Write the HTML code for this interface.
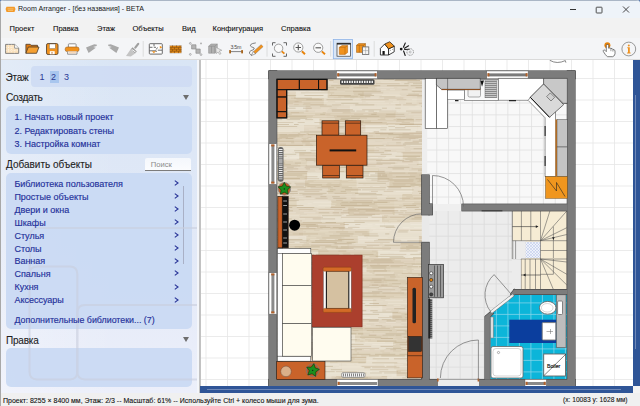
<!DOCTYPE html>
<html><head><meta charset="utf-8">
<style>
*{margin:0;padding:0;box-sizing:border-box}
html,body{width:640px;height:406px;overflow:hidden;background:#5f7fb3;font-family:"Liberation Sans",sans-serif}
.a{position:absolute}
#win{position:absolute;left:0;top:0;width:640px;height:406px;background:#f2f2f2;border-radius:4px 4px 0 0;overflow:hidden}
#title{left:0;top:0;width:640px;height:18px;background:#eef3f9}
#menu{left:0;top:18px;width:640px;height:20px;background:#f2f2f2}
#tool{left:0;top:38px;width:640px;height:22px;background:#f4f5f7;border-bottom:1px solid #dadada}
.t{position:absolute;white-space:nowrap;line-height:1;z-index:4}
.mi{font-size:7.55px;color:#111;top:24px;-webkit-text-stroke:0.1px #111}
#panel{left:0;top:60px;width:197px;height:333px;background:linear-gradient(90deg,rgba(255,255,255,0.25),rgba(255,255,255,0) 60%),linear-gradient(#d9e5f5,#e2e9f7 55%,#eceffa)}
.box{position:absolute;left:6px;width:185.5px;background:#c9d9f3;border-radius:5px;opacity:0.93}
.hd{font-size:10px;color:#1e1e1e;left:6px;-webkit-text-stroke:0.1px #1e1e1e}
.it{font-size:9px;color:#24309a;left:14.4px;-webkit-text-stroke:0.15px #24309a}
.chev{position:absolute;left:174px;width:4px;height:6px}
#canvas{left:201px;top:60px;width:432px;height:326px;background:#fff}
#status{left:0;top:393px;width:640px;height:13px;background:#f0f0f0}
</style></head><body>
<div id="win">
<div id="title" class="a">
  <div class="a" style="left:0;top:0;width:640px;height:1px;background:#aab6c6"></div>
  <svg class="a" style="left:5px;top:6px" width="11" height="7" viewBox="0 0 11 7"><path d="M1.5 0.8H9.5L10.5 3L9.5 6H1.5L0.6 3Z" fill="#f39a2a"/><path d="M2.5 2.9H8.5M3 4.4H8" stroke="#f9d08a" stroke-width="0.7"/></svg>
  <div class="t" style="left:18px;top:5.9px;font-size:7.1px;color:#1a1a1a">Room Arranger - [без названия] - BETA</div>
  <div class="a" style="left:570px;top:9.2px;width:6.2px;height:0.9px;background:#333"></div>
  <svg class="a" style="left:595px;top:5.5px" width="8" height="8" viewBox="0 0 8 8"><rect x="1.2" y="1.2" width="5.8" height="5.8" rx="0.6" fill="none" stroke="#333" stroke-width="0.85"/></svg>
  <svg class="a" style="left:622px;top:6px" width="8" height="7" viewBox="0 0 8 7"><path d="M1 0.5L7 6.5M7 0.5L1 6.5" stroke="#333" stroke-width="0.9"/></svg>
</div>
<div id="menu" class="a">
  <div class="t mi" style="left:9.5px;top:6.8px">Проект</div>
  <div class="t mi" style="left:53px;top:6.8px">Правка</div>
  <div class="t mi" style="left:97px;top:6.8px">Этаж</div>
  <div class="t mi" style="left:132.5px;top:6.8px">Объекты</div>
  <div class="t mi" style="left:182px;top:6.8px">Вид</div>
  <div class="t mi" style="left:212.5px;top:6.8px">Конфигурация</div>
  <div class="t mi" style="left:281px;top:6.8px">Справка</div>
</div>
<div id="tool" class="a"></div>
<svg class="a" style="left:0;top:38px" width="640" height="22" viewBox="0 38 640 22">
<!-- 1 new -->
<path d="M5.6 44.4H14.6L18.7 48.2V53.4H5.6Z" fill="#fbe2bd" stroke="#777" stroke-width="0.9"/>
<path d="M8.5 44.6V53.2M11.5 44.6V53.2M14.5 48V53.2M5.8 47.3H14.4M5.8 50.3H18.5" stroke="#fff" stroke-width="0.6" stroke-dasharray="1 1.2" opacity="0.9"/>
<path d="M14.6 44.4V48.2H18.7" fill="#fff" stroke="#777" stroke-width="0.7"/>
<!-- 2 folder -->
<path d="M25.9 53.3V44.3H30.2L31 45.3H37.5V47" fill="#e07a10" stroke="#4a3a2a" stroke-width="0.8"/>
<path d="M25.9 53.3L28.3 47H39L36.6 53.3Z" fill="#f5a033" stroke="#4a3a2a" stroke-width="0.8" stroke-linejoin="round"/>
<!-- 3 save -->
<rect x="46.5" y="43.5" width="11.5" height="11" rx="1.6" fill="#f0921e" stroke="#5a4632" stroke-width="0.9"/>
<rect x="49.4" y="44" width="5.9" height="4.6" fill="#fff" stroke="#6a5a4a" stroke-width="0.4"/>
<rect x="49.8" y="51.2" width="4.9" height="3.1" fill="#fff"/>
<rect x="51.4" y="52.2" width="1.2" height="1.4" fill="#c87020"/>
<!-- 4 printer -->
<path d="M68.4 47V44.5Q68.4 43.8 69.1 43.8H75.4Q76.1 43.8 76.1 44.5V47" fill="#fff" stroke="#777" stroke-width="0.8"/>
<rect x="65.2" y="47" width="13.8" height="4.6" rx="2" fill="#f0921e" stroke="#a0601a" stroke-width="0.6"/>
<path d="M67.6 51.6V54.2H77V51.6" fill="#fff" stroke="#777" stroke-width="0.8"/>
<path d="M68.6 52.8H76" stroke="#f0b070" stroke-width="0.7"/>
<!-- 5 undo -->
<path d="M86 47.4L91 45.4L94.3 44.2L97 44.7L96.6 46.1L93.2 47L95.8 47.8L88.6 53.1Z" fill="#a9a9a9"/>
<!-- 6 redo -->
<path d="M119 47.4L114 45.4L110.7 44.2L108 44.7L108.4 46.1L111.8 47L109.2 47.8L116.4 53.1Z" fill="#a9a9a9"/>
<!-- 7 brush -->
<path d="M138.2 43.8L135.3 47.6" stroke="#a0a0a0" stroke-width="2.2" stroke-linecap="round"/>
<path d="M130.5 49.4L132.6 47.3L136.8 51.5L135.1 53.6Z" fill="#9c9c9c"/>
<path d="M131.6 49.4L135.6 52" stroke="#fff" stroke-width="1"/>
<path d="M130.5 49.4L135.1 53.6L130.8 56.6L126 56Z" fill="#c4c4c4"/>
<!-- sep -->
<path d="M143.2 41V56.6" stroke="#d6d6d6" stroke-width="0.8"/>
<!-- 8 floor plan -->
<rect x="149.3" y="43.7" width="13" height="10.4" rx="0.8" fill="#fff" stroke="#5a5a5a" stroke-width="0.9"/>
<path d="M149.5 47.3H152.5M153.8 47.3H156M154 44V46.3M157.5 47.5L156.2 49.5M149.5 50.8H156.2V52M157.8 50.2H162" stroke="#4a4a4a" stroke-width="0.8" fill="none"/>
<path d="M159.8 45.8L162.2 47.3L159.8 48.8Z" fill="#f0921e"/>
<path d="M152 51.3H155.8L153.9 53.2Z" fill="#f0921e"/>
<!-- 9 brick -->
<rect x="169.8" y="45.4" width="11.8" height="7.7" fill="#e58a12" stroke="#b8c2d8" stroke-width="0.5"/>
<path d="M169.8 47.35H181.6M169.8 49.25H181.6M169.8 51.15H181.6M172.5 45.4V47.35M176.5 45.4V47.35M180 45.4V47.35M171 47.35V49.25M174.5 47.35V49.25M178.5 47.35V49.25M172.5 49.25V51.15M176.5 49.25V51.15M180 49.25V51.15M171 51.15V53.1M174.5 51.15V53.1M178.5 51.15V53.1" stroke="#7e4a12" stroke-width="0.6"/>
<!-- 10 transform -->
<path d="M191.6 44.8H196V49H200.2V53.3H195.9V49H191.6Z" fill="#b4b4b4" stroke="#888" stroke-width="0.6"/>
<circle cx="190.3" cy="43.4" r="0.9" fill="none" stroke="#888" stroke-width="0.6"/>
<circle cx="201" cy="43.4" r="0.9" fill="#aaa"/>
<circle cx="190.3" cy="54.4" r="0.9" fill="none" stroke="#888" stroke-width="0.6"/>
<circle cx="201" cy="54.6" r="0.9" fill="none" stroke="#888" stroke-width="0.6"/>
<!-- 11 3d box cursor -->
<path d="M208.6 46.2L211 44H217.3V51L214.9 53.2H208.6Z" fill="#b0b0b0" stroke="#999" stroke-width="0.6"/>
<path d="M208.6 46.2H214.9V53.2M214.9 46.2L217.3 44M211.5 46.3V53" stroke="#8a8a8a" stroke-width="0.6" fill="none"/>
<path d="M215.8 47.3L221.8 50.3L219.2 51.2L221 53.6L219.6 54.4L218 52L216.2 53.6Z" fill="#e8e8e8" stroke="#999" stroke-width="0.6"/>
<!-- 12 dimension -->
<text x="230.4" y="48.6" font-size="5.3" font-family="Liberation Sans" fill="#4a4a4a" letter-spacing="-0.25">3.5m</text>
<path d="M230 51.6H242.6" stroke="#666" stroke-width="0.8"/>
<rect x="229.2" y="50" width="1.8" height="3.4" rx="0.6" fill="#a8641c"/>
<rect x="241.2" y="50" width="1.8" height="3.4" rx="0.6" fill="#a8641c"/>
<!-- 13 pencil -->
<path d="M255.8 42.9Q252 43.3 250.8 44.5Q249.5 46 251.5 46.8Q255 47.8 254.2 49Q253.5 50 251 50.6Q248.8 51.6 249.6 53.6Q250.5 55 252 55.2" fill="none" stroke="#5a5a5a" stroke-width="0.75"/>
<path d="M262.2 45.6L254 53.1" stroke="#5a4a3a" stroke-width="3.4" stroke-opacity="0.55"/>
<path d="M262.2 45.6L254 53.1" stroke="#f0921e" stroke-width="2.6"/>
<path d="M253.2 51.6L255.4 53.8L251.4 55.6Z" fill="#fff" stroke="#555" stroke-width="0.5" stroke-linejoin="round"/>
<!-- sep -->
<path d="M267 41V56.6" stroke="#d6d6d6" stroke-width="0.8"/>
<!-- 14 zoom fit -->
<path d="M272.5 45.5V42.7H275.5M283.5 42.7H286.5V45.5M286.5 53.5V56.3H283.5M275.5 56.3H272.5V53.5" fill="none" stroke="#666" stroke-width="1"/>
<circle cx="278.6" cy="48.3" r="4.2" fill="#fafafa" stroke="#888" stroke-width="0.8"/>
<path d="M281.8 51.4L284.4 53.6" stroke="#e8840c" stroke-width="1.8"/>
<!-- 15 zoom in -->
<circle cx="298.3" cy="47.5" r="4.6" fill="#fafafa" stroke="#888" stroke-width="0.8"/>
<path d="M295.6 47.5H301M298.3 44.8V50.2" stroke="#555" stroke-width="1.1"/>
<path d="M301.9 51.2L305 54.2" stroke="#e8840c" stroke-width="1.9"/>
<!-- 16 zoom out -->
<circle cx="318.2" cy="47.8" r="4.6" fill="#fafafa" stroke="#888" stroke-width="0.8"/>
<path d="M315.5 47.8H321" stroke="#555" stroke-width="1.1"/>
<path d="M321.8 51.4L325 54.2" stroke="#e8840c" stroke-width="1.9"/>
<!-- sep -->
<path d="M330.7 41V56.6" stroke="#d6d6d6" stroke-width="0.8"/>
<!-- 17 active -->
<rect x="333.3" y="39.4" width="19.3" height="19.3" fill="#d9e6f7" stroke="#8fb4e6" stroke-width="0.8"/>
<rect x="337" y="43.2" width="13.6" height="13" fill="#fafafa" stroke="#333" stroke-width="0.7"/>
<rect x="337" y="43.2" width="13.6" height="1.3" fill="#1a1a1a"/>
<path d="M339.3 47.3L342 45.6H347.6V52.6L345 54.4H339.3Z" fill="#f0921e" stroke="#b0600a" stroke-width="0.5"/>
<path d="M339.3 47.3H345V54.4M345 47.3L347.6 45.6" stroke="#b0600a" stroke-width="0.5" fill="none"/>
<!-- 18 boxes shelf -->
<path d="M356.5 45.3L358.6 43.6H365.5V50.8L363.4 52.4H356.5Z" fill="#f0921e" stroke="#9a5a10" stroke-width="0.5"/>
<path d="M356.5 45.3H363.4V52.4M363.4 45.3L365.5 43.6M359.3 45.3V52.4" stroke="#9a5a10" stroke-width="0.5" fill="none"/>
<rect x="362.4" y="46.9" width="6.4" height="7.5" fill="#f6f6f6" stroke="#666" stroke-width="0.8"/>
<path d="M362.4 50.6H368.8M365.6 46.9V54.4" stroke="#999" stroke-width="0.5"/>
<!-- sep -->
<path d="M374.2 41V56.6" stroke="#d6d6d6" stroke-width="0.8"/>
<!-- 19 house -->
<path d="M380.4 48.4L384.7 44L388.6 48.9V55H380.4Z" fill="#fff" stroke="#111" stroke-width="0.8" stroke-linejoin="round"/>
<path d="M388.6 48.9L394.2 46.2V51.8L388.6 55Z" fill="#fff" stroke="#111" stroke-width="0.8" stroke-linejoin="round"/>
<path d="M384.7 44L389.7 41.8L394.4 46.2L388.6 48.9Z" fill="#f0921e" stroke="#111" stroke-width="0.7" stroke-linejoin="round"/>
<rect x="382.5" y="51" width="2.2" height="3.8" fill="#111"/>
<path d="M390.3 50.5L391 50.2M392.3 49.6L393 49.3" stroke="#555" stroke-width="0.7"/>
<!-- 20 lights -->
<circle cx="401.2" cy="49.1" r="1.4" fill="#1a1a1a"/>
<path d="M403.4 47.3L405.3 43.1M404.5 48.3L408.6 45.8M404.6 49.5L409.2 49.2M403.6 51L405.2 55.5" stroke="#1a1a1a" stroke-width="1.1" stroke-linecap="round"/>
<circle cx="410.2" cy="52" r="3.3" fill="none" stroke="#6a6a6a" stroke-width="0.7" stroke-dasharray="1.1 0.7"/>
<circle cx="410.2" cy="52" r="1" fill="none" stroke="#888" stroke-width="0.5"/>
<!-- 21 hand -->
<circle cx="607.4" cy="45.2" r="3" fill="#e8840c"/>
<path d="M606.3 51.6V45.3Q606.3 44.4 607.5 44.4Q608.7 44.4 608.7 45.3V48.3Q610.2 47.2 610.9 48.6Q612.4 48 612.9 49.6Q614.6 49.2 615 50.9V53.8Q614.8 56 612.6 56.7H607.6Q606.4 56 605.4 54.6L603.4 51.6Q602.8 50.5 603.7 50.1Q604.6 49.8 605.4 50.7Z" fill="#fff" stroke="#3a3a3a" stroke-width="0.65" stroke-linejoin="round"/>
<path d="M610.9 48.6V51.2M612.9 49.6V51.6" stroke="#3a3a3a" stroke-width="0.5"/>
<!-- 22 info -->
<circle cx="628.8" cy="49" r="6.9" fill="none" stroke="#8c8c8c" stroke-width="0.9"/>
<circle cx="628.8" cy="45.4" r="1" fill="#f0921e"/>
<path d="M627.3 47.3H629.8V52.5H630.6V53.4H627.1V52.5H628V48.2H627.3Z" fill="#f0921e"/>
</svg>

<div id="panel" class="a">
  <svg class="a" style="left:0;top:0;z-index:3" width="197" height="333" viewBox="0 60 197 333">
    <g fill="none" stroke="#c9cedd" stroke-width="2" opacity="0.6">
      <path d="M30 266 V236 Q30 228 38 228 H197"/>
      <path d="M29.5 262 V274 Q29.5 266.5 37 266.5 H70 Q77.3 266.5 77.3 274 V371.5 Q77.3 379.4 70 379.4 H37 Q29.5 379.4 29.5 371.5 V262"/>
      <path d="M77.3 371.5 V313 Q77.3 305 85 305 H197 M77.3 371.5 Q77.3 379.4 85 379.4 H197"/>
    </g>
  </svg>
  <div class="t hd" style="left:5.5px;top:13.3px;font-size:10px;letter-spacing:-0.2px">Этаж</div>
  <div class="box" style="top:5.6px;left:31px;width:160.6px;height:21.4px;border-radius:4px;background:#cfdcf3"></div>
  <div class="a" style="left:49.7px;top:10.6px;width:9.3px;height:12.2px;background:#a9c6ee"></div>
  <div class="t" style="left:39.5px;top:12.8px;font-size:9px;color:#2c3a94">1</div>
  <div class="t" style="left:51px;top:12.8px;font-size:9px;color:#2c3a94">2</div>
  <div class="t" style="left:64px;top:12.8px;font-size:9px;color:#2c3a94">3</div>
  <div class="t hd" style="top:32.8px;font-size:10.2px;letter-spacing:-0.3px">Создать</div>
  <svg class="a" style="left:182.5px;top:34.5px" width="6" height="5" viewBox="0 0 6 5"><path d="M0 0H6L3 5Z" fill="#6e6e6e"/></svg>
  <div class="box" style="top:45.5px;height:48px"></div>
  <div class="t it" style="top:52.8px">1. Начать новый проект</div>
  <div class="t it" style="top:66.5px">2. Редактировать стены</div>
  <div class="t it" style="top:79.9px">3. Настройка комнат</div>
  <div class="t hd" style="top:99.5px">Добавить объекты</div>
  <div class="a" style="left:145.3px;top:97.8px;width:46.1px;height:12.8px;background:linear-gradient(#f4f7fc,#fbfcfe);border-bottom:1.6px solid #7c7c7c;border-radius:2px 2px 0 0"></div>
  <div class="t" style="left:150.8px;top:100.8px;font-size:7.6px;color:#8a8a8a">Поиск</div>
  <div class="box" style="top:113px;height:156px"></div>
  <div class="a" style="left:183px;top:125.5px;width:1px;height:78.3px;background:#a9b0c6"></div>
  <div class="t it" style="top:120.0px">Библиотека пользователя</div>
  <div class="t it" style="top:132.9px">Простые объекты</div>
  <div class="t it" style="top:145.8px">Двери и окна</div>
  <div class="t it" style="top:158.7px">Шкафы</div>
  <div class="t it" style="top:171.6px">Стулья</div>
  <div class="t it" style="top:184.5px">Столы</div>
  <div class="t it" style="top:197.4px">Ванная</div>
  <div class="t it" style="top:210.3px">Спальня</div>
  <div class="t it" style="top:223.2px">Кухня</div>
  <div class="t it" style="top:236.1px">Аксессуары</div>
  <div class="t it" style="top:255.5px;font-size:8.85px">Дополнительные библиотеки... (7)</div>
  <svg class="a" style="left:174px;top:120.0px" width="5" height="6" viewBox="0 0 5 6"><path d="M0.8 0.6L4 3L0.8 5.4" fill="none" stroke="#2a3598" stroke-width="1.15"/></svg><svg class="a" style="left:174px;top:133.0px" width="5" height="6" viewBox="0 0 5 6"><path d="M0.8 0.6L4 3L0.8 5.4" fill="none" stroke="#2a3598" stroke-width="1.15"/></svg><svg class="a" style="left:174px;top:146.0px" width="5" height="6" viewBox="0 0 5 6"><path d="M0.8 0.6L4 3L0.8 5.4" fill="none" stroke="#2a3598" stroke-width="1.15"/></svg><svg class="a" style="left:174px;top:158.7px" width="5" height="6" viewBox="0 0 5 6"><path d="M0.8 0.6L4 3L0.8 5.4" fill="none" stroke="#2a3598" stroke-width="1.15"/></svg><svg class="a" style="left:174px;top:171.8px" width="5" height="6" viewBox="0 0 5 6"><path d="M0.8 0.6L4 3L0.8 5.4" fill="none" stroke="#2a3598" stroke-width="1.15"/></svg><svg class="a" style="left:174px;top:184.6px" width="5" height="6" viewBox="0 0 5 6"><path d="M0.8 0.6L4 3L0.8 5.4" fill="none" stroke="#2a3598" stroke-width="1.15"/></svg><svg class="a" style="left:174px;top:197.7px" width="5" height="6" viewBox="0 0 5 6"><path d="M0.8 0.6L4 3L0.8 5.4" fill="none" stroke="#2a3598" stroke-width="1.15"/></svg><svg class="a" style="left:174px;top:210.4px" width="5" height="6" viewBox="0 0 5 6"><path d="M0.8 0.6L4 3L0.8 5.4" fill="none" stroke="#2a3598" stroke-width="1.15"/></svg><svg class="a" style="left:174px;top:223.6px" width="5" height="6" viewBox="0 0 5 6"><path d="M0.8 0.6L4 3L0.8 5.4" fill="none" stroke="#2a3598" stroke-width="1.15"/></svg><svg class="a" style="left:174px;top:236.7px" width="5" height="6" viewBox="0 0 5 6"><path d="M0.8 0.6L4 3L0.8 5.4" fill="none" stroke="#2a3598" stroke-width="1.15"/></svg>
  <div class="t hd" style="top:275.5px;letter-spacing:-0.2px">Правка</div>
  <svg class="a" style="left:182.8px;top:277px" width="6" height="5" viewBox="0 0 6 5"><path d="M0 0H6L3 5Z" fill="#6e6e6e"/></svg>
  <div class="box" style="top:288px;height:39px"></div>
</div>
<div class="a" style="left:197px;top:60px;width:2px;height:333px;background:#f4f6fa"></div>
<div class="a" style="left:199px;top:60px;width:2px;height:333px;background:#c2c2c2"></div>
<div id="canvas" class="a"></div>
<!--PLAN-->
<svg class="a" style="left:201px;top:60px" width="432" height="326" viewBox="201 60 432 326">
<defs>
<clipPath id="woodclip"><rect x="276.7" y="78.7" width="145.3" height="300.8"/></clipPath>
<pattern id="diam" width="3" height="3" patternUnits="userSpaceOnUse"><rect width="3" height="3" fill="#eef2fb"/><path d="M0 0L3 3M3 0L0 3" stroke="#a8b8e0" stroke-width="0.4"/></pattern>
<clipPath id="bathclip"><path d="M490.5 379.5V313L511 295.5L514.5 294.5H567.3V379.5Z"/></clipPath>
</defs>
<path d="M206.00 60V386M227.50 60V386M249.00 60V386M270.50 60V386M292.00 60V386M313.50 60V386M335.00 60V386M356.50 60V386M378.00 60V386M399.50 60V386M421.00 60V386M442.50 60V386M464.00 60V386M485.50 60V386M507.00 60V386M528.50 60V386M550.00 60V386M571.50 60V386M593.00 60V386M614.50 60V386M201 78.50H633M201 100.00H633M201 121.50H633M201 143.00H633M201 164.50H633M201 186.00H633M201 207.50H633M201 229.00H633M201 250.50H633M201 272.00H633M201 293.50H633M201 315.00H633M201 336.50H633M201 358.00H633M201 379.50H633" stroke="#e6e6e6" stroke-width="0.8" fill="none"/>
<g clip-path="url(#woodclip)">
<rect x="276.7" y="78.7" width="145.3" height="300.8" fill="#dfd4be"/>
<rect x="229.3" y="78.0" width="47.8" height="7.0" fill="#e3d9c6"/>
<rect x="277.1" y="78.0" width="33.3" height="7.0" fill="#e0d5c1"/>
<rect x="310.3" y="78.0" width="34.2" height="7.0" fill="#e0d5c1"/>
<rect x="344.6" y="78.0" width="32.6" height="7.0" fill="#e0d5c1"/>
<rect x="377.2" y="78.0" width="39.7" height="7.0" fill="#e3d9c6"/>
<rect x="416.8" y="78.0" width="49.5" height="7.0" fill="#e3d9c6"/>
<rect x="272.2" y="85.0" width="49.1" height="6.5" fill="#e9e2d2"/>
<rect x="321.3" y="85.0" width="55.4" height="6.5" fill="#dcd0b9"/>
<rect x="376.7" y="85.0" width="58.4" height="6.5" fill="#e0d5c1"/>
<rect x="247.8" y="91.5" width="47.9" height="6.5" fill="#dcd0b9"/>
<rect x="295.7" y="91.5" width="32.1" height="6.5" fill="#e9e2d2"/>
<rect x="327.8" y="91.5" width="36.0" height="6.5" fill="#d9ccb3"/>
<rect x="363.8" y="91.5" width="36.5" height="6.5" fill="#e3d9c6"/>
<rect x="400.3" y="91.5" width="55.7" height="6.5" fill="#e0d5c1"/>
<rect x="267.7" y="98.0" width="56.2" height="7.5" fill="#d7c9b0"/>
<rect x="323.8" y="98.0" width="38.5" height="7.5" fill="#e3d9c6"/>
<rect x="362.3" y="98.0" width="54.6" height="7.5" fill="#e3d9c6"/>
<rect x="416.9" y="98.0" width="55.4" height="7.5" fill="#e0d5c1"/>
<rect x="251.9" y="105.5" width="53.9" height="6.5" fill="#e9e2d2"/>
<rect x="305.8" y="105.5" width="44.1" height="6.5" fill="#e0d5c1"/>
<rect x="349.9" y="105.5" width="71.6" height="6.5" fill="#e7dfce"/>
<rect x="421.5" y="105.5" width="43.5" height="6.5" fill="#e9e2d2"/>
<rect x="241.8" y="112.0" width="41.0" height="6.5" fill="#e0d5c1"/>
<rect x="282.7" y="112.0" width="43.5" height="6.5" fill="#d9ccb3"/>
<rect x="326.2" y="112.0" width="69.4" height="6.5" fill="#d7c9b0"/>
<rect x="395.6" y="112.0" width="50.2" height="6.5" fill="#e0d5c1"/>
<rect x="270.8" y="118.5" width="48.8" height="6.5" fill="#e9e2d2"/>
<rect x="319.6" y="118.5" width="45.4" height="6.5" fill="#d9ccb3"/>
<rect x="365.0" y="118.5" width="49.0" height="6.5" fill="#d7c9b0"/>
<rect x="414.0" y="118.5" width="33.5" height="6.5" fill="#e0d5c1"/>
<rect x="237.2" y="125.0" width="66.8" height="7.5" fill="#e7dfce"/>
<rect x="304.1" y="125.0" width="61.3" height="7.5" fill="#e0d5c1"/>
<rect x="365.4" y="125.0" width="52.4" height="7.5" fill="#e9e2d2"/>
<rect x="417.7" y="125.0" width="50.5" height="7.5" fill="#e9e2d2"/>
<rect x="229.5" y="132.5" width="51.3" height="6.5" fill="#d7c9b0"/>
<rect x="280.8" y="132.5" width="32.9" height="6.5" fill="#d7c9b0"/>
<rect x="313.7" y="132.5" width="61.6" height="6.5" fill="#d7c9b0"/>
<rect x="375.3" y="132.5" width="56.0" height="6.5" fill="#d7c9b0"/>
<rect x="262.5" y="139.0" width="47.4" height="7.0" fill="#d7c9b0"/>
<rect x="309.8" y="139.0" width="45.6" height="7.0" fill="#d9ccb3"/>
<rect x="355.4" y="139.0" width="46.0" height="7.0" fill="#e0d5c1"/>
<rect x="401.4" y="139.0" width="35.3" height="7.0" fill="#e3d9c6"/>
<rect x="238.3" y="146.0" width="35.8" height="6.5" fill="#dcd0b9"/>
<rect x="274.1" y="146.0" width="47.9" height="6.5" fill="#e9e2d2"/>
<rect x="322.0" y="146.0" width="52.3" height="6.5" fill="#dcd0b9"/>
<rect x="374.4" y="146.0" width="50.2" height="6.5" fill="#e0d5c1"/>
<rect x="232.5" y="152.5" width="66.9" height="7.0" fill="#e9e2d2"/>
<rect x="299.4" y="152.5" width="54.8" height="7.0" fill="#d7c9b0"/>
<rect x="354.2" y="152.5" width="48.7" height="7.0" fill="#e7dfce"/>
<rect x="402.8" y="152.5" width="60.7" height="7.0" fill="#d9ccb3"/>
<rect x="269.2" y="159.5" width="37.9" height="6.5" fill="#dcd0b9"/>
<rect x="307.1" y="159.5" width="59.6" height="6.5" fill="#e3d9c6"/>
<rect x="366.7" y="159.5" width="51.8" height="6.5" fill="#e0d5c1"/>
<rect x="418.5" y="159.5" width="38.2" height="6.5" fill="#e7dfce"/>
<rect x="269.4" y="166.0" width="54.1" height="6.5" fill="#e0d5c1"/>
<rect x="323.5" y="166.0" width="55.5" height="6.5" fill="#dcd0b9"/>
<rect x="379.0" y="166.0" width="61.1" height="6.5" fill="#e0d5c1"/>
<rect x="244.0" y="172.5" width="63.3" height="7.5" fill="#d9ccb3"/>
<rect x="307.2" y="172.5" width="70.5" height="7.5" fill="#e9e2d2"/>
<rect x="377.7" y="172.5" width="72.8" height="7.5" fill="#d7c9b0"/>
<rect x="257.1" y="180.0" width="48.0" height="7.5" fill="#e3d9c6"/>
<rect x="305.0" y="180.0" width="51.7" height="7.5" fill="#d9ccb3"/>
<rect x="356.7" y="180.0" width="32.8" height="7.5" fill="#e3d9c6"/>
<rect x="389.5" y="180.0" width="74.3" height="7.5" fill="#d9ccb3"/>
<rect x="271.2" y="187.5" width="57.0" height="6.5" fill="#e3d9c6"/>
<rect x="328.2" y="187.5" width="30.0" height="6.5" fill="#dcd0b9"/>
<rect x="358.2" y="187.5" width="54.1" height="6.5" fill="#e7dfce"/>
<rect x="412.4" y="187.5" width="57.6" height="6.5" fill="#e3d9c6"/>
<rect x="246.0" y="194.0" width="36.7" height="6.5" fill="#e7dfce"/>
<rect x="282.7" y="194.0" width="73.0" height="6.5" fill="#e0d5c1"/>
<rect x="355.7" y="194.0" width="46.4" height="6.5" fill="#e3d9c6"/>
<rect x="402.1" y="194.0" width="35.2" height="6.5" fill="#d9ccb3"/>
<rect x="252.7" y="200.5" width="44.0" height="7.0" fill="#dcd0b9"/>
<rect x="296.7" y="200.5" width="34.6" height="7.0" fill="#e7dfce"/>
<rect x="331.3" y="200.5" width="63.3" height="7.0" fill="#d9ccb3"/>
<rect x="394.6" y="200.5" width="67.3" height="7.0" fill="#dcd0b9"/>
<rect x="275.5" y="207.5" width="72.8" height="7.5" fill="#e0d5c1"/>
<rect x="348.3" y="207.5" width="46.3" height="7.5" fill="#d7c9b0"/>
<rect x="394.6" y="207.5" width="54.4" height="7.5" fill="#e3d9c6"/>
<rect x="261.8" y="215.0" width="58.9" height="7.5" fill="#e3d9c6"/>
<rect x="320.7" y="215.0" width="61.3" height="7.5" fill="#e7dfce"/>
<rect x="382.1" y="215.0" width="53.3" height="7.5" fill="#dcd0b9"/>
<rect x="238.1" y="222.5" width="54.0" height="7.0" fill="#e9e2d2"/>
<rect x="292.1" y="222.5" width="52.6" height="7.0" fill="#d7c9b0"/>
<rect x="344.7" y="222.5" width="40.0" height="7.0" fill="#e9e2d2"/>
<rect x="384.7" y="222.5" width="65.5" height="7.0" fill="#e9e2d2"/>
<rect x="236.4" y="229.5" width="66.8" height="6.5" fill="#d7c9b0"/>
<rect x="303.2" y="229.5" width="66.1" height="6.5" fill="#dcd0b9"/>
<rect x="369.4" y="229.5" width="53.3" height="6.5" fill="#e7dfce"/>
<rect x="275.3" y="236.0" width="31.3" height="7.5" fill="#e7dfce"/>
<rect x="306.5" y="236.0" width="51.3" height="7.5" fill="#dcd0b9"/>
<rect x="357.8" y="236.0" width="61.2" height="7.5" fill="#e7dfce"/>
<rect x="418.9" y="236.0" width="50.1" height="7.5" fill="#d7c9b0"/>
<rect x="228.9" y="243.5" width="46.4" height="7.0" fill="#dcd0b9"/>
<rect x="275.4" y="243.5" width="34.6" height="7.0" fill="#d9ccb3"/>
<rect x="310.0" y="243.5" width="38.9" height="7.0" fill="#dcd0b9"/>
<rect x="348.8" y="243.5" width="51.7" height="7.0" fill="#e0d5c1"/>
<rect x="400.5" y="243.5" width="67.8" height="7.0" fill="#d9ccb3"/>
<rect x="259.5" y="250.5" width="58.9" height="7.5" fill="#e9e2d2"/>
<rect x="318.4" y="250.5" width="59.7" height="7.5" fill="#d9ccb3"/>
<rect x="378.2" y="250.5" width="65.2" height="7.5" fill="#e9e2d2"/>
<rect x="252.8" y="258.0" width="38.0" height="6.5" fill="#e9e2d2"/>
<rect x="290.8" y="258.0" width="58.6" height="6.5" fill="#e3d9c6"/>
<rect x="349.4" y="258.0" width="66.0" height="6.5" fill="#d7c9b0"/>
<rect x="415.5" y="258.0" width="47.8" height="6.5" fill="#d9ccb3"/>
<rect x="229.4" y="264.5" width="62.6" height="7.5" fill="#dcd0b9"/>
<rect x="292.0" y="264.5" width="74.7" height="7.5" fill="#e3d9c6"/>
<rect x="366.7" y="264.5" width="36.8" height="7.5" fill="#d9ccb3"/>
<rect x="403.5" y="264.5" width="66.3" height="7.5" fill="#dcd0b9"/>
<rect x="235.4" y="272.0" width="74.1" height="7.5" fill="#d7c9b0"/>
<rect x="309.5" y="272.0" width="72.2" height="7.5" fill="#dcd0b9"/>
<rect x="381.7" y="272.0" width="54.7" height="7.5" fill="#dcd0b9"/>
<rect x="276.0" y="279.5" width="73.7" height="6.5" fill="#d7c9b0"/>
<rect x="349.7" y="279.5" width="34.6" height="6.5" fill="#d7c9b0"/>
<rect x="384.3" y="279.5" width="72.0" height="6.5" fill="#d9ccb3"/>
<rect x="235.4" y="286.0" width="39.5" height="6.5" fill="#e7dfce"/>
<rect x="274.9" y="286.0" width="39.6" height="6.5" fill="#e0d5c1"/>
<rect x="314.5" y="286.0" width="40.8" height="6.5" fill="#e0d5c1"/>
<rect x="355.3" y="286.0" width="44.7" height="6.5" fill="#e0d5c1"/>
<rect x="400.0" y="286.0" width="48.9" height="6.5" fill="#dcd0b9"/>
<rect x="231.2" y="292.5" width="45.9" height="6.5" fill="#d9ccb3"/>
<rect x="277.1" y="292.5" width="59.8" height="6.5" fill="#e9e2d2"/>
<rect x="336.9" y="292.5" width="70.7" height="6.5" fill="#d9ccb3"/>
<rect x="407.6" y="292.5" width="67.2" height="6.5" fill="#e0d5c1"/>
<rect x="250.1" y="299.0" width="53.6" height="6.5" fill="#e3d9c6"/>
<rect x="303.7" y="299.0" width="69.3" height="6.5" fill="#e9e2d2"/>
<rect x="372.9" y="299.0" width="38.2" height="6.5" fill="#e3d9c6"/>
<rect x="411.2" y="299.0" width="64.9" height="6.5" fill="#dcd0b9"/>
<rect x="269.6" y="305.5" width="57.9" height="6.5" fill="#e3d9c6"/>
<rect x="327.5" y="305.5" width="55.0" height="6.5" fill="#e7dfce"/>
<rect x="382.5" y="305.5" width="60.7" height="6.5" fill="#e0d5c1"/>
<rect x="252.6" y="312.0" width="64.9" height="7.5" fill="#e0d5c1"/>
<rect x="317.5" y="312.0" width="32.6" height="7.5" fill="#dcd0b9"/>
<rect x="350.1" y="312.0" width="42.5" height="7.5" fill="#e9e2d2"/>
<rect x="392.5" y="312.0" width="34.4" height="7.5" fill="#d9ccb3"/>
<rect x="275.3" y="319.5" width="70.2" height="7.5" fill="#e3d9c6"/>
<rect x="345.5" y="319.5" width="49.9" height="7.5" fill="#e0d5c1"/>
<rect x="395.5" y="319.5" width="73.8" height="7.5" fill="#e0d5c1"/>
<rect x="266.7" y="327.0" width="42.5" height="7.5" fill="#e0d5c1"/>
<rect x="309.2" y="327.0" width="54.0" height="7.5" fill="#d9ccb3"/>
<rect x="363.2" y="327.0" width="52.8" height="7.5" fill="#dcd0b9"/>
<rect x="416.0" y="327.0" width="61.5" height="7.5" fill="#e7dfce"/>
<rect x="232.1" y="334.5" width="39.1" height="7.5" fill="#d9ccb3"/>
<rect x="271.2" y="334.5" width="36.2" height="7.5" fill="#e3d9c6"/>
<rect x="307.3" y="334.5" width="47.7" height="7.5" fill="#e7dfce"/>
<rect x="355.0" y="334.5" width="33.3" height="7.5" fill="#dcd0b9"/>
<rect x="388.3" y="334.5" width="49.3" height="7.5" fill="#dcd0b9"/>
<rect x="261.6" y="342.0" width="35.5" height="7.5" fill="#e9e2d2"/>
<rect x="297.1" y="342.0" width="37.0" height="7.5" fill="#d7c9b0"/>
<rect x="334.0" y="342.0" width="59.0" height="7.5" fill="#e7dfce"/>
<rect x="393.0" y="342.0" width="36.4" height="7.5" fill="#dcd0b9"/>
<rect x="265.7" y="349.5" width="72.9" height="7.0" fill="#d9ccb3"/>
<rect x="338.6" y="349.5" width="69.8" height="7.0" fill="#dcd0b9"/>
<rect x="408.4" y="349.5" width="74.5" height="7.0" fill="#e9e2d2"/>
<rect x="268.6" y="356.5" width="49.4" height="6.5" fill="#e0d5c1"/>
<rect x="318.0" y="356.5" width="48.2" height="6.5" fill="#d9ccb3"/>
<rect x="366.2" y="356.5" width="38.8" height="6.5" fill="#e7dfce"/>
<rect x="405.0" y="356.5" width="34.1" height="6.5" fill="#e7dfce"/>
<rect x="259.8" y="363.0" width="50.6" height="6.5" fill="#d7c9b0"/>
<rect x="310.4" y="363.0" width="30.8" height="6.5" fill="#e7dfce"/>
<rect x="341.3" y="363.0" width="53.3" height="6.5" fill="#e7dfce"/>
<rect x="394.5" y="363.0" width="53.1" height="6.5" fill="#e3d9c6"/>
<rect x="227.4" y="369.5" width="65.5" height="6.5" fill="#e3d9c6"/>
<rect x="292.9" y="369.5" width="33.8" height="6.5" fill="#e7dfce"/>
<rect x="326.7" y="369.5" width="31.8" height="6.5" fill="#e9e2d2"/>
<rect x="358.5" y="369.5" width="38.2" height="6.5" fill="#e9e2d2"/>
<rect x="396.7" y="369.5" width="35.8" height="6.5" fill="#d9ccb3"/>
<rect x="235.8" y="376.0" width="41.6" height="7.5" fill="#dcd0b9"/>
<rect x="277.4" y="376.0" width="54.1" height="7.5" fill="#e0d5c1"/>
<rect x="331.5" y="376.0" width="55.7" height="7.5" fill="#d7c9b0"/>
<rect x="387.2" y="376.0" width="44.7" height="7.5" fill="#e7dfce"/>
<rect x="282.7" y="78.7" width="14.2" height="1" fill="#b8a482" opacity="0.42"/>
<rect x="300.4" y="78.7" width="4.4" height="1" fill="#b8a482" opacity="0.42"/>
<rect x="313.0" y="78.7" width="6.0" height="1" fill="#c2af8e" opacity="0.42"/>
<rect x="320.6" y="78.7" width="24.7" height="1" fill="#ece2cf" opacity="0.42"/>
<rect x="346.4" y="78.7" width="27.9" height="1" fill="#ece2cf" opacity="0.42"/>
<rect x="383.6" y="78.7" width="10.4" height="1" fill="#c2af8e" opacity="0.42"/>
<rect x="395.4" y="78.7" width="21.0" height="1" fill="#b8a482" opacity="0.42"/>
<rect x="426.2" y="78.7" width="10.3" height="1" fill="#c2af8e" opacity="0.42"/>
<rect x="264.7" y="80.0" width="16.7" height="1" fill="#c2af8e" opacity="0.42"/>
<rect x="285.1" y="80.0" width="16.0" height="1" fill="#c2af8e" opacity="0.42"/>
<rect x="304.5" y="80.0" width="23.3" height="1" fill="#f1e9da" opacity="0.42"/>
<rect x="329.1" y="80.0" width="4.4" height="1" fill="#b09b77" opacity="0.42"/>
<rect x="339.5" y="80.0" width="8.5" height="1" fill="#ece2cf" opacity="0.42"/>
<rect x="351.3" y="80.0" width="14.7" height="1" fill="#f4ede0" opacity="0.42"/>
<rect x="374.4" y="80.0" width="14.4" height="1" fill="#ece2cf" opacity="0.42"/>
<rect x="394.7" y="80.0" width="25.3" height="1" fill="#b09b77" opacity="0.42"/>
<rect x="423.8" y="80.0" width="9.2" height="1" fill="#c2af8e" opacity="0.42"/>
<rect x="281.7" y="81.6" width="21.5" height="1" fill="#c2af8e" opacity="0.42"/>
<rect x="307.8" y="81.6" width="12.3" height="1" fill="#b8a482" opacity="0.42"/>
<rect x="328.7" y="81.6" width="4.3" height="1" fill="#f4ede0" opacity="0.42"/>
<rect x="340.7" y="81.6" width="10.1" height="1" fill="#c2af8e" opacity="0.42"/>
<rect x="352.3" y="81.6" width="20.0" height="1" fill="#ece2cf" opacity="0.42"/>
<rect x="381.1" y="81.6" width="20.1" height="1" fill="#f1e9da" opacity="0.42"/>
<rect x="407.6" y="81.6" width="20.6" height="1" fill="#b8a482" opacity="0.42"/>
<rect x="276.4" y="83.2" width="4.1" height="1" fill="#f1e9da" opacity="0.42"/>
<rect x="290.2" y="83.2" width="27.3" height="1" fill="#b09b77" opacity="0.42"/>
<rect x="321.4" y="83.2" width="4.8" height="1" fill="#f1e9da" opacity="0.42"/>
<rect x="329.2" y="83.2" width="8.4" height="1" fill="#f1e9da" opacity="0.42"/>
<rect x="342.0" y="83.2" width="15.4" height="1" fill="#b09b77" opacity="0.42"/>
<rect x="364.3" y="83.2" width="10.0" height="1" fill="#b8a482" opacity="0.42"/>
<rect x="376.1" y="83.2" width="23.6" height="1" fill="#c2af8e" opacity="0.42"/>
<rect x="404.3" y="83.2" width="5.0" height="1" fill="#b8a482" opacity="0.42"/>
<rect x="413.0" y="83.2" width="19.1" height="1" fill="#b8a482" opacity="0.42"/>
<rect x="266.2" y="85.2" width="7.7" height="1" fill="#f4ede0" opacity="0.42"/>
<rect x="282.0" y="85.2" width="18.3" height="1" fill="#f1e9da" opacity="0.42"/>
<rect x="307.8" y="85.2" width="15.9" height="1" fill="#f1e9da" opacity="0.42"/>
<rect x="331.2" y="85.2" width="19.4" height="1" fill="#b8a482" opacity="0.42"/>
<rect x="359.1" y="85.2" width="21.2" height="1" fill="#b09b77" opacity="0.42"/>
<rect x="386.9" y="85.2" width="21.6" height="1" fill="#b09b77" opacity="0.42"/>
<rect x="410.7" y="85.2" width="16.6" height="1" fill="#b09b77" opacity="0.42"/>
<rect x="268.2" y="87.2" width="23.8" height="1" fill="#b09b77" opacity="0.42"/>
<rect x="300.3" y="87.2" width="21.1" height="1" fill="#f4ede0" opacity="0.42"/>
<rect x="328.1" y="87.2" width="6.0" height="1" fill="#b8a482" opacity="0.42"/>
<rect x="336.4" y="87.2" width="12.7" height="1" fill="#b8a482" opacity="0.42"/>
<rect x="353.4" y="87.2" width="14.8" height="1" fill="#b8a482" opacity="0.42"/>
<rect x="374.9" y="87.2" width="19.0" height="1" fill="#f4ede0" opacity="0.42"/>
<rect x="397.1" y="87.2" width="10.3" height="1" fill="#ece2cf" opacity="0.42"/>
<rect x="415.6" y="87.2" width="22.0" height="1" fill="#b09b77" opacity="0.42"/>
<rect x="280.6" y="89.2" width="21.9" height="1" fill="#ece2cf" opacity="0.42"/>
<rect x="305.8" y="89.2" width="5.8" height="1" fill="#f1e9da" opacity="0.42"/>
<rect x="314.7" y="89.2" width="22.2" height="1" fill="#c2af8e" opacity="0.42"/>
<rect x="344.5" y="89.2" width="27.4" height="1" fill="#ece2cf" opacity="0.42"/>
<rect x="380.5" y="89.2" width="5.8" height="1" fill="#f4ede0" opacity="0.42"/>
<rect x="389.9" y="89.2" width="5.1" height="1" fill="#f4ede0" opacity="0.42"/>
<rect x="401.8" y="89.2" width="5.9" height="1" fill="#c2af8e" opacity="0.42"/>
<rect x="411.7" y="89.2" width="19.6" height="1" fill="#f4ede0" opacity="0.42"/>
<rect x="266.5" y="90.8" width="15.6" height="1" fill="#ece2cf" opacity="0.42"/>
<rect x="285.5" y="90.8" width="20.1" height="1" fill="#f4ede0" opacity="0.42"/>
<rect x="308.6" y="90.8" width="15.8" height="1" fill="#f4ede0" opacity="0.42"/>
<rect x="330.0" y="90.8" width="15.2" height="1" fill="#ece2cf" opacity="0.42"/>
<rect x="353.0" y="90.8" width="27.8" height="1" fill="#b09b77" opacity="0.42"/>
<rect x="383.7" y="90.8" width="27.5" height="1" fill="#ece2cf" opacity="0.42"/>
<rect x="412.3" y="90.8" width="15.0" height="1" fill="#b09b77" opacity="0.42"/>
<rect x="261.3" y="92.4" width="26.0" height="1" fill="#c2af8e" opacity="0.42"/>
<rect x="289.0" y="92.4" width="6.2" height="1" fill="#f4ede0" opacity="0.42"/>
<rect x="300.9" y="92.4" width="26.9" height="1" fill="#c2af8e" opacity="0.42"/>
<rect x="334.2" y="92.4" width="19.2" height="1" fill="#f1e9da" opacity="0.42"/>
<rect x="362.3" y="92.4" width="20.9" height="1" fill="#c2af8e" opacity="0.42"/>
<rect x="388.7" y="92.4" width="25.0" height="1" fill="#ece2cf" opacity="0.42"/>
<rect x="414.9" y="92.4" width="4.1" height="1" fill="#ece2cf" opacity="0.42"/>
<rect x="426.1" y="92.4" width="13.7" height="1" fill="#f4ede0" opacity="0.42"/>
<rect x="272.8" y="93.7" width="6.9" height="1" fill="#f1e9da" opacity="0.42"/>
<rect x="280.7" y="93.7" width="22.0" height="1" fill="#ece2cf" opacity="0.42"/>
<rect x="304.8" y="93.7" width="26.2" height="1" fill="#f4ede0" opacity="0.42"/>
<rect x="332.1" y="93.7" width="21.8" height="1" fill="#f1e9da" opacity="0.42"/>
<rect x="358.2" y="93.7" width="13.4" height="1" fill="#b09b77" opacity="0.42"/>
<rect x="373.3" y="93.7" width="26.2" height="1" fill="#f1e9da" opacity="0.42"/>
<rect x="408.2" y="93.7" width="10.7" height="1" fill="#b8a482" opacity="0.42"/>
<rect x="427.5" y="93.7" width="10.9" height="1" fill="#c2af8e" opacity="0.42"/>
<rect x="262.2" y="95.0" width="11.6" height="1" fill="#f1e9da" opacity="0.42"/>
<rect x="281.8" y="95.0" width="14.3" height="1" fill="#b8a482" opacity="0.42"/>
<rect x="304.4" y="95.0" width="19.1" height="1" fill="#b09b77" opacity="0.42"/>
<rect x="329.5" y="95.0" width="21.3" height="1" fill="#b8a482" opacity="0.42"/>
<rect x="360.2" y="95.0" width="13.9" height="1" fill="#b09b77" opacity="0.42"/>
<rect x="381.8" y="95.0" width="19.5" height="1" fill="#f1e9da" opacity="0.42"/>
<rect x="406.6" y="95.0" width="25.9" height="1" fill="#b09b77" opacity="0.42"/>
<rect x="278.0" y="96.3" width="10.8" height="1" fill="#f1e9da" opacity="0.42"/>
<rect x="296.4" y="96.3" width="27.4" height="1" fill="#f1e9da" opacity="0.42"/>
<rect x="328.5" y="96.3" width="9.7" height="1" fill="#ece2cf" opacity="0.42"/>
<rect x="344.3" y="96.3" width="13.5" height="1" fill="#c2af8e" opacity="0.42"/>
<rect x="364.5" y="96.3" width="5.8" height="1" fill="#b09b77" opacity="0.42"/>
<rect x="379.5" y="96.3" width="15.9" height="1" fill="#c2af8e" opacity="0.42"/>
<rect x="400.5" y="96.3" width="12.0" height="1" fill="#ece2cf" opacity="0.42"/>
<rect x="417.3" y="96.3" width="17.1" height="1" fill="#c2af8e" opacity="0.42"/>
<rect x="279.2" y="97.6" width="11.7" height="1" fill="#f1e9da" opacity="0.42"/>
<rect x="294.2" y="97.6" width="17.7" height="1" fill="#b8a482" opacity="0.42"/>
<rect x="319.6" y="97.6" width="13.9" height="1" fill="#ece2cf" opacity="0.42"/>
<rect x="341.2" y="97.6" width="9.0" height="1" fill="#f1e9da" opacity="0.42"/>
<rect x="354.3" y="97.6" width="5.5" height="1" fill="#f1e9da" opacity="0.42"/>
<rect x="366.0" y="97.6" width="12.6" height="1" fill="#f4ede0" opacity="0.42"/>
<rect x="384.2" y="97.6" width="19.1" height="1" fill="#c2af8e" opacity="0.42"/>
<rect x="405.1" y="97.6" width="25.5" height="1" fill="#ece2cf" opacity="0.42"/>
<rect x="268.7" y="99.2" width="11.5" height="1" fill="#b8a482" opacity="0.42"/>
<rect x="282.3" y="99.2" width="14.2" height="1" fill="#ece2cf" opacity="0.42"/>
<rect x="306.2" y="99.2" width="15.8" height="1" fill="#b8a482" opacity="0.42"/>
<rect x="326.5" y="99.2" width="26.2" height="1" fill="#b09b77" opacity="0.42"/>
<rect x="361.4" y="99.2" width="27.3" height="1" fill="#c2af8e" opacity="0.42"/>
<rect x="396.8" y="99.2" width="9.4" height="1" fill="#c2af8e" opacity="0.42"/>
<rect x="411.9" y="99.2" width="20.4" height="1" fill="#f4ede0" opacity="0.42"/>
<rect x="271.6" y="101.2" width="15.0" height="1" fill="#b09b77" opacity="0.42"/>
<rect x="294.6" y="101.2" width="4.0" height="1" fill="#c2af8e" opacity="0.42"/>
<rect x="301.7" y="101.2" width="26.1" height="1" fill="#f4ede0" opacity="0.42"/>
<rect x="335.2" y="101.2" width="27.1" height="1" fill="#f4ede0" opacity="0.42"/>
<rect x="365.6" y="101.2" width="19.3" height="1" fill="#f4ede0" opacity="0.42"/>
<rect x="392.8" y="101.2" width="6.4" height="1" fill="#f1e9da" opacity="0.42"/>
<rect x="404.9" y="101.2" width="18.0" height="1" fill="#ece2cf" opacity="0.42"/>
<rect x="278.6" y="102.8" width="4.3" height="1" fill="#f1e9da" opacity="0.42"/>
<rect x="292.9" y="102.8" width="10.7" height="1" fill="#f1e9da" opacity="0.42"/>
<rect x="310.3" y="102.8" width="25.2" height="1" fill="#ece2cf" opacity="0.42"/>
<rect x="341.3" y="102.8" width="17.1" height="1" fill="#b8a482" opacity="0.42"/>
<rect x="368.1" y="102.8" width="20.9" height="1" fill="#f1e9da" opacity="0.42"/>
<rect x="390.5" y="102.8" width="8.7" height="1" fill="#f4ede0" opacity="0.42"/>
<rect x="406.0" y="102.8" width="5.9" height="1" fill="#c2af8e" opacity="0.42"/>
<rect x="418.9" y="102.8" width="26.2" height="1" fill="#c2af8e" opacity="0.42"/>
<rect x="280.1" y="104.4" width="14.1" height="1" fill="#f4ede0" opacity="0.42"/>
<rect x="298.7" y="104.4" width="4.2" height="1" fill="#f1e9da" opacity="0.42"/>
<rect x="310.5" y="104.4" width="16.1" height="1" fill="#c2af8e" opacity="0.42"/>
<rect x="332.1" y="104.4" width="8.8" height="1" fill="#c2af8e" opacity="0.42"/>
<rect x="344.0" y="104.4" width="9.3" height="1" fill="#f1e9da" opacity="0.42"/>
<rect x="355.3" y="104.4" width="19.0" height="1" fill="#b09b77" opacity="0.42"/>
<rect x="376.9" y="104.4" width="9.4" height="1" fill="#ece2cf" opacity="0.42"/>
<rect x="395.5" y="104.4" width="5.4" height="1" fill="#b09b77" opacity="0.42"/>
<rect x="403.2" y="104.4" width="13.4" height="1" fill="#c2af8e" opacity="0.42"/>
<rect x="417.8" y="104.4" width="18.3" height="1" fill="#ece2cf" opacity="0.42"/>
<rect x="265.2" y="105.7" width="14.8" height="1" fill="#f4ede0" opacity="0.42"/>
<rect x="288.9" y="105.7" width="21.6" height="1" fill="#b8a482" opacity="0.42"/>
<rect x="319.9" y="105.7" width="11.9" height="1" fill="#c2af8e" opacity="0.42"/>
<rect x="338.6" y="105.7" width="16.6" height="1" fill="#ece2cf" opacity="0.42"/>
<rect x="356.5" y="105.7" width="19.9" height="1" fill="#ece2cf" opacity="0.42"/>
<rect x="385.0" y="105.7" width="27.6" height="1" fill="#ece2cf" opacity="0.42"/>
<rect x="415.2" y="105.7" width="4.1" height="1" fill="#f1e9da" opacity="0.42"/>
<rect x="421.0" y="105.7" width="14.1" height="1" fill="#b8a482" opacity="0.42"/>
<rect x="260.3" y="107.7" width="12.6" height="1" fill="#f1e9da" opacity="0.42"/>
<rect x="281.2" y="107.7" width="14.4" height="1" fill="#b8a482" opacity="0.42"/>
<rect x="303.0" y="107.7" width="8.7" height="1" fill="#b09b77" opacity="0.42"/>
<rect x="320.9" y="107.7" width="8.6" height="1" fill="#f1e9da" opacity="0.42"/>
<rect x="337.2" y="107.7" width="15.4" height="1" fill="#f4ede0" opacity="0.42"/>
<rect x="357.3" y="107.7" width="23.5" height="1" fill="#ece2cf" opacity="0.42"/>
<rect x="382.1" y="107.7" width="4.8" height="1" fill="#b8a482" opacity="0.42"/>
<rect x="395.2" y="107.7" width="5.5" height="1" fill="#c2af8e" opacity="0.42"/>
<rect x="408.4" y="107.7" width="25.6" height="1" fill="#f1e9da" opacity="0.42"/>
<rect x="280.9" y="109.3" width="18.8" height="1" fill="#f1e9da" opacity="0.42"/>
<rect x="307.4" y="109.3" width="20.5" height="1" fill="#f1e9da" opacity="0.42"/>
<rect x="331.6" y="109.3" width="21.3" height="1" fill="#b09b77" opacity="0.42"/>
<rect x="362.2" y="109.3" width="19.2" height="1" fill="#b8a482" opacity="0.42"/>
<rect x="382.6" y="109.3" width="9.6" height="1" fill="#ece2cf" opacity="0.42"/>
<rect x="399.7" y="109.3" width="15.2" height="1" fill="#ece2cf" opacity="0.42"/>
<rect x="423.0" y="109.3" width="25.9" height="1" fill="#ece2cf" opacity="0.42"/>
<rect x="260.8" y="110.6" width="23.3" height="1" fill="#f4ede0" opacity="0.42"/>
<rect x="287.8" y="110.6" width="20.6" height="1" fill="#c2af8e" opacity="0.42"/>
<rect x="314.9" y="110.6" width="11.9" height="1" fill="#f1e9da" opacity="0.42"/>
<rect x="331.9" y="110.6" width="22.8" height="1" fill="#b09b77" opacity="0.42"/>
<rect x="356.4" y="110.6" width="8.7" height="1" fill="#c2af8e" opacity="0.42"/>
<rect x="368.4" y="110.6" width="5.6" height="1" fill="#b8a482" opacity="0.42"/>
<rect x="379.2" y="110.6" width="17.1" height="1" fill="#c2af8e" opacity="0.42"/>
<rect x="406.1" y="110.6" width="25.2" height="1" fill="#b8a482" opacity="0.42"/>
<rect x="267.1" y="112.2" width="14.1" height="1" fill="#f4ede0" opacity="0.42"/>
<rect x="290.9" y="112.2" width="8.2" height="1" fill="#c2af8e" opacity="0.42"/>
<rect x="303.8" y="112.2" width="18.9" height="1" fill="#f4ede0" opacity="0.42"/>
<rect x="325.8" y="112.2" width="16.9" height="1" fill="#f4ede0" opacity="0.42"/>
<rect x="350.6" y="112.2" width="22.7" height="1" fill="#f1e9da" opacity="0.42"/>
<rect x="377.0" y="112.2" width="17.6" height="1" fill="#f1e9da" opacity="0.42"/>
<rect x="397.9" y="112.2" width="10.2" height="1" fill="#ece2cf" opacity="0.42"/>
<rect x="411.3" y="112.2" width="9.9" height="1" fill="#c2af8e" opacity="0.42"/>
<rect x="424.8" y="112.2" width="25.8" height="1" fill="#c2af8e" opacity="0.42"/>
<rect x="278.7" y="113.8" width="9.9" height="1" fill="#b09b77" opacity="0.42"/>
<rect x="291.7" y="113.8" width="23.4" height="1" fill="#f4ede0" opacity="0.42"/>
<rect x="320.2" y="113.8" width="4.9" height="1" fill="#b8a482" opacity="0.42"/>
<rect x="330.4" y="113.8" width="23.7" height="1" fill="#ece2cf" opacity="0.42"/>
<rect x="363.3" y="113.8" width="5.0" height="1" fill="#f1e9da" opacity="0.42"/>
<rect x="371.3" y="113.8" width="5.2" height="1" fill="#b09b77" opacity="0.42"/>
<rect x="386.3" y="113.8" width="18.0" height="1" fill="#b8a482" opacity="0.42"/>
<rect x="408.7" y="113.8" width="24.8" height="1" fill="#ece2cf" opacity="0.42"/>
<rect x="279.5" y="115.8" width="26.7" height="1" fill="#b8a482" opacity="0.42"/>
<rect x="312.9" y="115.8" width="21.0" height="1" fill="#f1e9da" opacity="0.42"/>
<rect x="336.9" y="115.8" width="12.8" height="1" fill="#c2af8e" opacity="0.42"/>
<rect x="351.2" y="115.8" width="28.0" height="1" fill="#b8a482" opacity="0.42"/>
<rect x="385.6" y="115.8" width="19.6" height="1" fill="#c2af8e" opacity="0.42"/>
<rect x="413.5" y="115.8" width="23.7" height="1" fill="#ece2cf" opacity="0.42"/>
<rect x="275.9" y="117.8" width="5.9" height="1" fill="#b8a482" opacity="0.42"/>
<rect x="289.9" y="117.8" width="17.2" height="1" fill="#b8a482" opacity="0.42"/>
<rect x="311.7" y="117.8" width="23.1" height="1" fill="#f4ede0" opacity="0.42"/>
<rect x="340.8" y="117.8" width="19.3" height="1" fill="#b8a482" opacity="0.42"/>
<rect x="367.0" y="117.8" width="13.5" height="1" fill="#f1e9da" opacity="0.42"/>
<rect x="385.2" y="117.8" width="10.8" height="1" fill="#f1e9da" opacity="0.42"/>
<rect x="400.8" y="117.8" width="5.2" height="1" fill="#f4ede0" opacity="0.42"/>
<rect x="412.1" y="117.8" width="12.6" height="1" fill="#ece2cf" opacity="0.42"/>
<rect x="269.4" y="119.1" width="12.7" height="1" fill="#c2af8e" opacity="0.42"/>
<rect x="286.6" y="119.1" width="13.7" height="1" fill="#b8a482" opacity="0.42"/>
<rect x="305.3" y="119.1" width="7.8" height="1" fill="#b8a482" opacity="0.42"/>
<rect x="321.4" y="119.1" width="13.7" height="1" fill="#f1e9da" opacity="0.42"/>
<rect x="340.3" y="119.1" width="7.9" height="1" fill="#b8a482" opacity="0.42"/>
<rect x="349.7" y="119.1" width="7.4" height="1" fill="#ece2cf" opacity="0.42"/>
<rect x="358.9" y="119.1" width="18.9" height="1" fill="#f1e9da" opacity="0.42"/>
<rect x="385.5" y="119.1" width="8.1" height="1" fill="#f1e9da" opacity="0.42"/>
<rect x="397.1" y="119.1" width="16.5" height="1" fill="#b8a482" opacity="0.42"/>
<rect x="415.6" y="119.1" width="15.8" height="1" fill="#c2af8e" opacity="0.42"/>
<rect x="283.7" y="120.7" width="27.4" height="1" fill="#ece2cf" opacity="0.42"/>
<rect x="314.9" y="120.7" width="18.6" height="1" fill="#f4ede0" opacity="0.42"/>
<rect x="338.0" y="120.7" width="25.7" height="1" fill="#b09b77" opacity="0.42"/>
<rect x="370.9" y="120.7" width="25.4" height="1" fill="#f4ede0" opacity="0.42"/>
<rect x="404.3" y="120.7" width="9.3" height="1" fill="#ece2cf" opacity="0.42"/>
<rect x="420.2" y="120.7" width="8.7" height="1" fill="#ece2cf" opacity="0.42"/>
<rect x="266.8" y="122.0" width="26.5" height="1" fill="#c2af8e" opacity="0.42"/>
<rect x="297.7" y="122.0" width="7.0" height="1" fill="#c2af8e" opacity="0.42"/>
<rect x="314.4" y="122.0" width="23.6" height="1" fill="#c2af8e" opacity="0.42"/>
<rect x="339.4" y="122.0" width="17.5" height="1" fill="#f4ede0" opacity="0.42"/>
<rect x="358.2" y="122.0" width="24.1" height="1" fill="#b8a482" opacity="0.42"/>
<rect x="386.8" y="122.0" width="14.9" height="1" fill="#f4ede0" opacity="0.42"/>
<rect x="409.8" y="122.0" width="19.6" height="1" fill="#f1e9da" opacity="0.42"/>
<rect x="276.2" y="124.0" width="12.8" height="1" fill="#b09b77" opacity="0.42"/>
<rect x="294.0" y="124.0" width="4.6" height="1" fill="#b09b77" opacity="0.42"/>
<rect x="308.4" y="124.0" width="15.2" height="1" fill="#ece2cf" opacity="0.42"/>
<rect x="331.5" y="124.0" width="22.7" height="1" fill="#ece2cf" opacity="0.42"/>
<rect x="362.7" y="124.0" width="23.5" height="1" fill="#ece2cf" opacity="0.42"/>
<rect x="388.1" y="124.0" width="7.1" height="1" fill="#ece2cf" opacity="0.42"/>
<rect x="399.5" y="124.0" width="23.3" height="1" fill="#b09b77" opacity="0.42"/>
<rect x="264.9" y="126.0" width="7.1" height="1" fill="#f4ede0" opacity="0.42"/>
<rect x="275.9" y="126.0" width="21.3" height="1" fill="#b8a482" opacity="0.42"/>
<rect x="298.7" y="126.0" width="16.1" height="1" fill="#ece2cf" opacity="0.42"/>
<rect x="321.6" y="126.0" width="22.8" height="1" fill="#b8a482" opacity="0.42"/>
<rect x="353.2" y="126.0" width="27.9" height="1" fill="#f4ede0" opacity="0.42"/>
<rect x="388.3" y="126.0" width="6.6" height="1" fill="#c2af8e" opacity="0.42"/>
<rect x="404.8" y="126.0" width="15.8" height="1" fill="#c2af8e" opacity="0.42"/>
<rect x="427.7" y="126.0" width="21.3" height="1" fill="#c2af8e" opacity="0.42"/>
<rect x="266.5" y="127.3" width="10.1" height="1" fill="#f1e9da" opacity="0.42"/>
<rect x="285.7" y="127.3" width="10.6" height="1" fill="#ece2cf" opacity="0.42"/>
<rect x="298.5" y="127.3" width="16.1" height="1" fill="#ece2cf" opacity="0.42"/>
<rect x="317.5" y="127.3" width="10.3" height="1" fill="#b09b77" opacity="0.42"/>
<rect x="330.9" y="127.3" width="12.9" height="1" fill="#c2af8e" opacity="0.42"/>
<rect x="346.5" y="127.3" width="7.9" height="1" fill="#f1e9da" opacity="0.42"/>
<rect x="361.5" y="127.3" width="25.5" height="1" fill="#c2af8e" opacity="0.42"/>
<rect x="395.1" y="127.3" width="10.3" height="1" fill="#b09b77" opacity="0.42"/>
<rect x="406.9" y="127.3" width="24.6" height="1" fill="#ece2cf" opacity="0.42"/>
<rect x="273.5" y="129.3" width="25.5" height="1" fill="#f1e9da" opacity="0.42"/>
<rect x="308.9" y="129.3" width="19.1" height="1" fill="#ece2cf" opacity="0.42"/>
<rect x="335.7" y="129.3" width="12.9" height="1" fill="#ece2cf" opacity="0.42"/>
<rect x="358.5" y="129.3" width="17.9" height="1" fill="#f1e9da" opacity="0.42"/>
<rect x="380.3" y="129.3" width="6.0" height="1" fill="#c2af8e" opacity="0.42"/>
<rect x="388.9" y="129.3" width="21.8" height="1" fill="#b8a482" opacity="0.42"/>
<rect x="414.4" y="129.3" width="16.4" height="1" fill="#f1e9da" opacity="0.42"/>
<rect x="266.2" y="131.3" width="26.3" height="1" fill="#f1e9da" opacity="0.42"/>
<rect x="300.1" y="131.3" width="21.9" height="1" fill="#c2af8e" opacity="0.42"/>
<rect x="324.4" y="131.3" width="18.8" height="1" fill="#ece2cf" opacity="0.42"/>
<rect x="347.9" y="131.3" width="12.7" height="1" fill="#b8a482" opacity="0.42"/>
<rect x="362.8" y="131.3" width="9.5" height="1" fill="#f4ede0" opacity="0.42"/>
<rect x="373.7" y="131.3" width="5.3" height="1" fill="#b09b77" opacity="0.42"/>
<rect x="383.2" y="131.3" width="6.6" height="1" fill="#f1e9da" opacity="0.42"/>
<rect x="395.6" y="131.3" width="13.9" height="1" fill="#f1e9da" opacity="0.42"/>
<rect x="415.8" y="131.3" width="8.9" height="1" fill="#b09b77" opacity="0.42"/>
<rect x="274.7" y="132.9" width="23.2" height="1" fill="#f4ede0" opacity="0.42"/>
<rect x="300.2" y="132.9" width="6.3" height="1" fill="#f4ede0" opacity="0.42"/>
<rect x="308.8" y="132.9" width="20.0" height="1" fill="#f1e9da" opacity="0.42"/>
<rect x="333.4" y="132.9" width="10.3" height="1" fill="#b8a482" opacity="0.42"/>
<rect x="345.3" y="132.9" width="23.7" height="1" fill="#f1e9da" opacity="0.42"/>
<rect x="375.3" y="132.9" width="17.9" height="1" fill="#b09b77" opacity="0.42"/>
<rect x="402.6" y="132.9" width="21.6" height="1" fill="#c2af8e" opacity="0.42"/>
<rect x="260.0" y="134.2" width="16.8" height="1" fill="#ece2cf" opacity="0.42"/>
<rect x="279.5" y="134.2" width="7.8" height="1" fill="#b8a482" opacity="0.42"/>
<rect x="288.4" y="134.2" width="17.2" height="1" fill="#c2af8e" opacity="0.42"/>
<rect x="307.9" y="134.2" width="8.8" height="1" fill="#b09b77" opacity="0.42"/>
<rect x="323.5" y="134.2" width="19.5" height="1" fill="#ece2cf" opacity="0.42"/>
<rect x="351.3" y="134.2" width="8.2" height="1" fill="#f1e9da" opacity="0.42"/>
<rect x="361.1" y="134.2" width="19.0" height="1" fill="#f4ede0" opacity="0.42"/>
<rect x="388.2" y="134.2" width="21.2" height="1" fill="#b8a482" opacity="0.42"/>
<rect x="413.7" y="134.2" width="14.5" height="1" fill="#ece2cf" opacity="0.42"/>
<rect x="266.9" y="135.5" width="9.4" height="1" fill="#b8a482" opacity="0.42"/>
<rect x="279.7" y="135.5" width="19.5" height="1" fill="#b8a482" opacity="0.42"/>
<rect x="303.2" y="135.5" width="22.0" height="1" fill="#f4ede0" opacity="0.42"/>
<rect x="334.7" y="135.5" width="10.3" height="1" fill="#b8a482" opacity="0.42"/>
<rect x="348.4" y="135.5" width="17.3" height="1" fill="#ece2cf" opacity="0.42"/>
<rect x="372.8" y="135.5" width="26.0" height="1" fill="#f1e9da" opacity="0.42"/>
<rect x="402.5" y="135.5" width="26.3" height="1" fill="#c2af8e" opacity="0.42"/>
<rect x="260.2" y="136.8" width="10.2" height="1" fill="#c2af8e" opacity="0.42"/>
<rect x="279.1" y="136.8" width="8.9" height="1" fill="#c2af8e" opacity="0.42"/>
<rect x="295.6" y="136.8" width="11.8" height="1" fill="#ece2cf" opacity="0.42"/>
<rect x="311.4" y="136.8" width="9.7" height="1" fill="#f4ede0" opacity="0.42"/>
<rect x="330.5" y="136.8" width="27.6" height="1" fill="#b09b77" opacity="0.42"/>
<rect x="363.3" y="136.8" width="24.2" height="1" fill="#f4ede0" opacity="0.42"/>
<rect x="388.5" y="136.8" width="4.6" height="1" fill="#f4ede0" opacity="0.42"/>
<rect x="396.2" y="136.8" width="25.2" height="1" fill="#c2af8e" opacity="0.42"/>
<rect x="426.0" y="136.8" width="18.0" height="1" fill="#b09b77" opacity="0.42"/>
<rect x="275.1" y="138.1" width="6.6" height="1" fill="#c2af8e" opacity="0.42"/>
<rect x="285.7" y="138.1" width="7.4" height="1" fill="#b8a482" opacity="0.42"/>
<rect x="294.4" y="138.1" width="7.3" height="1" fill="#f4ede0" opacity="0.42"/>
<rect x="308.4" y="138.1" width="20.7" height="1" fill="#f4ede0" opacity="0.42"/>
<rect x="330.6" y="138.1" width="24.6" height="1" fill="#f1e9da" opacity="0.42"/>
<rect x="357.9" y="138.1" width="26.9" height="1" fill="#b09b77" opacity="0.42"/>
<rect x="393.9" y="138.1" width="5.6" height="1" fill="#f4ede0" opacity="0.42"/>
<rect x="408.9" y="138.1" width="6.6" height="1" fill="#c2af8e" opacity="0.42"/>
<rect x="418.3" y="138.1" width="4.8" height="1" fill="#f4ede0" opacity="0.42"/>
<rect x="266.9" y="139.4" width="10.9" height="1" fill="#b8a482" opacity="0.42"/>
<rect x="280.0" y="139.4" width="23.0" height="1" fill="#f4ede0" opacity="0.42"/>
<rect x="305.8" y="139.4" width="11.7" height="1" fill="#ece2cf" opacity="0.42"/>
<rect x="320.8" y="139.4" width="12.4" height="1" fill="#f1e9da" opacity="0.42"/>
<rect x="334.7" y="139.4" width="22.2" height="1" fill="#f1e9da" opacity="0.42"/>
<rect x="364.9" y="139.4" width="18.4" height="1" fill="#ece2cf" opacity="0.42"/>
<rect x="392.0" y="139.4" width="18.8" height="1" fill="#b8a482" opacity="0.42"/>
<rect x="418.9" y="139.4" width="4.7" height="1" fill="#b09b77" opacity="0.42"/>
<rect x="277.1" y="140.7" width="16.9" height="1" fill="#c2af8e" opacity="0.42"/>
<rect x="301.4" y="140.7" width="23.9" height="1" fill="#b09b77" opacity="0.42"/>
<rect x="333.7" y="140.7" width="8.1" height="1" fill="#b8a482" opacity="0.42"/>
<rect x="347.5" y="140.7" width="10.9" height="1" fill="#b8a482" opacity="0.42"/>
<rect x="359.5" y="140.7" width="15.8" height="1" fill="#ece2cf" opacity="0.42"/>
<rect x="382.5" y="140.7" width="23.8" height="1" fill="#ece2cf" opacity="0.42"/>
<rect x="412.6" y="140.7" width="27.0" height="1" fill="#b09b77" opacity="0.42"/>
<rect x="267.6" y="142.3" width="23.6" height="1" fill="#f4ede0" opacity="0.42"/>
<rect x="294.2" y="142.3" width="8.0" height="1" fill="#f4ede0" opacity="0.42"/>
<rect x="310.1" y="142.3" width="15.8" height="1" fill="#f4ede0" opacity="0.42"/>
<rect x="331.9" y="142.3" width="6.5" height="1" fill="#f1e9da" opacity="0.42"/>
<rect x="342.6" y="142.3" width="13.6" height="1" fill="#ece2cf" opacity="0.42"/>
<rect x="365.3" y="142.3" width="21.9" height="1" fill="#ece2cf" opacity="0.42"/>
<rect x="396.2" y="142.3" width="4.6" height="1" fill="#c2af8e" opacity="0.42"/>
<rect x="404.5" y="142.3" width="14.3" height="1" fill="#b09b77" opacity="0.42"/>
<rect x="424.3" y="142.3" width="13.1" height="1" fill="#f4ede0" opacity="0.42"/>
<rect x="260.0" y="143.6" width="18.3" height="1" fill="#f4ede0" opacity="0.42"/>
<rect x="286.0" y="143.6" width="19.5" height="1" fill="#f1e9da" opacity="0.42"/>
<rect x="311.7" y="143.6" width="16.5" height="1" fill="#ece2cf" opacity="0.42"/>
<rect x="335.2" y="143.6" width="21.8" height="1" fill="#c2af8e" opacity="0.42"/>
<rect x="362.2" y="143.6" width="20.5" height="1" fill="#f1e9da" opacity="0.42"/>
<rect x="389.0" y="143.6" width="7.0" height="1" fill="#ece2cf" opacity="0.42"/>
<rect x="402.8" y="143.6" width="20.7" height="1" fill="#b09b77" opacity="0.42"/>
<rect x="279.1" y="144.9" width="23.8" height="1" fill="#b09b77" opacity="0.42"/>
<rect x="305.4" y="144.9" width="7.7" height="1" fill="#c2af8e" opacity="0.42"/>
<rect x="320.6" y="144.9" width="18.5" height="1" fill="#f1e9da" opacity="0.42"/>
<rect x="341.5" y="144.9" width="11.9" height="1" fill="#c2af8e" opacity="0.42"/>
<rect x="356.7" y="144.9" width="26.9" height="1" fill="#b8a482" opacity="0.42"/>
<rect x="386.1" y="144.9" width="19.8" height="1" fill="#c2af8e" opacity="0.42"/>
<rect x="410.4" y="144.9" width="27.6" height="1" fill="#f1e9da" opacity="0.42"/>
<rect x="274.2" y="146.9" width="6.6" height="1" fill="#b8a482" opacity="0.42"/>
<rect x="284.4" y="146.9" width="25.2" height="1" fill="#ece2cf" opacity="0.42"/>
<rect x="310.9" y="146.9" width="13.6" height="1" fill="#ece2cf" opacity="0.42"/>
<rect x="331.7" y="146.9" width="16.0" height="1" fill="#f4ede0" opacity="0.42"/>
<rect x="351.4" y="146.9" width="4.5" height="1" fill="#f1e9da" opacity="0.42"/>
<rect x="362.4" y="146.9" width="13.7" height="1" fill="#f4ede0" opacity="0.42"/>
<rect x="379.3" y="146.9" width="24.5" height="1" fill="#f4ede0" opacity="0.42"/>
<rect x="409.9" y="146.9" width="22.0" height="1" fill="#ece2cf" opacity="0.42"/>
<rect x="270.2" y="148.2" width="25.1" height="1" fill="#f4ede0" opacity="0.42"/>
<rect x="302.6" y="148.2" width="24.5" height="1" fill="#f4ede0" opacity="0.42"/>
<rect x="329.7" y="148.2" width="7.0" height="1" fill="#ece2cf" opacity="0.42"/>
<rect x="340.5" y="148.2" width="19.1" height="1" fill="#b8a482" opacity="0.42"/>
<rect x="368.6" y="148.2" width="9.8" height="1" fill="#ece2cf" opacity="0.42"/>
<rect x="385.8" y="148.2" width="19.1" height="1" fill="#f1e9da" opacity="0.42"/>
<rect x="413.6" y="148.2" width="15.6" height="1" fill="#b8a482" opacity="0.42"/>
<rect x="265.2" y="150.2" width="19.9" height="1" fill="#c2af8e" opacity="0.42"/>
<rect x="294.1" y="150.2" width="11.9" height="1" fill="#b8a482" opacity="0.42"/>
<rect x="310.5" y="150.2" width="15.8" height="1" fill="#b8a482" opacity="0.42"/>
<rect x="327.6" y="150.2" width="17.0" height="1" fill="#c2af8e" opacity="0.42"/>
<rect x="352.1" y="150.2" width="26.8" height="1" fill="#c2af8e" opacity="0.42"/>
<rect x="384.6" y="150.2" width="6.4" height="1" fill="#b09b77" opacity="0.42"/>
<rect x="396.1" y="150.2" width="8.9" height="1" fill="#ece2cf" opacity="0.42"/>
<rect x="410.6" y="150.2" width="19.3" height="1" fill="#f1e9da" opacity="0.42"/>
<rect x="277.5" y="152.2" width="15.0" height="1" fill="#f4ede0" opacity="0.42"/>
<rect x="295.1" y="152.2" width="16.3" height="1" fill="#b8a482" opacity="0.42"/>
<rect x="319.0" y="152.2" width="18.7" height="1" fill="#f4ede0" opacity="0.42"/>
<rect x="339.3" y="152.2" width="10.6" height="1" fill="#ece2cf" opacity="0.42"/>
<rect x="351.4" y="152.2" width="5.8" height="1" fill="#ece2cf" opacity="0.42"/>
<rect x="363.9" y="152.2" width="20.2" height="1" fill="#b09b77" opacity="0.42"/>
<rect x="387.5" y="152.2" width="9.4" height="1" fill="#f4ede0" opacity="0.42"/>
<rect x="401.5" y="152.2" width="26.9" height="1" fill="#c2af8e" opacity="0.42"/>
<rect x="269.9" y="153.8" width="26.3" height="1" fill="#b8a482" opacity="0.42"/>
<rect x="304.5" y="153.8" width="19.2" height="1" fill="#ece2cf" opacity="0.42"/>
<rect x="330.5" y="153.8" width="21.3" height="1" fill="#c2af8e" opacity="0.42"/>
<rect x="356.0" y="153.8" width="19.3" height="1" fill="#ece2cf" opacity="0.42"/>
<rect x="380.6" y="153.8" width="11.1" height="1" fill="#b09b77" opacity="0.42"/>
<rect x="398.5" y="153.8" width="22.7" height="1" fill="#ece2cf" opacity="0.42"/>
<rect x="425.4" y="153.8" width="24.4" height="1" fill="#f1e9da" opacity="0.42"/>
<rect x="272.5" y="155.8" width="14.2" height="1" fill="#c2af8e" opacity="0.42"/>
<rect x="292.0" y="155.8" width="23.3" height="1" fill="#f1e9da" opacity="0.42"/>
<rect x="319.6" y="155.8" width="19.7" height="1" fill="#f1e9da" opacity="0.42"/>
<rect x="344.6" y="155.8" width="14.3" height="1" fill="#f4ede0" opacity="0.42"/>
<rect x="360.6" y="155.8" width="25.5" height="1" fill="#c2af8e" opacity="0.42"/>
<rect x="395.5" y="155.8" width="24.5" height="1" fill="#b8a482" opacity="0.42"/>
<rect x="421.8" y="155.8" width="17.6" height="1" fill="#f1e9da" opacity="0.42"/>
<rect x="270.2" y="157.1" width="18.0" height="1" fill="#f4ede0" opacity="0.42"/>
<rect x="289.3" y="157.1" width="26.8" height="1" fill="#f4ede0" opacity="0.42"/>
<rect x="319.8" y="157.1" width="18.6" height="1" fill="#b09b77" opacity="0.42"/>
<rect x="340.6" y="157.1" width="9.6" height="1" fill="#ece2cf" opacity="0.42"/>
<rect x="354.4" y="157.1" width="7.7" height="1" fill="#ece2cf" opacity="0.42"/>
<rect x="370.2" y="157.1" width="8.0" height="1" fill="#f4ede0" opacity="0.42"/>
<rect x="384.7" y="157.1" width="22.8" height="1" fill="#f4ede0" opacity="0.42"/>
<rect x="416.5" y="157.1" width="17.2" height="1" fill="#f4ede0" opacity="0.42"/>
<rect x="280.0" y="158.7" width="16.7" height="1" fill="#f4ede0" opacity="0.42"/>
<rect x="305.3" y="158.7" width="20.1" height="1" fill="#b8a482" opacity="0.42"/>
<rect x="331.4" y="158.7" width="10.3" height="1" fill="#c2af8e" opacity="0.42"/>
<rect x="350.2" y="158.7" width="15.4" height="1" fill="#b09b77" opacity="0.42"/>
<rect x="367.1" y="158.7" width="15.2" height="1" fill="#c2af8e" opacity="0.42"/>
<rect x="389.6" y="158.7" width="9.9" height="1" fill="#c2af8e" opacity="0.42"/>
<rect x="405.3" y="158.7" width="24.7" height="1" fill="#b8a482" opacity="0.42"/>
<rect x="265.1" y="160.0" width="17.5" height="1" fill="#f4ede0" opacity="0.42"/>
<rect x="286.3" y="160.0" width="15.2" height="1" fill="#ece2cf" opacity="0.42"/>
<rect x="306.2" y="160.0" width="27.1" height="1" fill="#b8a482" opacity="0.42"/>
<rect x="335.9" y="160.0" width="12.6" height="1" fill="#f4ede0" opacity="0.42"/>
<rect x="349.8" y="160.0" width="18.6" height="1" fill="#f4ede0" opacity="0.42"/>
<rect x="376.1" y="160.0" width="28.0" height="1" fill="#b8a482" opacity="0.42"/>
<rect x="409.6" y="160.0" width="15.6" height="1" fill="#c2af8e" opacity="0.42"/>
<rect x="277.2" y="161.3" width="7.0" height="1" fill="#b8a482" opacity="0.42"/>
<rect x="293.0" y="161.3" width="12.8" height="1" fill="#ece2cf" opacity="0.42"/>
<rect x="313.8" y="161.3" width="17.3" height="1" fill="#c2af8e" opacity="0.42"/>
<rect x="334.6" y="161.3" width="12.2" height="1" fill="#f1e9da" opacity="0.42"/>
<rect x="352.8" y="161.3" width="23.8" height="1" fill="#f1e9da" opacity="0.42"/>
<rect x="380.9" y="161.3" width="15.8" height="1" fill="#f1e9da" opacity="0.42"/>
<rect x="402.2" y="161.3" width="10.5" height="1" fill="#b09b77" opacity="0.42"/>
<rect x="416.9" y="161.3" width="8.9" height="1" fill="#ece2cf" opacity="0.42"/>
<rect x="273.9" y="162.6" width="11.2" height="1" fill="#b09b77" opacity="0.42"/>
<rect x="294.9" y="162.6" width="6.1" height="1" fill="#b8a482" opacity="0.42"/>
<rect x="305.6" y="162.6" width="17.3" height="1" fill="#ece2cf" opacity="0.42"/>
<rect x="328.8" y="162.6" width="5.2" height="1" fill="#f1e9da" opacity="0.42"/>
<rect x="335.9" y="162.6" width="5.1" height="1" fill="#ece2cf" opacity="0.42"/>
<rect x="347.5" y="162.6" width="19.8" height="1" fill="#b09b77" opacity="0.42"/>
<rect x="376.5" y="162.6" width="18.7" height="1" fill="#b09b77" opacity="0.42"/>
<rect x="397.5" y="162.6" width="20.2" height="1" fill="#f4ede0" opacity="0.42"/>
<rect x="424.1" y="162.6" width="20.3" height="1" fill="#c2af8e" opacity="0.42"/>
<rect x="268.5" y="163.9" width="22.3" height="1" fill="#b8a482" opacity="0.42"/>
<rect x="297.8" y="163.9" width="24.9" height="1" fill="#ece2cf" opacity="0.42"/>
<rect x="330.6" y="163.9" width="25.9" height="1" fill="#f4ede0" opacity="0.42"/>
<rect x="357.6" y="163.9" width="24.9" height="1" fill="#c2af8e" opacity="0.42"/>
<rect x="390.7" y="163.9" width="17.5" height="1" fill="#f1e9da" opacity="0.42"/>
<rect x="416.9" y="163.9" width="8.4" height="1" fill="#b8a482" opacity="0.42"/>
<rect x="282.4" y="165.5" width="17.9" height="1" fill="#b8a482" opacity="0.42"/>
<rect x="305.7" y="165.5" width="16.5" height="1" fill="#b8a482" opacity="0.42"/>
<rect x="330.2" y="165.5" width="14.1" height="1" fill="#f4ede0" opacity="0.42"/>
<rect x="353.6" y="165.5" width="14.7" height="1" fill="#b8a482" opacity="0.42"/>
<rect x="375.5" y="165.5" width="18.3" height="1" fill="#f4ede0" opacity="0.42"/>
<rect x="403.5" y="165.5" width="15.4" height="1" fill="#ece2cf" opacity="0.42"/>
<rect x="424.9" y="165.5" width="6.0" height="1" fill="#ece2cf" opacity="0.42"/>
<rect x="265.4" y="166.8" width="14.2" height="1" fill="#b8a482" opacity="0.42"/>
<rect x="286.8" y="166.8" width="6.9" height="1" fill="#b8a482" opacity="0.42"/>
<rect x="296.7" y="166.8" width="6.9" height="1" fill="#ece2cf" opacity="0.42"/>
<rect x="304.8" y="166.8" width="21.3" height="1" fill="#c2af8e" opacity="0.42"/>
<rect x="331.1" y="166.8" width="21.9" height="1" fill="#b8a482" opacity="0.42"/>
<rect x="357.3" y="166.8" width="21.9" height="1" fill="#f4ede0" opacity="0.42"/>
<rect x="387.9" y="166.8" width="21.5" height="1" fill="#b8a482" opacity="0.42"/>
<rect x="413.0" y="166.8" width="17.4" height="1" fill="#ece2cf" opacity="0.42"/>
<rect x="272.3" y="168.4" width="25.9" height="1" fill="#b8a482" opacity="0.42"/>
<rect x="305.7" y="168.4" width="4.3" height="1" fill="#b8a482" opacity="0.42"/>
<rect x="318.9" y="168.4" width="20.5" height="1" fill="#b09b77" opacity="0.42"/>
<rect x="341.1" y="168.4" width="11.5" height="1" fill="#f4ede0" opacity="0.42"/>
<rect x="359.0" y="168.4" width="27.0" height="1" fill="#ece2cf" opacity="0.42"/>
<rect x="392.5" y="168.4" width="11.6" height="1" fill="#b09b77" opacity="0.42"/>
<rect x="411.6" y="168.4" width="15.3" height="1" fill="#c2af8e" opacity="0.42"/>
<rect x="259.4" y="169.7" width="26.9" height="1" fill="#c2af8e" opacity="0.42"/>
<rect x="293.0" y="169.7" width="14.0" height="1" fill="#ece2cf" opacity="0.42"/>
<rect x="315.0" y="169.7" width="14.9" height="1" fill="#f1e9da" opacity="0.42"/>
<rect x="337.9" y="169.7" width="17.6" height="1" fill="#f1e9da" opacity="0.42"/>
<rect x="359.1" y="169.7" width="18.9" height="1" fill="#f4ede0" opacity="0.42"/>
<rect x="385.3" y="169.7" width="23.9" height="1" fill="#f1e9da" opacity="0.42"/>
<rect x="418.0" y="169.7" width="21.4" height="1" fill="#b8a482" opacity="0.42"/>
<rect x="268.5" y="171.0" width="14.3" height="1" fill="#c2af8e" opacity="0.42"/>
<rect x="287.1" y="171.0" width="20.4" height="1" fill="#b09b77" opacity="0.42"/>
<rect x="315.5" y="171.0" width="9.6" height="1" fill="#ece2cf" opacity="0.42"/>
<rect x="328.7" y="171.0" width="4.0" height="1" fill="#f1e9da" opacity="0.42"/>
<rect x="336.1" y="171.0" width="7.8" height="1" fill="#b8a482" opacity="0.42"/>
<rect x="347.5" y="171.0" width="7.4" height="1" fill="#b09b77" opacity="0.42"/>
<rect x="357.2" y="171.0" width="27.4" height="1" fill="#b09b77" opacity="0.42"/>
<rect x="391.8" y="171.0" width="25.9" height="1" fill="#f1e9da" opacity="0.42"/>
<rect x="423.5" y="171.0" width="17.0" height="1" fill="#ece2cf" opacity="0.42"/>
<rect x="280.4" y="172.6" width="26.4" height="1" fill="#c2af8e" opacity="0.42"/>
<rect x="310.6" y="172.6" width="5.4" height="1" fill="#ece2cf" opacity="0.42"/>
<rect x="321.2" y="172.6" width="9.0" height="1" fill="#f1e9da" opacity="0.42"/>
<rect x="336.4" y="172.6" width="4.2" height="1" fill="#ece2cf" opacity="0.42"/>
<rect x="345.8" y="172.6" width="6.1" height="1" fill="#f1e9da" opacity="0.42"/>
<rect x="359.8" y="172.6" width="9.6" height="1" fill="#b09b77" opacity="0.42"/>
<rect x="375.1" y="172.6" width="10.2" height="1" fill="#b09b77" opacity="0.42"/>
<rect x="389.2" y="172.6" width="16.1" height="1" fill="#c2af8e" opacity="0.42"/>
<rect x="408.1" y="172.6" width="8.6" height="1" fill="#c2af8e" opacity="0.42"/>
<rect x="424.9" y="172.6" width="11.0" height="1" fill="#b09b77" opacity="0.42"/>
<rect x="277.5" y="174.6" width="24.6" height="1" fill="#c2af8e" opacity="0.42"/>
<rect x="303.5" y="174.6" width="27.9" height="1" fill="#f1e9da" opacity="0.42"/>
<rect x="340.2" y="174.6" width="12.9" height="1" fill="#ece2cf" opacity="0.42"/>
<rect x="361.2" y="174.6" width="7.7" height="1" fill="#b09b77" opacity="0.42"/>
<rect x="370.3" y="174.6" width="10.7" height="1" fill="#b09b77" opacity="0.42"/>
<rect x="382.2" y="174.6" width="4.8" height="1" fill="#b09b77" opacity="0.42"/>
<rect x="392.4" y="174.6" width="17.6" height="1" fill="#f1e9da" opacity="0.42"/>
<rect x="419.3" y="174.6" width="10.7" height="1" fill="#b8a482" opacity="0.42"/>
<rect x="269.7" y="176.2" width="27.1" height="1" fill="#f1e9da" opacity="0.42"/>
<rect x="305.4" y="176.2" width="12.1" height="1" fill="#c2af8e" opacity="0.42"/>
<rect x="322.0" y="176.2" width="4.7" height="1" fill="#b8a482" opacity="0.42"/>
<rect x="332.7" y="176.2" width="24.9" height="1" fill="#ece2cf" opacity="0.42"/>
<rect x="362.9" y="176.2" width="24.3" height="1" fill="#b8a482" opacity="0.42"/>
<rect x="396.0" y="176.2" width="19.4" height="1" fill="#b8a482" opacity="0.42"/>
<rect x="422.7" y="176.2" width="6.2" height="1" fill="#f1e9da" opacity="0.42"/>
<rect x="273.8" y="178.2" width="26.1" height="1" fill="#b09b77" opacity="0.42"/>
<rect x="304.5" y="178.2" width="14.8" height="1" fill="#c2af8e" opacity="0.42"/>
<rect x="323.6" y="178.2" width="9.6" height="1" fill="#f4ede0" opacity="0.42"/>
<rect x="336.2" y="178.2" width="4.9" height="1" fill="#f1e9da" opacity="0.42"/>
<rect x="350.6" y="178.2" width="5.4" height="1" fill="#b09b77" opacity="0.42"/>
<rect x="365.2" y="178.2" width="24.1" height="1" fill="#b8a482" opacity="0.42"/>
<rect x="392.6" y="178.2" width="16.3" height="1" fill="#f4ede0" opacity="0.42"/>
<rect x="415.7" y="178.2" width="27.7" height="1" fill="#b8a482" opacity="0.42"/>
<rect x="281.6" y="179.5" width="26.5" height="1" fill="#f4ede0" opacity="0.42"/>
<rect x="315.9" y="179.5" width="18.2" height="1" fill="#ece2cf" opacity="0.42"/>
<rect x="341.9" y="179.5" width="6.5" height="1" fill="#f1e9da" opacity="0.42"/>
<rect x="352.7" y="179.5" width="13.4" height="1" fill="#f1e9da" opacity="0.42"/>
<rect x="371.4" y="179.5" width="8.0" height="1" fill="#c2af8e" opacity="0.42"/>
<rect x="387.7" y="179.5" width="25.9" height="1" fill="#b8a482" opacity="0.42"/>
<rect x="418.9" y="179.5" width="25.9" height="1" fill="#b8a482" opacity="0.42"/>
<rect x="261.1" y="180.8" width="26.4" height="1" fill="#f1e9da" opacity="0.42"/>
<rect x="296.5" y="180.8" width="7.4" height="1" fill="#ece2cf" opacity="0.42"/>
<rect x="313.5" y="180.8" width="26.2" height="1" fill="#ece2cf" opacity="0.42"/>
<rect x="348.3" y="180.8" width="19.1" height="1" fill="#ece2cf" opacity="0.42"/>
<rect x="377.2" y="180.8" width="11.7" height="1" fill="#c2af8e" opacity="0.42"/>
<rect x="394.2" y="180.8" width="19.1" height="1" fill="#c2af8e" opacity="0.42"/>
<rect x="417.3" y="180.8" width="21.7" height="1" fill="#c2af8e" opacity="0.42"/>
<rect x="276.7" y="182.8" width="14.5" height="1" fill="#c2af8e" opacity="0.42"/>
<rect x="294.6" y="182.8" width="13.9" height="1" fill="#c2af8e" opacity="0.42"/>
<rect x="309.7" y="182.8" width="17.7" height="1" fill="#f1e9da" opacity="0.42"/>
<rect x="331.4" y="182.8" width="8.0" height="1" fill="#ece2cf" opacity="0.42"/>
<rect x="341.4" y="182.8" width="14.9" height="1" fill="#ece2cf" opacity="0.42"/>
<rect x="358.4" y="182.8" width="27.5" height="1" fill="#b8a482" opacity="0.42"/>
<rect x="392.6" y="182.8" width="22.9" height="1" fill="#c2af8e" opacity="0.42"/>
<rect x="421.5" y="182.8" width="24.0" height="1" fill="#b8a482" opacity="0.42"/>
<rect x="271.3" y="184.4" width="14.4" height="1" fill="#f1e9da" opacity="0.42"/>
<rect x="295.7" y="184.4" width="26.2" height="1" fill="#b8a482" opacity="0.42"/>
<rect x="326.4" y="184.4" width="14.0" height="1" fill="#c2af8e" opacity="0.42"/>
<rect x="341.9" y="184.4" width="21.4" height="1" fill="#f1e9da" opacity="0.42"/>
<rect x="365.6" y="184.4" width="19.4" height="1" fill="#ece2cf" opacity="0.42"/>
<rect x="393.3" y="184.4" width="12.2" height="1" fill="#c2af8e" opacity="0.42"/>
<rect x="410.4" y="184.4" width="22.9" height="1" fill="#b09b77" opacity="0.42"/>
<rect x="277.9" y="186.0" width="25.9" height="1" fill="#c2af8e" opacity="0.42"/>
<rect x="307.3" y="186.0" width="8.3" height="1" fill="#c2af8e" opacity="0.42"/>
<rect x="321.3" y="186.0" width="9.5" height="1" fill="#c2af8e" opacity="0.42"/>
<rect x="333.6" y="186.0" width="5.9" height="1" fill="#b8a482" opacity="0.42"/>
<rect x="348.5" y="186.0" width="21.5" height="1" fill="#f1e9da" opacity="0.42"/>
<rect x="372.6" y="186.0" width="7.3" height="1" fill="#f4ede0" opacity="0.42"/>
<rect x="387.3" y="186.0" width="23.5" height="1" fill="#b09b77" opacity="0.42"/>
<rect x="414.5" y="186.0" width="4.2" height="1" fill="#f4ede0" opacity="0.42"/>
<rect x="426.4" y="186.0" width="13.8" height="1" fill="#f4ede0" opacity="0.42"/>
<rect x="270.5" y="187.3" width="10.8" height="1" fill="#f4ede0" opacity="0.42"/>
<rect x="290.0" y="187.3" width="15.8" height="1" fill="#b8a482" opacity="0.42"/>
<rect x="310.5" y="187.3" width="22.3" height="1" fill="#c2af8e" opacity="0.42"/>
<rect x="341.7" y="187.3" width="10.4" height="1" fill="#c2af8e" opacity="0.42"/>
<rect x="358.1" y="187.3" width="27.7" height="1" fill="#b8a482" opacity="0.42"/>
<rect x="388.3" y="187.3" width="12.9" height="1" fill="#b09b77" opacity="0.42"/>
<rect x="409.9" y="187.3" width="12.5" height="1" fill="#ece2cf" opacity="0.42"/>
<rect x="279.5" y="189.3" width="9.9" height="1" fill="#f1e9da" opacity="0.42"/>
<rect x="297.4" y="189.3" width="24.8" height="1" fill="#b09b77" opacity="0.42"/>
<rect x="330.0" y="189.3" width="5.5" height="1" fill="#b8a482" opacity="0.42"/>
<rect x="345.0" y="189.3" width="15.9" height="1" fill="#b09b77" opacity="0.42"/>
<rect x="362.1" y="189.3" width="23.3" height="1" fill="#c2af8e" opacity="0.42"/>
<rect x="386.6" y="189.3" width="27.2" height="1" fill="#c2af8e" opacity="0.42"/>
<rect x="420.4" y="189.3" width="8.0" height="1" fill="#f1e9da" opacity="0.42"/>
<rect x="275.2" y="190.9" width="4.5" height="1" fill="#f4ede0" opacity="0.42"/>
<rect x="287.3" y="190.9" width="10.3" height="1" fill="#b09b77" opacity="0.42"/>
<rect x="304.3" y="190.9" width="15.1" height="1" fill="#c2af8e" opacity="0.42"/>
<rect x="326.8" y="190.9" width="6.5" height="1" fill="#b8a482" opacity="0.42"/>
<rect x="340.7" y="190.9" width="5.1" height="1" fill="#b8a482" opacity="0.42"/>
<rect x="351.0" y="190.9" width="18.1" height="1" fill="#f1e9da" opacity="0.42"/>
<rect x="371.0" y="190.9" width="6.9" height="1" fill="#c2af8e" opacity="0.42"/>
<rect x="383.8" y="190.9" width="9.5" height="1" fill="#c2af8e" opacity="0.42"/>
<rect x="395.6" y="190.9" width="17.7" height="1" fill="#f4ede0" opacity="0.42"/>
<rect x="417.9" y="190.9" width="26.8" height="1" fill="#b8a482" opacity="0.42"/>
<rect x="273.7" y="192.9" width="24.2" height="1" fill="#b09b77" opacity="0.42"/>
<rect x="299.2" y="192.9" width="27.3" height="1" fill="#b8a482" opacity="0.42"/>
<rect x="334.5" y="192.9" width="12.1" height="1" fill="#c2af8e" opacity="0.42"/>
<rect x="355.1" y="192.9" width="21.2" height="1" fill="#b09b77" opacity="0.42"/>
<rect x="384.6" y="192.9" width="25.9" height="1" fill="#ece2cf" opacity="0.42"/>
<rect x="419.1" y="192.9" width="5.3" height="1" fill="#b09b77" opacity="0.42"/>
<rect x="267.0" y="194.2" width="10.0" height="1" fill="#ece2cf" opacity="0.42"/>
<rect x="283.9" y="194.2" width="4.3" height="1" fill="#b8a482" opacity="0.42"/>
<rect x="294.0" y="194.2" width="5.7" height="1" fill="#ece2cf" opacity="0.42"/>
<rect x="302.4" y="194.2" width="20.1" height="1" fill="#c2af8e" opacity="0.42"/>
<rect x="324.7" y="194.2" width="27.3" height="1" fill="#ece2cf" opacity="0.42"/>
<rect x="358.7" y="194.2" width="23.4" height="1" fill="#b8a482" opacity="0.42"/>
<rect x="383.4" y="194.2" width="19.4" height="1" fill="#f1e9da" opacity="0.42"/>
<rect x="412.1" y="194.2" width="19.0" height="1" fill="#f4ede0" opacity="0.42"/>
<rect x="261.9" y="196.2" width="6.4" height="1" fill="#b8a482" opacity="0.42"/>
<rect x="274.0" y="196.2" width="14.4" height="1" fill="#b8a482" opacity="0.42"/>
<rect x="292.0" y="196.2" width="11.3" height="1" fill="#f4ede0" opacity="0.42"/>
<rect x="305.8" y="196.2" width="5.4" height="1" fill="#b09b77" opacity="0.42"/>
<rect x="320.4" y="196.2" width="6.0" height="1" fill="#b09b77" opacity="0.42"/>
<rect x="332.2" y="196.2" width="7.6" height="1" fill="#b8a482" opacity="0.42"/>
<rect x="345.4" y="196.2" width="25.2" height="1" fill="#ece2cf" opacity="0.42"/>
<rect x="376.8" y="196.2" width="10.6" height="1" fill="#f4ede0" opacity="0.42"/>
<rect x="389.2" y="196.2" width="17.1" height="1" fill="#ece2cf" opacity="0.42"/>
<rect x="412.8" y="196.2" width="17.7" height="1" fill="#f4ede0" opacity="0.42"/>
<rect x="280.1" y="197.8" width="15.1" height="1" fill="#b09b77" opacity="0.42"/>
<rect x="298.9" y="197.8" width="15.5" height="1" fill="#f1e9da" opacity="0.42"/>
<rect x="315.6" y="197.8" width="12.0" height="1" fill="#c2af8e" opacity="0.42"/>
<rect x="333.2" y="197.8" width="13.2" height="1" fill="#b09b77" opacity="0.42"/>
<rect x="351.0" y="197.8" width="26.2" height="1" fill="#c2af8e" opacity="0.42"/>
<rect x="385.9" y="197.8" width="9.7" height="1" fill="#b09b77" opacity="0.42"/>
<rect x="399.6" y="197.8" width="10.5" height="1" fill="#c2af8e" opacity="0.42"/>
<rect x="413.7" y="197.8" width="22.5" height="1" fill="#c2af8e" opacity="0.42"/>
<rect x="284.2" y="199.8" width="14.6" height="1" fill="#b8a482" opacity="0.42"/>
<rect x="304.4" y="199.8" width="24.0" height="1" fill="#f1e9da" opacity="0.42"/>
<rect x="336.1" y="199.8" width="6.6" height="1" fill="#c2af8e" opacity="0.42"/>
<rect x="352.6" y="199.8" width="20.3" height="1" fill="#c2af8e" opacity="0.42"/>
<rect x="377.6" y="199.8" width="20.0" height="1" fill="#c2af8e" opacity="0.42"/>
<rect x="404.7" y="199.8" width="18.8" height="1" fill="#f1e9da" opacity="0.42"/>
<rect x="283.5" y="201.8" width="26.1" height="1" fill="#ece2cf" opacity="0.42"/>
<rect x="313.1" y="201.8" width="19.1" height="1" fill="#f4ede0" opacity="0.42"/>
<rect x="341.4" y="201.8" width="7.1" height="1" fill="#b8a482" opacity="0.42"/>
<rect x="349.5" y="201.8" width="22.4" height="1" fill="#b09b77" opacity="0.42"/>
<rect x="373.9" y="201.8" width="13.5" height="1" fill="#b09b77" opacity="0.42"/>
<rect x="389.8" y="201.8" width="24.4" height="1" fill="#f1e9da" opacity="0.42"/>
<rect x="423.1" y="201.8" width="18.6" height="1" fill="#ece2cf" opacity="0.42"/>
<rect x="266.4" y="203.4" width="12.5" height="1" fill="#f1e9da" opacity="0.42"/>
<rect x="283.4" y="203.4" width="17.3" height="1" fill="#ece2cf" opacity="0.42"/>
<rect x="307.6" y="203.4" width="4.2" height="1" fill="#f4ede0" opacity="0.42"/>
<rect x="320.4" y="203.4" width="16.0" height="1" fill="#ece2cf" opacity="0.42"/>
<rect x="340.1" y="203.4" width="16.9" height="1" fill="#c2af8e" opacity="0.42"/>
<rect x="361.9" y="203.4" width="13.0" height="1" fill="#c2af8e" opacity="0.42"/>
<rect x="376.7" y="203.4" width="26.1" height="1" fill="#f1e9da" opacity="0.42"/>
<rect x="412.5" y="203.4" width="18.6" height="1" fill="#c2af8e" opacity="0.42"/>
<rect x="277.5" y="205.0" width="25.9" height="1" fill="#b8a482" opacity="0.42"/>
<rect x="304.5" y="205.0" width="10.2" height="1" fill="#ece2cf" opacity="0.42"/>
<rect x="318.4" y="205.0" width="16.9" height="1" fill="#f1e9da" opacity="0.42"/>
<rect x="341.1" y="205.0" width="28.0" height="1" fill="#b09b77" opacity="0.42"/>
<rect x="377.5" y="205.0" width="21.5" height="1" fill="#ece2cf" opacity="0.42"/>
<rect x="403.5" y="205.0" width="12.6" height="1" fill="#b09b77" opacity="0.42"/>
<rect x="423.1" y="205.0" width="14.9" height="1" fill="#b8a482" opacity="0.42"/>
<rect x="278.4" y="207.0" width="13.8" height="1" fill="#b09b77" opacity="0.42"/>
<rect x="296.8" y="207.0" width="17.5" height="1" fill="#b09b77" opacity="0.42"/>
<rect x="316.7" y="207.0" width="8.5" height="1" fill="#ece2cf" opacity="0.42"/>
<rect x="330.6" y="207.0" width="14.6" height="1" fill="#b09b77" opacity="0.42"/>
<rect x="354.2" y="207.0" width="18.1" height="1" fill="#f4ede0" opacity="0.42"/>
<rect x="378.1" y="207.0" width="23.6" height="1" fill="#c2af8e" opacity="0.42"/>
<rect x="406.0" y="207.0" width="12.8" height="1" fill="#b8a482" opacity="0.42"/>
<rect x="427.2" y="207.0" width="16.3" height="1" fill="#b8a482" opacity="0.42"/>
<rect x="266.0" y="209.0" width="23.7" height="1" fill="#b09b77" opacity="0.42"/>
<rect x="298.7" y="209.0" width="14.1" height="1" fill="#c2af8e" opacity="0.42"/>
<rect x="318.5" y="209.0" width="23.6" height="1" fill="#c2af8e" opacity="0.42"/>
<rect x="347.7" y="209.0" width="8.5" height="1" fill="#c2af8e" opacity="0.42"/>
<rect x="357.7" y="209.0" width="17.6" height="1" fill="#b8a482" opacity="0.42"/>
<rect x="379.4" y="209.0" width="27.8" height="1" fill="#f4ede0" opacity="0.42"/>
<rect x="414.8" y="209.0" width="20.6" height="1" fill="#b8a482" opacity="0.42"/>
<rect x="277.8" y="210.3" width="4.1" height="1" fill="#f1e9da" opacity="0.42"/>
<rect x="286.5" y="210.3" width="6.4" height="1" fill="#b8a482" opacity="0.42"/>
<rect x="299.8" y="210.3" width="8.7" height="1" fill="#ece2cf" opacity="0.42"/>
<rect x="316.5" y="210.3" width="17.6" height="1" fill="#f4ede0" opacity="0.42"/>
<rect x="343.1" y="210.3" width="16.3" height="1" fill="#c2af8e" opacity="0.42"/>
<rect x="365.7" y="210.3" width="13.9" height="1" fill="#b8a482" opacity="0.42"/>
<rect x="381.8" y="210.3" width="16.4" height="1" fill="#b09b77" opacity="0.42"/>
<rect x="400.2" y="210.3" width="6.4" height="1" fill="#c2af8e" opacity="0.42"/>
<rect x="416.2" y="210.3" width="15.8" height="1" fill="#ece2cf" opacity="0.42"/>
<rect x="276.3" y="212.3" width="19.6" height="1" fill="#f4ede0" opacity="0.42"/>
<rect x="303.8" y="212.3" width="11.7" height="1" fill="#f4ede0" opacity="0.42"/>
<rect x="318.7" y="212.3" width="10.6" height="1" fill="#b8a482" opacity="0.42"/>
<rect x="332.7" y="212.3" width="6.4" height="1" fill="#b09b77" opacity="0.42"/>
<rect x="340.7" y="212.3" width="8.6" height="1" fill="#b09b77" opacity="0.42"/>
<rect x="353.8" y="212.3" width="5.3" height="1" fill="#ece2cf" opacity="0.42"/>
<rect x="365.3" y="212.3" width="27.0" height="1" fill="#ece2cf" opacity="0.42"/>
<rect x="393.8" y="212.3" width="9.7" height="1" fill="#c2af8e" opacity="0.42"/>
<rect x="404.9" y="212.3" width="26.3" height="1" fill="#c2af8e" opacity="0.42"/>
<rect x="285.4" y="213.9" width="14.9" height="1" fill="#ece2cf" opacity="0.42"/>
<rect x="306.7" y="213.9" width="27.0" height="1" fill="#ece2cf" opacity="0.42"/>
<rect x="343.6" y="213.9" width="5.6" height="1" fill="#f4ede0" opacity="0.42"/>
<rect x="353.7" y="213.9" width="21.2" height="1" fill="#c2af8e" opacity="0.42"/>
<rect x="379.7" y="213.9" width="13.6" height="1" fill="#f4ede0" opacity="0.42"/>
<rect x="398.6" y="213.9" width="23.0" height="1" fill="#c2af8e" opacity="0.42"/>
<rect x="423.4" y="213.9" width="8.1" height="1" fill="#ece2cf" opacity="0.42"/>
<rect x="285.5" y="215.2" width="13.5" height="1" fill="#f1e9da" opacity="0.42"/>
<rect x="301.0" y="215.2" width="16.8" height="1" fill="#ece2cf" opacity="0.42"/>
<rect x="321.9" y="215.2" width="19.6" height="1" fill="#b8a482" opacity="0.42"/>
<rect x="346.3" y="215.2" width="25.9" height="1" fill="#b09b77" opacity="0.42"/>
<rect x="375.4" y="215.2" width="8.6" height="1" fill="#f1e9da" opacity="0.42"/>
<rect x="388.1" y="215.2" width="14.5" height="1" fill="#f1e9da" opacity="0.42"/>
<rect x="409.5" y="215.2" width="12.2" height="1" fill="#c2af8e" opacity="0.42"/>
<rect x="424.9" y="215.2" width="7.1" height="1" fill="#c2af8e" opacity="0.42"/>
<rect x="273.9" y="216.8" width="17.3" height="1" fill="#ece2cf" opacity="0.42"/>
<rect x="299.7" y="216.8" width="23.3" height="1" fill="#c2af8e" opacity="0.42"/>
<rect x="327.4" y="216.8" width="9.2" height="1" fill="#ece2cf" opacity="0.42"/>
<rect x="341.0" y="216.8" width="27.0" height="1" fill="#c2af8e" opacity="0.42"/>
<rect x="371.6" y="216.8" width="15.4" height="1" fill="#c2af8e" opacity="0.42"/>
<rect x="390.1" y="216.8" width="14.9" height="1" fill="#c2af8e" opacity="0.42"/>
<rect x="414.4" y="216.8" width="28.0" height="1" fill="#b09b77" opacity="0.42"/>
<rect x="269.3" y="218.4" width="9.9" height="1" fill="#b09b77" opacity="0.42"/>
<rect x="284.8" y="218.4" width="7.0" height="1" fill="#b8a482" opacity="0.42"/>
<rect x="298.9" y="218.4" width="6.2" height="1" fill="#f1e9da" opacity="0.42"/>
<rect x="312.7" y="218.4" width="22.4" height="1" fill="#b8a482" opacity="0.42"/>
<rect x="342.0" y="218.4" width="17.6" height="1" fill="#f1e9da" opacity="0.42"/>
<rect x="360.7" y="218.4" width="21.1" height="1" fill="#f4ede0" opacity="0.42"/>
<rect x="384.4" y="218.4" width="24.4" height="1" fill="#f1e9da" opacity="0.42"/>
<rect x="411.5" y="218.4" width="25.4" height="1" fill="#b8a482" opacity="0.42"/>
<rect x="266.7" y="220.4" width="22.2" height="1" fill="#c2af8e" opacity="0.42"/>
<rect x="290.5" y="220.4" width="11.5" height="1" fill="#c2af8e" opacity="0.42"/>
<rect x="305.5" y="220.4" width="23.6" height="1" fill="#ece2cf" opacity="0.42"/>
<rect x="332.7" y="220.4" width="13.7" height="1" fill="#ece2cf" opacity="0.42"/>
<rect x="354.3" y="220.4" width="25.2" height="1" fill="#c2af8e" opacity="0.42"/>
<rect x="389.0" y="220.4" width="8.2" height="1" fill="#f1e9da" opacity="0.42"/>
<rect x="404.3" y="220.4" width="19.9" height="1" fill="#f1e9da" opacity="0.42"/>
<rect x="283.5" y="222.0" width="15.1" height="1" fill="#ece2cf" opacity="0.42"/>
<rect x="302.8" y="222.0" width="19.1" height="1" fill="#c2af8e" opacity="0.42"/>
<rect x="325.5" y="222.0" width="10.5" height="1" fill="#b09b77" opacity="0.42"/>
<rect x="343.6" y="222.0" width="21.1" height="1" fill="#b8a482" opacity="0.42"/>
<rect x="369.4" y="222.0" width="18.6" height="1" fill="#ece2cf" opacity="0.42"/>
<rect x="390.8" y="222.0" width="11.3" height="1" fill="#ece2cf" opacity="0.42"/>
<rect x="409.7" y="222.0" width="17.3" height="1" fill="#f4ede0" opacity="0.42"/>
<rect x="263.9" y="224.0" width="9.5" height="1" fill="#ece2cf" opacity="0.42"/>
<rect x="280.9" y="224.0" width="10.1" height="1" fill="#ece2cf" opacity="0.42"/>
<rect x="298.0" y="224.0" width="17.8" height="1" fill="#b8a482" opacity="0.42"/>
<rect x="317.8" y="224.0" width="22.3" height="1" fill="#f4ede0" opacity="0.42"/>
<rect x="343.7" y="224.0" width="5.0" height="1" fill="#b09b77" opacity="0.42"/>
<rect x="355.2" y="224.0" width="5.1" height="1" fill="#c2af8e" opacity="0.42"/>
<rect x="367.5" y="224.0" width="4.9" height="1" fill="#f1e9da" opacity="0.42"/>
<rect x="375.3" y="224.0" width="25.9" height="1" fill="#f4ede0" opacity="0.42"/>
<rect x="410.4" y="224.0" width="14.0" height="1" fill="#f4ede0" opacity="0.42"/>
<rect x="263.3" y="225.6" width="9.3" height="1" fill="#b09b77" opacity="0.42"/>
<rect x="274.4" y="225.6" width="26.7" height="1" fill="#ece2cf" opacity="0.42"/>
<rect x="306.1" y="225.6" width="12.2" height="1" fill="#b09b77" opacity="0.42"/>
<rect x="325.9" y="225.6" width="23.9" height="1" fill="#f4ede0" opacity="0.42"/>
<rect x="356.4" y="225.6" width="16.2" height="1" fill="#f4ede0" opacity="0.42"/>
<rect x="379.9" y="225.6" width="14.3" height="1" fill="#b09b77" opacity="0.42"/>
<rect x="402.8" y="225.6" width="22.7" height="1" fill="#ece2cf" opacity="0.42"/>
<rect x="283.2" y="226.9" width="23.3" height="1" fill="#f1e9da" opacity="0.42"/>
<rect x="309.1" y="226.9" width="7.9" height="1" fill="#f4ede0" opacity="0.42"/>
<rect x="320.1" y="226.9" width="10.2" height="1" fill="#b8a482" opacity="0.42"/>
<rect x="332.9" y="226.9" width="12.3" height="1" fill="#b8a482" opacity="0.42"/>
<rect x="348.0" y="226.9" width="11.5" height="1" fill="#c2af8e" opacity="0.42"/>
<rect x="366.6" y="226.9" width="15.7" height="1" fill="#ece2cf" opacity="0.42"/>
<rect x="385.5" y="226.9" width="9.8" height="1" fill="#b09b77" opacity="0.42"/>
<rect x="402.5" y="226.9" width="7.2" height="1" fill="#f4ede0" opacity="0.42"/>
<rect x="413.8" y="226.9" width="11.2" height="1" fill="#f4ede0" opacity="0.42"/>
<rect x="268.1" y="228.2" width="19.1" height="1" fill="#b8a482" opacity="0.42"/>
<rect x="293.2" y="228.2" width="22.3" height="1" fill="#c2af8e" opacity="0.42"/>
<rect x="322.5" y="228.2" width="7.7" height="1" fill="#ece2cf" opacity="0.42"/>
<rect x="338.8" y="228.2" width="13.7" height="1" fill="#c2af8e" opacity="0.42"/>
<rect x="354.5" y="228.2" width="10.9" height="1" fill="#f1e9da" opacity="0.42"/>
<rect x="370.9" y="228.2" width="5.0" height="1" fill="#f1e9da" opacity="0.42"/>
<rect x="379.6" y="228.2" width="6.7" height="1" fill="#f1e9da" opacity="0.42"/>
<rect x="391.3" y="228.2" width="6.7" height="1" fill="#f1e9da" opacity="0.42"/>
<rect x="403.1" y="228.2" width="17.7" height="1" fill="#f1e9da" opacity="0.42"/>
<rect x="423.2" y="228.2" width="5.7" height="1" fill="#b8a482" opacity="0.42"/>
<rect x="264.6" y="229.8" width="6.0" height="1" fill="#f4ede0" opacity="0.42"/>
<rect x="274.6" y="229.8" width="21.7" height="1" fill="#f1e9da" opacity="0.42"/>
<rect x="298.3" y="229.8" width="15.7" height="1" fill="#ece2cf" opacity="0.42"/>
<rect x="319.5" y="229.8" width="22.8" height="1" fill="#f1e9da" opacity="0.42"/>
<rect x="343.3" y="229.8" width="26.1" height="1" fill="#f4ede0" opacity="0.42"/>
<rect x="373.0" y="229.8" width="18.7" height="1" fill="#f4ede0" opacity="0.42"/>
<rect x="398.6" y="229.8" width="10.0" height="1" fill="#c2af8e" opacity="0.42"/>
<rect x="410.3" y="229.8" width="21.9" height="1" fill="#b8a482" opacity="0.42"/>
<rect x="263.6" y="231.4" width="8.5" height="1" fill="#f4ede0" opacity="0.42"/>
<rect x="277.8" y="231.4" width="25.5" height="1" fill="#f4ede0" opacity="0.42"/>
<rect x="305.8" y="231.4" width="22.8" height="1" fill="#f1e9da" opacity="0.42"/>
<rect x="336.3" y="231.4" width="11.8" height="1" fill="#c2af8e" opacity="0.42"/>
<rect x="355.0" y="231.4" width="12.5" height="1" fill="#c2af8e" opacity="0.42"/>
<rect x="371.8" y="231.4" width="17.2" height="1" fill="#f1e9da" opacity="0.42"/>
<rect x="397.6" y="231.4" width="10.1" height="1" fill="#b8a482" opacity="0.42"/>
<rect x="409.0" y="231.4" width="17.6" height="1" fill="#f4ede0" opacity="0.42"/>
<rect x="270.1" y="233.4" width="9.2" height="1" fill="#ece2cf" opacity="0.42"/>
<rect x="284.8" y="233.4" width="7.8" height="1" fill="#f1e9da" opacity="0.42"/>
<rect x="299.0" y="233.4" width="19.0" height="1" fill="#c2af8e" opacity="0.42"/>
<rect x="325.2" y="233.4" width="7.9" height="1" fill="#ece2cf" opacity="0.42"/>
<rect x="339.9" y="233.4" width="13.6" height="1" fill="#b8a482" opacity="0.42"/>
<rect x="362.2" y="233.4" width="15.5" height="1" fill="#c2af8e" opacity="0.42"/>
<rect x="385.2" y="233.4" width="4.1" height="1" fill="#b09b77" opacity="0.42"/>
<rect x="397.9" y="233.4" width="22.9" height="1" fill="#ece2cf" opacity="0.42"/>
<rect x="423.1" y="233.4" width="5.7" height="1" fill="#b8a482" opacity="0.42"/>
<rect x="271.5" y="235.4" width="5.5" height="1" fill="#b8a482" opacity="0.42"/>
<rect x="284.0" y="235.4" width="23.8" height="1" fill="#f4ede0" opacity="0.42"/>
<rect x="310.3" y="235.4" width="11.1" height="1" fill="#ece2cf" opacity="0.42"/>
<rect x="329.6" y="235.4" width="20.2" height="1" fill="#b09b77" opacity="0.42"/>
<rect x="352.6" y="235.4" width="6.0" height="1" fill="#f1e9da" opacity="0.42"/>
<rect x="364.3" y="235.4" width="14.3" height="1" fill="#b09b77" opacity="0.42"/>
<rect x="387.8" y="235.4" width="24.8" height="1" fill="#ece2cf" opacity="0.42"/>
<rect x="422.2" y="235.4" width="18.9" height="1" fill="#b8a482" opacity="0.42"/>
<rect x="269.7" y="237.4" width="11.1" height="1" fill="#b09b77" opacity="0.42"/>
<rect x="285.6" y="237.4" width="12.8" height="1" fill="#f4ede0" opacity="0.42"/>
<rect x="305.2" y="237.4" width="11.2" height="1" fill="#f1e9da" opacity="0.42"/>
<rect x="322.2" y="237.4" width="19.2" height="1" fill="#c2af8e" opacity="0.42"/>
<rect x="344.4" y="237.4" width="21.8" height="1" fill="#f4ede0" opacity="0.42"/>
<rect x="367.9" y="237.4" width="19.9" height="1" fill="#f1e9da" opacity="0.42"/>
<rect x="393.8" y="237.4" width="26.6" height="1" fill="#f1e9da" opacity="0.42"/>
<rect x="426.2" y="237.4" width="17.6" height="1" fill="#ece2cf" opacity="0.42"/>
<rect x="277.0" y="239.0" width="25.4" height="1" fill="#b09b77" opacity="0.42"/>
<rect x="310.1" y="239.0" width="9.3" height="1" fill="#f1e9da" opacity="0.42"/>
<rect x="326.3" y="239.0" width="8.5" height="1" fill="#f4ede0" opacity="0.42"/>
<rect x="338.1" y="239.0" width="15.7" height="1" fill="#b09b77" opacity="0.42"/>
<rect x="358.9" y="239.0" width="17.0" height="1" fill="#f4ede0" opacity="0.42"/>
<rect x="377.9" y="239.0" width="16.3" height="1" fill="#b09b77" opacity="0.42"/>
<rect x="400.4" y="239.0" width="24.4" height="1" fill="#f4ede0" opacity="0.42"/>
<rect x="262.9" y="240.3" width="16.1" height="1" fill="#b09b77" opacity="0.42"/>
<rect x="286.4" y="240.3" width="22.2" height="1" fill="#b8a482" opacity="0.42"/>
<rect x="315.2" y="240.3" width="27.0" height="1" fill="#b09b77" opacity="0.42"/>
<rect x="344.2" y="240.3" width="23.9" height="1" fill="#ece2cf" opacity="0.42"/>
<rect x="374.0" y="240.3" width="27.2" height="1" fill="#c2af8e" opacity="0.42"/>
<rect x="407.3" y="240.3" width="22.6" height="1" fill="#c2af8e" opacity="0.42"/>
<rect x="262.7" y="241.9" width="9.7" height="1" fill="#f1e9da" opacity="0.42"/>
<rect x="273.8" y="241.9" width="20.8" height="1" fill="#c2af8e" opacity="0.42"/>
<rect x="299.7" y="241.9" width="6.9" height="1" fill="#c2af8e" opacity="0.42"/>
<rect x="311.5" y="241.9" width="25.3" height="1" fill="#b09b77" opacity="0.42"/>
<rect x="346.7" y="241.9" width="8.8" height="1" fill="#b8a482" opacity="0.42"/>
<rect x="364.8" y="241.9" width="24.9" height="1" fill="#c2af8e" opacity="0.42"/>
<rect x="394.0" y="241.9" width="24.2" height="1" fill="#f4ede0" opacity="0.42"/>
<rect x="425.3" y="241.9" width="23.8" height="1" fill="#b8a482" opacity="0.42"/>
<rect x="276.9" y="243.2" width="26.8" height="1" fill="#f4ede0" opacity="0.42"/>
<rect x="309.0" y="243.2" width="23.6" height="1" fill="#f1e9da" opacity="0.42"/>
<rect x="334.5" y="243.2" width="17.2" height="1" fill="#b09b77" opacity="0.42"/>
<rect x="353.7" y="243.2" width="26.2" height="1" fill="#f4ede0" opacity="0.42"/>
<rect x="383.1" y="243.2" width="12.5" height="1" fill="#f4ede0" opacity="0.42"/>
<rect x="400.6" y="243.2" width="24.1" height="1" fill="#b09b77" opacity="0.42"/>
<rect x="275.6" y="244.8" width="6.7" height="1" fill="#f1e9da" opacity="0.42"/>
<rect x="284.9" y="244.8" width="17.3" height="1" fill="#f1e9da" opacity="0.42"/>
<rect x="311.1" y="244.8" width="20.1" height="1" fill="#c2af8e" opacity="0.42"/>
<rect x="337.5" y="244.8" width="10.0" height="1" fill="#f4ede0" opacity="0.42"/>
<rect x="355.3" y="244.8" width="10.4" height="1" fill="#ece2cf" opacity="0.42"/>
<rect x="366.9" y="244.8" width="12.2" height="1" fill="#c2af8e" opacity="0.42"/>
<rect x="384.5" y="244.8" width="15.6" height="1" fill="#b8a482" opacity="0.42"/>
<rect x="408.3" y="244.8" width="4.9" height="1" fill="#c2af8e" opacity="0.42"/>
<rect x="419.8" y="244.8" width="19.5" height="1" fill="#b09b77" opacity="0.42"/>
<rect x="269.5" y="246.4" width="20.6" height="1" fill="#ece2cf" opacity="0.42"/>
<rect x="294.7" y="246.4" width="25.0" height="1" fill="#b09b77" opacity="0.42"/>
<rect x="325.3" y="246.4" width="12.7" height="1" fill="#b09b77" opacity="0.42"/>
<rect x="340.9" y="246.4" width="25.5" height="1" fill="#b09b77" opacity="0.42"/>
<rect x="373.0" y="246.4" width="9.1" height="1" fill="#f1e9da" opacity="0.42"/>
<rect x="389.6" y="246.4" width="12.0" height="1" fill="#ece2cf" opacity="0.42"/>
<rect x="406.1" y="246.4" width="12.5" height="1" fill="#b8a482" opacity="0.42"/>
<rect x="422.6" y="246.4" width="15.6" height="1" fill="#c2af8e" opacity="0.42"/>
<rect x="280.6" y="247.7" width="18.6" height="1" fill="#f4ede0" opacity="0.42"/>
<rect x="301.5" y="247.7" width="20.1" height="1" fill="#f1e9da" opacity="0.42"/>
<rect x="326.1" y="247.7" width="5.5" height="1" fill="#f1e9da" opacity="0.42"/>
<rect x="335.8" y="247.7" width="17.8" height="1" fill="#b09b77" opacity="0.42"/>
<rect x="363.2" y="247.7" width="27.8" height="1" fill="#b8a482" opacity="0.42"/>
<rect x="400.3" y="247.7" width="25.7" height="1" fill="#b8a482" opacity="0.42"/>
<rect x="267.9" y="249.0" width="19.2" height="1" fill="#f1e9da" opacity="0.42"/>
<rect x="295.3" y="249.0" width="23.0" height="1" fill="#c2af8e" opacity="0.42"/>
<rect x="327.2" y="249.0" width="26.5" height="1" fill="#f4ede0" opacity="0.42"/>
<rect x="355.3" y="249.0" width="27.1" height="1" fill="#f1e9da" opacity="0.42"/>
<rect x="390.1" y="249.0" width="16.2" height="1" fill="#f4ede0" opacity="0.42"/>
<rect x="409.5" y="249.0" width="24.9" height="1" fill="#f4ede0" opacity="0.42"/>
<rect x="277.3" y="250.6" width="20.1" height="1" fill="#ece2cf" opacity="0.42"/>
<rect x="303.0" y="250.6" width="25.5" height="1" fill="#c2af8e" opacity="0.42"/>
<rect x="338.4" y="250.6" width="7.6" height="1" fill="#c2af8e" opacity="0.42"/>
<rect x="347.1" y="250.6" width="24.9" height="1" fill="#ece2cf" opacity="0.42"/>
<rect x="376.7" y="250.6" width="13.5" height="1" fill="#f1e9da" opacity="0.42"/>
<rect x="399.5" y="250.6" width="18.1" height="1" fill="#c2af8e" opacity="0.42"/>
<rect x="421.3" y="250.6" width="11.4" height="1" fill="#f4ede0" opacity="0.42"/>
<rect x="275.1" y="252.6" width="12.2" height="1" fill="#c2af8e" opacity="0.42"/>
<rect x="293.5" y="252.6" width="5.9" height="1" fill="#c2af8e" opacity="0.42"/>
<rect x="303.2" y="252.6" width="12.5" height="1" fill="#ece2cf" opacity="0.42"/>
<rect x="319.9" y="252.6" width="22.6" height="1" fill="#ece2cf" opacity="0.42"/>
<rect x="350.0" y="252.6" width="26.1" height="1" fill="#ece2cf" opacity="0.42"/>
<rect x="380.0" y="252.6" width="8.2" height="1" fill="#f1e9da" opacity="0.42"/>
<rect x="394.1" y="252.6" width="22.2" height="1" fill="#f4ede0" opacity="0.42"/>
<rect x="419.7" y="252.6" width="20.9" height="1" fill="#c2af8e" opacity="0.42"/>
<rect x="271.5" y="253.9" width="18.5" height="1" fill="#b09b77" opacity="0.42"/>
<rect x="296.8" y="253.9" width="8.7" height="1" fill="#f4ede0" opacity="0.42"/>
<rect x="307.0" y="253.9" width="7.1" height="1" fill="#b8a482" opacity="0.42"/>
<rect x="315.9" y="253.9" width="23.4" height="1" fill="#b09b77" opacity="0.42"/>
<rect x="343.4" y="253.9" width="7.3" height="1" fill="#c2af8e" opacity="0.42"/>
<rect x="354.1" y="253.9" width="19.4" height="1" fill="#b8a482" opacity="0.42"/>
<rect x="380.2" y="253.9" width="26.1" height="1" fill="#c2af8e" opacity="0.42"/>
<rect x="410.3" y="253.9" width="24.8" height="1" fill="#b8a482" opacity="0.42"/>
<rect x="273.5" y="255.9" width="23.2" height="1" fill="#c2af8e" opacity="0.42"/>
<rect x="298.2" y="255.9" width="13.9" height="1" fill="#b8a482" opacity="0.42"/>
<rect x="313.9" y="255.9" width="18.7" height="1" fill="#ece2cf" opacity="0.42"/>
<rect x="342.5" y="255.9" width="13.6" height="1" fill="#ece2cf" opacity="0.42"/>
<rect x="365.0" y="255.9" width="4.6" height="1" fill="#f1e9da" opacity="0.42"/>
<rect x="375.7" y="255.9" width="27.7" height="1" fill="#b8a482" opacity="0.42"/>
<rect x="408.1" y="255.9" width="21.0" height="1" fill="#f1e9da" opacity="0.42"/>
<rect x="277.2" y="257.2" width="7.4" height="1" fill="#b8a482" opacity="0.42"/>
<rect x="288.9" y="257.2" width="12.7" height="1" fill="#f1e9da" opacity="0.42"/>
<rect x="307.4" y="257.2" width="18.1" height="1" fill="#b09b77" opacity="0.42"/>
<rect x="327.9" y="257.2" width="27.6" height="1" fill="#b09b77" opacity="0.42"/>
<rect x="359.4" y="257.2" width="21.8" height="1" fill="#f1e9da" opacity="0.42"/>
<rect x="389.6" y="257.2" width="15.5" height="1" fill="#b8a482" opacity="0.42"/>
<rect x="413.0" y="257.2" width="11.4" height="1" fill="#b09b77" opacity="0.42"/>
<rect x="271.1" y="259.2" width="16.6" height="1" fill="#f1e9da" opacity="0.42"/>
<rect x="289.9" y="259.2" width="4.2" height="1" fill="#ece2cf" opacity="0.42"/>
<rect x="296.0" y="259.2" width="23.4" height="1" fill="#f1e9da" opacity="0.42"/>
<rect x="321.8" y="259.2" width="19.1" height="1" fill="#ece2cf" opacity="0.42"/>
<rect x="348.7" y="259.2" width="6.2" height="1" fill="#b8a482" opacity="0.42"/>
<rect x="361.5" y="259.2" width="6.9" height="1" fill="#b09b77" opacity="0.42"/>
<rect x="373.9" y="259.2" width="17.3" height="1" fill="#c2af8e" opacity="0.42"/>
<rect x="394.6" y="259.2" width="18.5" height="1" fill="#f4ede0" opacity="0.42"/>
<rect x="415.5" y="259.2" width="8.3" height="1" fill="#f4ede0" opacity="0.42"/>
<rect x="270.3" y="260.5" width="21.0" height="1" fill="#ece2cf" opacity="0.42"/>
<rect x="301.2" y="260.5" width="16.0" height="1" fill="#f4ede0" opacity="0.42"/>
<rect x="326.3" y="260.5" width="25.6" height="1" fill="#ece2cf" opacity="0.42"/>
<rect x="357.1" y="260.5" width="11.8" height="1" fill="#b8a482" opacity="0.42"/>
<rect x="370.9" y="260.5" width="21.6" height="1" fill="#b8a482" opacity="0.42"/>
<rect x="400.7" y="260.5" width="25.9" height="1" fill="#f4ede0" opacity="0.42"/>
<rect x="281.6" y="262.1" width="13.8" height="1" fill="#ece2cf" opacity="0.42"/>
<rect x="304.9" y="262.1" width="19.1" height="1" fill="#c2af8e" opacity="0.42"/>
<rect x="325.2" y="262.1" width="4.5" height="1" fill="#f4ede0" opacity="0.42"/>
<rect x="334.7" y="262.1" width="9.6" height="1" fill="#c2af8e" opacity="0.42"/>
<rect x="348.1" y="262.1" width="14.2" height="1" fill="#f1e9da" opacity="0.42"/>
<rect x="366.0" y="262.1" width="27.9" height="1" fill="#c2af8e" opacity="0.42"/>
<rect x="403.7" y="262.1" width="23.0" height="1" fill="#ece2cf" opacity="0.42"/>
<rect x="259.8" y="263.7" width="11.2" height="1" fill="#b8a482" opacity="0.42"/>
<rect x="275.0" y="263.7" width="15.7" height="1" fill="#c2af8e" opacity="0.42"/>
<rect x="293.1" y="263.7" width="20.4" height="1" fill="#b09b77" opacity="0.42"/>
<rect x="323.1" y="263.7" width="9.1" height="1" fill="#b8a482" opacity="0.42"/>
<rect x="341.2" y="263.7" width="9.0" height="1" fill="#f4ede0" opacity="0.42"/>
<rect x="354.4" y="263.7" width="22.7" height="1" fill="#ece2cf" opacity="0.42"/>
<rect x="379.8" y="263.7" width="24.7" height="1" fill="#f1e9da" opacity="0.42"/>
<rect x="411.7" y="263.7" width="23.3" height="1" fill="#c2af8e" opacity="0.42"/>
<rect x="277.8" y="265.0" width="16.1" height="1" fill="#f1e9da" opacity="0.42"/>
<rect x="295.7" y="265.0" width="8.0" height="1" fill="#f4ede0" opacity="0.42"/>
<rect x="308.3" y="265.0" width="13.9" height="1" fill="#f4ede0" opacity="0.42"/>
<rect x="331.5" y="265.0" width="21.2" height="1" fill="#f1e9da" opacity="0.42"/>
<rect x="362.5" y="265.0" width="4.8" height="1" fill="#c2af8e" opacity="0.42"/>
<rect x="370.1" y="265.0" width="19.1" height="1" fill="#b8a482" opacity="0.42"/>
<rect x="390.5" y="265.0" width="16.1" height="1" fill="#c2af8e" opacity="0.42"/>
<rect x="412.8" y="265.0" width="20.8" height="1" fill="#f4ede0" opacity="0.42"/>
<rect x="284.8" y="266.3" width="5.5" height="1" fill="#b8a482" opacity="0.42"/>
<rect x="292.4" y="266.3" width="15.7" height="1" fill="#c2af8e" opacity="0.42"/>
<rect x="313.8" y="266.3" width="4.1" height="1" fill="#c2af8e" opacity="0.42"/>
<rect x="325.1" y="266.3" width="7.6" height="1" fill="#f4ede0" opacity="0.42"/>
<rect x="338.5" y="266.3" width="27.8" height="1" fill="#b09b77" opacity="0.42"/>
<rect x="370.6" y="266.3" width="15.9" height="1" fill="#b8a482" opacity="0.42"/>
<rect x="390.6" y="266.3" width="9.2" height="1" fill="#c2af8e" opacity="0.42"/>
<rect x="407.4" y="266.3" width="10.6" height="1" fill="#c2af8e" opacity="0.42"/>
<rect x="419.0" y="266.3" width="10.5" height="1" fill="#b8a482" opacity="0.42"/>
<rect x="271.2" y="267.6" width="17.4" height="1" fill="#f1e9da" opacity="0.42"/>
<rect x="292.0" y="267.6" width="11.8" height="1" fill="#b8a482" opacity="0.42"/>
<rect x="310.7" y="267.6" width="17.1" height="1" fill="#b09b77" opacity="0.42"/>
<rect x="331.7" y="267.6" width="13.8" height="1" fill="#f4ede0" opacity="0.42"/>
<rect x="353.0" y="267.6" width="13.6" height="1" fill="#f1e9da" opacity="0.42"/>
<rect x="372.4" y="267.6" width="13.2" height="1" fill="#c2af8e" opacity="0.42"/>
<rect x="390.1" y="267.6" width="13.2" height="1" fill="#ece2cf" opacity="0.42"/>
<rect x="411.6" y="267.6" width="25.6" height="1" fill="#f4ede0" opacity="0.42"/>
<rect x="277.4" y="268.9" width="27.7" height="1" fill="#f4ede0" opacity="0.42"/>
<rect x="311.7" y="268.9" width="13.0" height="1" fill="#c2af8e" opacity="0.42"/>
<rect x="333.1" y="268.9" width="19.9" height="1" fill="#b8a482" opacity="0.42"/>
<rect x="361.6" y="268.9" width="22.8" height="1" fill="#f4ede0" opacity="0.42"/>
<rect x="385.9" y="268.9" width="20.7" height="1" fill="#f1e9da" opacity="0.42"/>
<rect x="413.7" y="268.9" width="14.6" height="1" fill="#f4ede0" opacity="0.42"/>
<rect x="273.8" y="270.5" width="15.4" height="1" fill="#f4ede0" opacity="0.42"/>
<rect x="297.8" y="270.5" width="16.2" height="1" fill="#b09b77" opacity="0.42"/>
<rect x="320.0" y="270.5" width="13.1" height="1" fill="#f4ede0" opacity="0.42"/>
<rect x="341.2" y="270.5" width="24.9" height="1" fill="#f1e9da" opacity="0.42"/>
<rect x="373.5" y="270.5" width="13.4" height="1" fill="#b09b77" opacity="0.42"/>
<rect x="390.4" y="270.5" width="19.8" height="1" fill="#f1e9da" opacity="0.42"/>
<rect x="411.8" y="270.5" width="23.1" height="1" fill="#f4ede0" opacity="0.42"/>
<rect x="266.1" y="271.8" width="10.3" height="1" fill="#ece2cf" opacity="0.42"/>
<rect x="285.1" y="271.8" width="12.3" height="1" fill="#b09b77" opacity="0.42"/>
<rect x="302.8" y="271.8" width="9.3" height="1" fill="#c2af8e" opacity="0.42"/>
<rect x="313.7" y="271.8" width="22.2" height="1" fill="#f1e9da" opacity="0.42"/>
<rect x="341.6" y="271.8" width="16.7" height="1" fill="#f1e9da" opacity="0.42"/>
<rect x="361.4" y="271.8" width="8.1" height="1" fill="#f4ede0" opacity="0.42"/>
<rect x="374.6" y="271.8" width="19.4" height="1" fill="#f4ede0" opacity="0.42"/>
<rect x="402.8" y="271.8" width="5.0" height="1" fill="#ece2cf" opacity="0.42"/>
<rect x="412.1" y="271.8" width="24.7" height="1" fill="#ece2cf" opacity="0.42"/>
<rect x="275.8" y="273.1" width="13.0" height="1" fill="#f1e9da" opacity="0.42"/>
<rect x="293.0" y="273.1" width="23.3" height="1" fill="#b09b77" opacity="0.42"/>
<rect x="320.0" y="273.1" width="19.9" height="1" fill="#f1e9da" opacity="0.42"/>
<rect x="344.5" y="273.1" width="27.9" height="1" fill="#f4ede0" opacity="0.42"/>
<rect x="374.4" y="273.1" width="19.2" height="1" fill="#f4ede0" opacity="0.42"/>
<rect x="401.8" y="273.1" width="22.2" height="1" fill="#c2af8e" opacity="0.42"/>
<rect x="267.4" y="274.4" width="16.5" height="1" fill="#c2af8e" opacity="0.42"/>
<rect x="290.5" y="274.4" width="16.6" height="1" fill="#ece2cf" opacity="0.42"/>
<rect x="310.3" y="274.4" width="17.3" height="1" fill="#b8a482" opacity="0.42"/>
<rect x="333.8" y="274.4" width="5.4" height="1" fill="#c2af8e" opacity="0.42"/>
<rect x="343.0" y="274.4" width="17.1" height="1" fill="#f1e9da" opacity="0.42"/>
<rect x="363.3" y="274.4" width="10.4" height="1" fill="#ece2cf" opacity="0.42"/>
<rect x="375.5" y="274.4" width="19.3" height="1" fill="#b8a482" opacity="0.42"/>
<rect x="397.6" y="274.4" width="14.2" height="1" fill="#f1e9da" opacity="0.42"/>
<rect x="418.3" y="274.4" width="12.9" height="1" fill="#b8a482" opacity="0.42"/>
<rect x="272.2" y="276.4" width="21.1" height="1" fill="#f1e9da" opacity="0.42"/>
<rect x="303.0" y="276.4" width="14.3" height="1" fill="#b09b77" opacity="0.42"/>
<rect x="325.6" y="276.4" width="12.5" height="1" fill="#ece2cf" opacity="0.42"/>
<rect x="346.7" y="276.4" width="7.1" height="1" fill="#b09b77" opacity="0.42"/>
<rect x="356.6" y="276.4" width="27.3" height="1" fill="#f4ede0" opacity="0.42"/>
<rect x="390.1" y="276.4" width="5.5" height="1" fill="#c2af8e" opacity="0.42"/>
<rect x="399.6" y="276.4" width="5.7" height="1" fill="#ece2cf" opacity="0.42"/>
<rect x="409.7" y="276.4" width="16.6" height="1" fill="#ece2cf" opacity="0.42"/>
<rect x="262.8" y="278.4" width="18.2" height="1" fill="#ece2cf" opacity="0.42"/>
<rect x="290.4" y="278.4" width="20.8" height="1" fill="#ece2cf" opacity="0.42"/>
<rect x="316.0" y="278.4" width="15.4" height="1" fill="#b8a482" opacity="0.42"/>
<rect x="336.3" y="278.4" width="15.8" height="1" fill="#b09b77" opacity="0.42"/>
<rect x="359.9" y="278.4" width="4.2" height="1" fill="#c2af8e" opacity="0.42"/>
<rect x="371.8" y="278.4" width="13.6" height="1" fill="#b8a482" opacity="0.42"/>
<rect x="394.7" y="278.4" width="11.1" height="1" fill="#f1e9da" opacity="0.42"/>
<rect x="413.7" y="278.4" width="22.5" height="1" fill="#b8a482" opacity="0.42"/>
<rect x="274.0" y="279.7" width="23.6" height="1" fill="#b8a482" opacity="0.42"/>
<rect x="303.1" y="279.7" width="24.4" height="1" fill="#c2af8e" opacity="0.42"/>
<rect x="333.5" y="279.7" width="5.3" height="1" fill="#f4ede0" opacity="0.42"/>
<rect x="341.6" y="279.7" width="12.1" height="1" fill="#b8a482" opacity="0.42"/>
<rect x="359.6" y="279.7" width="22.0" height="1" fill="#b09b77" opacity="0.42"/>
<rect x="383.8" y="279.7" width="13.8" height="1" fill="#b8a482" opacity="0.42"/>
<rect x="406.5" y="279.7" width="7.5" height="1" fill="#f1e9da" opacity="0.42"/>
<rect x="416.7" y="279.7" width="27.6" height="1" fill="#c2af8e" opacity="0.42"/>
<rect x="274.6" y="281.7" width="11.5" height="1" fill="#f1e9da" opacity="0.42"/>
<rect x="293.1" y="281.7" width="11.2" height="1" fill="#ece2cf" opacity="0.42"/>
<rect x="309.8" y="281.7" width="14.1" height="1" fill="#b8a482" opacity="0.42"/>
<rect x="327.7" y="281.7" width="10.0" height="1" fill="#ece2cf" opacity="0.42"/>
<rect x="345.9" y="281.7" width="24.6" height="1" fill="#f1e9da" opacity="0.42"/>
<rect x="374.2" y="281.7" width="7.2" height="1" fill="#c2af8e" opacity="0.42"/>
<rect x="387.2" y="281.7" width="13.0" height="1" fill="#ece2cf" opacity="0.42"/>
<rect x="407.0" y="281.7" width="21.0" height="1" fill="#c2af8e" opacity="0.42"/>
<rect x="262.2" y="283.3" width="15.0" height="1" fill="#f4ede0" opacity="0.42"/>
<rect x="283.1" y="283.3" width="5.2" height="1" fill="#f1e9da" opacity="0.42"/>
<rect x="289.4" y="283.3" width="5.6" height="1" fill="#b09b77" opacity="0.42"/>
<rect x="303.5" y="283.3" width="4.8" height="1" fill="#c2af8e" opacity="0.42"/>
<rect x="316.5" y="283.3" width="11.0" height="1" fill="#f4ede0" opacity="0.42"/>
<rect x="330.4" y="283.3" width="27.4" height="1" fill="#b09b77" opacity="0.42"/>
<rect x="362.8" y="283.3" width="26.4" height="1" fill="#ece2cf" opacity="0.42"/>
<rect x="392.1" y="283.3" width="8.9" height="1" fill="#c2af8e" opacity="0.42"/>
<rect x="405.9" y="283.3" width="19.3" height="1" fill="#b8a482" opacity="0.42"/>
<rect x="261.1" y="284.6" width="18.3" height="1" fill="#c2af8e" opacity="0.42"/>
<rect x="280.5" y="284.6" width="21.3" height="1" fill="#f4ede0" opacity="0.42"/>
<rect x="310.1" y="284.6" width="16.0" height="1" fill="#f4ede0" opacity="0.42"/>
<rect x="333.5" y="284.6" width="22.0" height="1" fill="#c2af8e" opacity="0.42"/>
<rect x="361.3" y="284.6" width="7.8" height="1" fill="#f4ede0" opacity="0.42"/>
<rect x="371.9" y="284.6" width="6.4" height="1" fill="#b8a482" opacity="0.42"/>
<rect x="381.2" y="284.6" width="6.2" height="1" fill="#b8a482" opacity="0.42"/>
<rect x="392.1" y="284.6" width="19.8" height="1" fill="#f1e9da" opacity="0.42"/>
<rect x="419.3" y="284.6" width="14.6" height="1" fill="#ece2cf" opacity="0.42"/>
<rect x="268.7" y="285.9" width="7.2" height="1" fill="#c2af8e" opacity="0.42"/>
<rect x="284.4" y="285.9" width="11.0" height="1" fill="#c2af8e" opacity="0.42"/>
<rect x="304.3" y="285.9" width="23.1" height="1" fill="#f4ede0" opacity="0.42"/>
<rect x="333.5" y="285.9" width="7.7" height="1" fill="#f1e9da" opacity="0.42"/>
<rect x="345.1" y="285.9" width="24.2" height="1" fill="#c2af8e" opacity="0.42"/>
<rect x="378.8" y="285.9" width="20.0" height="1" fill="#c2af8e" opacity="0.42"/>
<rect x="403.3" y="285.9" width="4.8" height="1" fill="#ece2cf" opacity="0.42"/>
<rect x="410.5" y="285.9" width="11.0" height="1" fill="#f4ede0" opacity="0.42"/>
<rect x="427.4" y="285.9" width="6.2" height="1" fill="#ece2cf" opacity="0.42"/>
<rect x="267.0" y="287.2" width="20.3" height="1" fill="#b8a482" opacity="0.42"/>
<rect x="288.6" y="287.2" width="12.4" height="1" fill="#f4ede0" opacity="0.42"/>
<rect x="310.4" y="287.2" width="27.9" height="1" fill="#b09b77" opacity="0.42"/>
<rect x="344.0" y="287.2" width="11.0" height="1" fill="#f1e9da" opacity="0.42"/>
<rect x="356.2" y="287.2" width="22.8" height="1" fill="#b8a482" opacity="0.42"/>
<rect x="381.7" y="287.2" width="10.7" height="1" fill="#f1e9da" opacity="0.42"/>
<rect x="398.8" y="287.2" width="17.0" height="1" fill="#b8a482" opacity="0.42"/>
<rect x="418.6" y="287.2" width="15.3" height="1" fill="#c2af8e" opacity="0.42"/>
<rect x="259.5" y="289.2" width="18.4" height="1" fill="#b8a482" opacity="0.42"/>
<rect x="282.0" y="289.2" width="26.7" height="1" fill="#f4ede0" opacity="0.42"/>
<rect x="312.3" y="289.2" width="8.1" height="1" fill="#f1e9da" opacity="0.42"/>
<rect x="325.5" y="289.2" width="9.9" height="1" fill="#f4ede0" opacity="0.42"/>
<rect x="339.7" y="289.2" width="6.6" height="1" fill="#f1e9da" opacity="0.42"/>
<rect x="354.6" y="289.2" width="21.4" height="1" fill="#ece2cf" opacity="0.42"/>
<rect x="377.9" y="289.2" width="17.2" height="1" fill="#c2af8e" opacity="0.42"/>
<rect x="401.5" y="289.2" width="15.1" height="1" fill="#b8a482" opacity="0.42"/>
<rect x="417.9" y="289.2" width="17.9" height="1" fill="#ece2cf" opacity="0.42"/>
<rect x="267.5" y="291.2" width="24.1" height="1" fill="#b8a482" opacity="0.42"/>
<rect x="296.0" y="291.2" width="19.9" height="1" fill="#c2af8e" opacity="0.42"/>
<rect x="320.1" y="291.2" width="19.9" height="1" fill="#b8a482" opacity="0.42"/>
<rect x="344.0" y="291.2" width="24.2" height="1" fill="#ece2cf" opacity="0.42"/>
<rect x="372.0" y="291.2" width="10.3" height="1" fill="#b8a482" opacity="0.42"/>
<rect x="391.1" y="291.2" width="6.8" height="1" fill="#ece2cf" opacity="0.42"/>
<rect x="401.4" y="291.2" width="17.0" height="1" fill="#f1e9da" opacity="0.42"/>
<rect x="423.6" y="291.2" width="7.9" height="1" fill="#b09b77" opacity="0.42"/>
<rect x="270.9" y="292.5" width="8.7" height="1" fill="#ece2cf" opacity="0.42"/>
<rect x="285.6" y="292.5" width="27.7" height="1" fill="#c2af8e" opacity="0.42"/>
<rect x="320.9" y="292.5" width="16.8" height="1" fill="#c2af8e" opacity="0.42"/>
<rect x="346.7" y="292.5" width="4.4" height="1" fill="#b8a482" opacity="0.42"/>
<rect x="356.5" y="292.5" width="23.0" height="1" fill="#b09b77" opacity="0.42"/>
<rect x="382.4" y="292.5" width="21.8" height="1" fill="#b8a482" opacity="0.42"/>
<rect x="412.0" y="292.5" width="7.7" height="1" fill="#f1e9da" opacity="0.42"/>
<rect x="429.6" y="292.5" width="14.2" height="1" fill="#b09b77" opacity="0.42"/>
<rect x="280.6" y="294.5" width="6.9" height="1" fill="#f4ede0" opacity="0.42"/>
<rect x="293.7" y="294.5" width="9.6" height="1" fill="#b09b77" opacity="0.42"/>
<rect x="311.3" y="294.5" width="16.3" height="1" fill="#b8a482" opacity="0.42"/>
<rect x="336.0" y="294.5" width="5.8" height="1" fill="#f1e9da" opacity="0.42"/>
<rect x="351.6" y="294.5" width="5.0" height="1" fill="#b09b77" opacity="0.42"/>
<rect x="364.6" y="294.5" width="8.2" height="1" fill="#f1e9da" opacity="0.42"/>
<rect x="376.8" y="294.5" width="23.5" height="1" fill="#ece2cf" opacity="0.42"/>
<rect x="406.6" y="294.5" width="8.4" height="1" fill="#f1e9da" opacity="0.42"/>
<rect x="424.5" y="294.5" width="13.9" height="1" fill="#ece2cf" opacity="0.42"/>
<rect x="278.1" y="295.8" width="21.6" height="1" fill="#f4ede0" opacity="0.42"/>
<rect x="302.3" y="295.8" width="23.1" height="1" fill="#c2af8e" opacity="0.42"/>
<rect x="328.2" y="295.8" width="26.2" height="1" fill="#f4ede0" opacity="0.42"/>
<rect x="358.4" y="295.8" width="27.4" height="1" fill="#b8a482" opacity="0.42"/>
<rect x="394.0" y="295.8" width="15.5" height="1" fill="#ece2cf" opacity="0.42"/>
<rect x="415.2" y="295.8" width="11.9" height="1" fill="#b8a482" opacity="0.42"/>
<rect x="266.8" y="297.8" width="19.0" height="1" fill="#f1e9da" opacity="0.42"/>
<rect x="293.8" y="297.8" width="6.2" height="1" fill="#f4ede0" opacity="0.42"/>
<rect x="309.8" y="297.8" width="18.0" height="1" fill="#ece2cf" opacity="0.42"/>
<rect x="334.8" y="297.8" width="21.9" height="1" fill="#c2af8e" opacity="0.42"/>
<rect x="360.1" y="297.8" width="20.6" height="1" fill="#f1e9da" opacity="0.42"/>
<rect x="389.9" y="297.8" width="21.9" height="1" fill="#f4ede0" opacity="0.42"/>
<rect x="418.1" y="297.8" width="14.4" height="1" fill="#f4ede0" opacity="0.42"/>
<rect x="280.4" y="299.8" width="16.8" height="1" fill="#f4ede0" opacity="0.42"/>
<rect x="299.2" y="299.8" width="27.2" height="1" fill="#f1e9da" opacity="0.42"/>
<rect x="334.2" y="299.8" width="24.3" height="1" fill="#c2af8e" opacity="0.42"/>
<rect x="361.3" y="299.8" width="15.0" height="1" fill="#c2af8e" opacity="0.42"/>
<rect x="385.2" y="299.8" width="17.8" height="1" fill="#f4ede0" opacity="0.42"/>
<rect x="412.0" y="299.8" width="5.2" height="1" fill="#f4ede0" opacity="0.42"/>
<rect x="425.2" y="299.8" width="23.0" height="1" fill="#f4ede0" opacity="0.42"/>
<rect x="264.8" y="301.4" width="6.1" height="1" fill="#f4ede0" opacity="0.42"/>
<rect x="278.0" y="301.4" width="23.0" height="1" fill="#f4ede0" opacity="0.42"/>
<rect x="307.3" y="301.4" width="24.1" height="1" fill="#f1e9da" opacity="0.42"/>
<rect x="332.4" y="301.4" width="15.7" height="1" fill="#b8a482" opacity="0.42"/>
<rect x="357.7" y="301.4" width="25.1" height="1" fill="#ece2cf" opacity="0.42"/>
<rect x="387.6" y="301.4" width="18.5" height="1" fill="#ece2cf" opacity="0.42"/>
<rect x="408.4" y="301.4" width="17.1" height="1" fill="#b8a482" opacity="0.42"/>
<rect x="274.0" y="303.0" width="4.8" height="1" fill="#f1e9da" opacity="0.42"/>
<rect x="280.6" y="303.0" width="10.5" height="1" fill="#f4ede0" opacity="0.42"/>
<rect x="300.1" y="303.0" width="13.8" height="1" fill="#b09b77" opacity="0.42"/>
<rect x="322.1" y="303.0" width="6.9" height="1" fill="#f4ede0" opacity="0.42"/>
<rect x="335.7" y="303.0" width="13.0" height="1" fill="#c2af8e" opacity="0.42"/>
<rect x="353.2" y="303.0" width="12.0" height="1" fill="#c2af8e" opacity="0.42"/>
<rect x="369.5" y="303.0" width="9.4" height="1" fill="#b09b77" opacity="0.42"/>
<rect x="387.8" y="303.0" width="27.1" height="1" fill="#f1e9da" opacity="0.42"/>
<rect x="420.3" y="303.0" width="26.9" height="1" fill="#b09b77" opacity="0.42"/>
<rect x="281.4" y="305.0" width="7.9" height="1" fill="#b09b77" opacity="0.42"/>
<rect x="290.4" y="305.0" width="24.5" height="1" fill="#b8a482" opacity="0.42"/>
<rect x="324.4" y="305.0" width="14.9" height="1" fill="#f4ede0" opacity="0.42"/>
<rect x="342.5" y="305.0" width="12.5" height="1" fill="#b8a482" opacity="0.42"/>
<rect x="364.8" y="305.0" width="21.6" height="1" fill="#b09b77" opacity="0.42"/>
<rect x="393.5" y="305.0" width="7.2" height="1" fill="#f1e9da" opacity="0.42"/>
<rect x="407.7" y="305.0" width="5.8" height="1" fill="#b09b77" opacity="0.42"/>
<rect x="417.5" y="305.0" width="10.4" height="1" fill="#f1e9da" opacity="0.42"/>
<rect x="278.0" y="306.6" width="20.5" height="1" fill="#b09b77" opacity="0.42"/>
<rect x="306.7" y="306.6" width="5.4" height="1" fill="#f4ede0" opacity="0.42"/>
<rect x="317.6" y="306.6" width="12.7" height="1" fill="#b8a482" opacity="0.42"/>
<rect x="331.9" y="306.6" width="24.0" height="1" fill="#f4ede0" opacity="0.42"/>
<rect x="358.0" y="306.6" width="13.1" height="1" fill="#f1e9da" opacity="0.42"/>
<rect x="378.8" y="306.6" width="25.4" height="1" fill="#f4ede0" opacity="0.42"/>
<rect x="410.7" y="306.6" width="15.0" height="1" fill="#f1e9da" opacity="0.42"/>
<rect x="283.5" y="308.2" width="25.4" height="1" fill="#c2af8e" opacity="0.42"/>
<rect x="311.6" y="308.2" width="26.0" height="1" fill="#b09b77" opacity="0.42"/>
<rect x="339.1" y="308.2" width="13.4" height="1" fill="#f4ede0" opacity="0.42"/>
<rect x="358.8" y="308.2" width="27.6" height="1" fill="#f4ede0" opacity="0.42"/>
<rect x="394.2" y="308.2" width="11.0" height="1" fill="#b09b77" opacity="0.42"/>
<rect x="406.4" y="308.2" width="17.2" height="1" fill="#ece2cf" opacity="0.42"/>
<rect x="284.6" y="310.2" width="19.3" height="1" fill="#ece2cf" opacity="0.42"/>
<rect x="313.6" y="310.2" width="21.0" height="1" fill="#f4ede0" opacity="0.42"/>
<rect x="343.7" y="310.2" width="11.8" height="1" fill="#b09b77" opacity="0.42"/>
<rect x="361.0" y="310.2" width="5.2" height="1" fill="#b09b77" opacity="0.42"/>
<rect x="370.3" y="310.2" width="7.4" height="1" fill="#b09b77" opacity="0.42"/>
<rect x="385.9" y="310.2" width="5.5" height="1" fill="#f1e9da" opacity="0.42"/>
<rect x="399.0" y="310.2" width="8.1" height="1" fill="#f1e9da" opacity="0.42"/>
<rect x="416.3" y="310.2" width="18.1" height="1" fill="#ece2cf" opacity="0.42"/>
<rect x="260.1" y="311.8" width="11.4" height="1" fill="#ece2cf" opacity="0.42"/>
<rect x="274.3" y="311.8" width="11.7" height="1" fill="#ece2cf" opacity="0.42"/>
<rect x="290.7" y="311.8" width="20.4" height="1" fill="#f1e9da" opacity="0.42"/>
<rect x="315.6" y="311.8" width="13.3" height="1" fill="#ece2cf" opacity="0.42"/>
<rect x="332.2" y="311.8" width="8.9" height="1" fill="#b09b77" opacity="0.42"/>
<rect x="346.2" y="311.8" width="24.1" height="1" fill="#f4ede0" opacity="0.42"/>
<rect x="372.7" y="311.8" width="25.4" height="1" fill="#b8a482" opacity="0.42"/>
<rect x="400.5" y="311.8" width="22.2" height="1" fill="#ece2cf" opacity="0.42"/>
<rect x="272.6" y="313.8" width="22.1" height="1" fill="#f1e9da" opacity="0.42"/>
<rect x="299.1" y="313.8" width="21.2" height="1" fill="#ece2cf" opacity="0.42"/>
<rect x="326.1" y="313.8" width="10.9" height="1" fill="#f4ede0" opacity="0.42"/>
<rect x="339.1" y="313.8" width="14.8" height="1" fill="#b8a482" opacity="0.42"/>
<rect x="355.3" y="313.8" width="23.8" height="1" fill="#b09b77" opacity="0.42"/>
<rect x="382.9" y="313.8" width="18.5" height="1" fill="#f1e9da" opacity="0.42"/>
<rect x="404.7" y="313.8" width="9.8" height="1" fill="#b8a482" opacity="0.42"/>
<rect x="423.5" y="313.8" width="6.3" height="1" fill="#b09b77" opacity="0.42"/>
<rect x="268.6" y="315.8" width="21.1" height="1" fill="#f1e9da" opacity="0.42"/>
<rect x="292.2" y="315.8" width="8.2" height="1" fill="#f4ede0" opacity="0.42"/>
<rect x="307.2" y="315.8" width="20.6" height="1" fill="#ece2cf" opacity="0.42"/>
<rect x="332.3" y="315.8" width="26.6" height="1" fill="#f4ede0" opacity="0.42"/>
<rect x="367.4" y="315.8" width="13.6" height="1" fill="#ece2cf" opacity="0.42"/>
<rect x="389.3" y="315.8" width="12.4" height="1" fill="#c2af8e" opacity="0.42"/>
<rect x="409.1" y="315.8" width="7.4" height="1" fill="#f4ede0" opacity="0.42"/>
<rect x="422.2" y="315.8" width="20.1" height="1" fill="#f1e9da" opacity="0.42"/>
<rect x="279.6" y="317.1" width="26.2" height="1" fill="#b8a482" opacity="0.42"/>
<rect x="311.3" y="317.1" width="24.4" height="1" fill="#f4ede0" opacity="0.42"/>
<rect x="338.9" y="317.1" width="14.4" height="1" fill="#c2af8e" opacity="0.42"/>
<rect x="359.4" y="317.1" width="10.6" height="1" fill="#f4ede0" opacity="0.42"/>
<rect x="378.1" y="317.1" width="24.1" height="1" fill="#c2af8e" opacity="0.42"/>
<rect x="405.2" y="317.1" width="24.4" height="1" fill="#c2af8e" opacity="0.42"/>
<rect x="277.7" y="319.1" width="4.8" height="1" fill="#f4ede0" opacity="0.42"/>
<rect x="287.0" y="319.1" width="10.9" height="1" fill="#f4ede0" opacity="0.42"/>
<rect x="305.2" y="319.1" width="20.9" height="1" fill="#b09b77" opacity="0.42"/>
<rect x="335.2" y="319.1" width="21.1" height="1" fill="#b09b77" opacity="0.42"/>
<rect x="362.7" y="319.1" width="16.2" height="1" fill="#b09b77" opacity="0.42"/>
<rect x="381.8" y="319.1" width="9.4" height="1" fill="#b8a482" opacity="0.42"/>
<rect x="395.4" y="319.1" width="17.7" height="1" fill="#b8a482" opacity="0.42"/>
<rect x="417.3" y="319.1" width="20.8" height="1" fill="#b8a482" opacity="0.42"/>
<rect x="263.9" y="320.4" width="4.1" height="1" fill="#f4ede0" opacity="0.42"/>
<rect x="275.8" y="320.4" width="14.7" height="1" fill="#b09b77" opacity="0.42"/>
<rect x="292.1" y="320.4" width="14.7" height="1" fill="#b09b77" opacity="0.42"/>
<rect x="313.1" y="320.4" width="4.8" height="1" fill="#b09b77" opacity="0.42"/>
<rect x="326.3" y="320.4" width="6.7" height="1" fill="#c2af8e" opacity="0.42"/>
<rect x="336.6" y="320.4" width="26.5" height="1" fill="#f1e9da" opacity="0.42"/>
<rect x="368.9" y="320.4" width="9.5" height="1" fill="#b09b77" opacity="0.42"/>
<rect x="386.6" y="320.4" width="9.0" height="1" fill="#b09b77" opacity="0.42"/>
<rect x="401.4" y="320.4" width="4.7" height="1" fill="#c2af8e" opacity="0.42"/>
<rect x="407.4" y="320.4" width="16.1" height="1" fill="#ece2cf" opacity="0.42"/>
<rect x="282.1" y="322.0" width="21.4" height="1" fill="#b09b77" opacity="0.42"/>
<rect x="305.5" y="322.0" width="13.4" height="1" fill="#b09b77" opacity="0.42"/>
<rect x="323.6" y="322.0" width="20.0" height="1" fill="#b8a482" opacity="0.42"/>
<rect x="351.8" y="322.0" width="27.1" height="1" fill="#f1e9da" opacity="0.42"/>
<rect x="385.8" y="322.0" width="10.0" height="1" fill="#f4ede0" opacity="0.42"/>
<rect x="401.1" y="322.0" width="7.2" height="1" fill="#ece2cf" opacity="0.42"/>
<rect x="418.1" y="322.0" width="25.1" height="1" fill="#b09b77" opacity="0.42"/>
<rect x="279.4" y="323.6" width="6.7" height="1" fill="#c2af8e" opacity="0.42"/>
<rect x="289.7" y="323.6" width="8.7" height="1" fill="#f4ede0" opacity="0.42"/>
<rect x="307.4" y="323.6" width="4.4" height="1" fill="#c2af8e" opacity="0.42"/>
<rect x="319.9" y="323.6" width="21.8" height="1" fill="#f1e9da" opacity="0.42"/>
<rect x="344.5" y="323.6" width="22.1" height="1" fill="#f1e9da" opacity="0.42"/>
<rect x="374.4" y="323.6" width="26.8" height="1" fill="#f4ede0" opacity="0.42"/>
<rect x="408.7" y="323.6" width="21.3" height="1" fill="#b8a482" opacity="0.42"/>
<rect x="273.7" y="325.2" width="24.7" height="1" fill="#f4ede0" opacity="0.42"/>
<rect x="306.2" y="325.2" width="16.9" height="1" fill="#b09b77" opacity="0.42"/>
<rect x="327.3" y="325.2" width="7.9" height="1" fill="#f4ede0" opacity="0.42"/>
<rect x="339.0" y="325.2" width="12.5" height="1" fill="#b8a482" opacity="0.42"/>
<rect x="352.9" y="325.2" width="8.2" height="1" fill="#f1e9da" opacity="0.42"/>
<rect x="365.9" y="325.2" width="4.7" height="1" fill="#f4ede0" opacity="0.42"/>
<rect x="375.7" y="325.2" width="6.5" height="1" fill="#b8a482" opacity="0.42"/>
<rect x="390.9" y="325.2" width="12.7" height="1" fill="#ece2cf" opacity="0.42"/>
<rect x="409.0" y="325.2" width="6.0" height="1" fill="#f1e9da" opacity="0.42"/>
<rect x="423.2" y="325.2" width="15.4" height="1" fill="#c2af8e" opacity="0.42"/>
<rect x="269.4" y="326.5" width="13.3" height="1" fill="#f1e9da" opacity="0.42"/>
<rect x="286.0" y="326.5" width="4.5" height="1" fill="#c2af8e" opacity="0.42"/>
<rect x="297.9" y="326.5" width="26.7" height="1" fill="#b09b77" opacity="0.42"/>
<rect x="329.5" y="326.5" width="21.6" height="1" fill="#ece2cf" opacity="0.42"/>
<rect x="353.5" y="326.5" width="25.5" height="1" fill="#ece2cf" opacity="0.42"/>
<rect x="381.3" y="326.5" width="4.3" height="1" fill="#c2af8e" opacity="0.42"/>
<rect x="393.1" y="326.5" width="16.8" height="1" fill="#b8a482" opacity="0.42"/>
<rect x="411.0" y="326.5" width="23.9" height="1" fill="#b8a482" opacity="0.42"/>
<rect x="263.9" y="328.1" width="17.7" height="1" fill="#b8a482" opacity="0.42"/>
<rect x="290.4" y="328.1" width="12.1" height="1" fill="#b09b77" opacity="0.42"/>
<rect x="311.5" y="328.1" width="15.6" height="1" fill="#f4ede0" opacity="0.42"/>
<rect x="336.3" y="328.1" width="4.2" height="1" fill="#c2af8e" opacity="0.42"/>
<rect x="349.6" y="328.1" width="13.2" height="1" fill="#b8a482" opacity="0.42"/>
<rect x="364.7" y="328.1" width="25.1" height="1" fill="#c2af8e" opacity="0.42"/>
<rect x="394.7" y="328.1" width="17.7" height="1" fill="#f4ede0" opacity="0.42"/>
<rect x="419.6" y="328.1" width="25.9" height="1" fill="#b8a482" opacity="0.42"/>
<rect x="263.7" y="330.1" width="15.3" height="1" fill="#ece2cf" opacity="0.42"/>
<rect x="285.9" y="330.1" width="24.7" height="1" fill="#c2af8e" opacity="0.42"/>
<rect x="318.0" y="330.1" width="15.3" height="1" fill="#ece2cf" opacity="0.42"/>
<rect x="339.7" y="330.1" width="6.8" height="1" fill="#ece2cf" opacity="0.42"/>
<rect x="352.9" y="330.1" width="5.5" height="1" fill="#c2af8e" opacity="0.42"/>
<rect x="366.7" y="330.1" width="25.3" height="1" fill="#b8a482" opacity="0.42"/>
<rect x="396.5" y="330.1" width="22.9" height="1" fill="#c2af8e" opacity="0.42"/>
<rect x="426.1" y="330.1" width="21.8" height="1" fill="#b8a482" opacity="0.42"/>
<rect x="284.6" y="331.4" width="23.3" height="1" fill="#b8a482" opacity="0.42"/>
<rect x="313.1" y="331.4" width="13.6" height="1" fill="#c2af8e" opacity="0.42"/>
<rect x="334.7" y="331.4" width="5.1" height="1" fill="#b09b77" opacity="0.42"/>
<rect x="346.5" y="331.4" width="26.1" height="1" fill="#f1e9da" opacity="0.42"/>
<rect x="373.9" y="331.4" width="15.2" height="1" fill="#ece2cf" opacity="0.42"/>
<rect x="397.0" y="331.4" width="6.5" height="1" fill="#f4ede0" opacity="0.42"/>
<rect x="405.3" y="331.4" width="7.4" height="1" fill="#b09b77" opacity="0.42"/>
<rect x="415.3" y="331.4" width="16.3" height="1" fill="#b8a482" opacity="0.42"/>
<rect x="270.0" y="333.4" width="26.0" height="1" fill="#b8a482" opacity="0.42"/>
<rect x="297.6" y="333.4" width="4.7" height="1" fill="#f4ede0" opacity="0.42"/>
<rect x="310.7" y="333.4" width="16.1" height="1" fill="#b09b77" opacity="0.42"/>
<rect x="333.3" y="333.4" width="23.0" height="1" fill="#b09b77" opacity="0.42"/>
<rect x="358.0" y="333.4" width="5.3" height="1" fill="#b09b77" opacity="0.42"/>
<rect x="369.8" y="333.4" width="15.0" height="1" fill="#f4ede0" opacity="0.42"/>
<rect x="385.9" y="333.4" width="21.9" height="1" fill="#b8a482" opacity="0.42"/>
<rect x="410.4" y="333.4" width="16.2" height="1" fill="#ece2cf" opacity="0.42"/>
<rect x="281.1" y="334.7" width="9.0" height="1" fill="#ece2cf" opacity="0.42"/>
<rect x="299.9" y="334.7" width="18.7" height="1" fill="#b8a482" opacity="0.42"/>
<rect x="324.5" y="334.7" width="12.5" height="1" fill="#b8a482" opacity="0.42"/>
<rect x="338.8" y="334.7" width="9.7" height="1" fill="#b8a482" opacity="0.42"/>
<rect x="350.3" y="334.7" width="10.6" height="1" fill="#f1e9da" opacity="0.42"/>
<rect x="368.8" y="334.7" width="7.5" height="1" fill="#b09b77" opacity="0.42"/>
<rect x="382.5" y="334.7" width="12.0" height="1" fill="#c2af8e" opacity="0.42"/>
<rect x="395.6" y="334.7" width="5.8" height="1" fill="#b8a482" opacity="0.42"/>
<rect x="408.6" y="334.7" width="22.4" height="1" fill="#c2af8e" opacity="0.42"/>
<rect x="278.8" y="336.7" width="26.2" height="1" fill="#b09b77" opacity="0.42"/>
<rect x="311.9" y="336.7" width="26.0" height="1" fill="#f4ede0" opacity="0.42"/>
<rect x="345.6" y="336.7" width="5.9" height="1" fill="#b8a482" opacity="0.42"/>
<rect x="360.1" y="336.7" width="21.2" height="1" fill="#b8a482" opacity="0.42"/>
<rect x="388.3" y="336.7" width="7.2" height="1" fill="#ece2cf" opacity="0.42"/>
<rect x="403.7" y="336.7" width="5.3" height="1" fill="#b09b77" opacity="0.42"/>
<rect x="418.5" y="336.7" width="14.6" height="1" fill="#f4ede0" opacity="0.42"/>
<rect x="275.4" y="338.0" width="12.4" height="1" fill="#f1e9da" opacity="0.42"/>
<rect x="292.2" y="338.0" width="7.9" height="1" fill="#c2af8e" opacity="0.42"/>
<rect x="309.9" y="338.0" width="19.7" height="1" fill="#ece2cf" opacity="0.42"/>
<rect x="337.4" y="338.0" width="24.1" height="1" fill="#f1e9da" opacity="0.42"/>
<rect x="365.0" y="338.0" width="10.0" height="1" fill="#ece2cf" opacity="0.42"/>
<rect x="380.8" y="338.0" width="12.2" height="1" fill="#b09b77" opacity="0.42"/>
<rect x="402.0" y="338.0" width="26.1" height="1" fill="#f1e9da" opacity="0.42"/>
<rect x="269.3" y="339.3" width="25.4" height="1" fill="#b8a482" opacity="0.42"/>
<rect x="300.4" y="339.3" width="6.5" height="1" fill="#f1e9da" opacity="0.42"/>
<rect x="311.8" y="339.3" width="12.1" height="1" fill="#b8a482" opacity="0.42"/>
<rect x="329.7" y="339.3" width="27.2" height="1" fill="#c2af8e" opacity="0.42"/>
<rect x="359.8" y="339.3" width="5.3" height="1" fill="#f4ede0" opacity="0.42"/>
<rect x="370.9" y="339.3" width="26.5" height="1" fill="#ece2cf" opacity="0.42"/>
<rect x="406.8" y="339.3" width="16.5" height="1" fill="#f4ede0" opacity="0.42"/>
<rect x="266.7" y="340.6" width="22.1" height="1" fill="#b8a482" opacity="0.42"/>
<rect x="296.3" y="340.6" width="14.4" height="1" fill="#b8a482" opacity="0.42"/>
<rect x="320.5" y="340.6" width="8.2" height="1" fill="#ece2cf" opacity="0.42"/>
<rect x="335.3" y="340.6" width="8.0" height="1" fill="#f4ede0" opacity="0.42"/>
<rect x="346.8" y="340.6" width="13.4" height="1" fill="#f1e9da" opacity="0.42"/>
<rect x="363.5" y="340.6" width="4.7" height="1" fill="#f4ede0" opacity="0.42"/>
<rect x="377.0" y="340.6" width="19.4" height="1" fill="#b09b77" opacity="0.42"/>
<rect x="406.1" y="340.6" width="19.4" height="1" fill="#b09b77" opacity="0.42"/>
<rect x="270.0" y="341.9" width="20.7" height="1" fill="#f1e9da" opacity="0.42"/>
<rect x="292.3" y="341.9" width="21.5" height="1" fill="#b09b77" opacity="0.42"/>
<rect x="315.0" y="341.9" width="12.7" height="1" fill="#c2af8e" opacity="0.42"/>
<rect x="333.7" y="341.9" width="21.3" height="1" fill="#f4ede0" opacity="0.42"/>
<rect x="364.7" y="341.9" width="20.5" height="1" fill="#f1e9da" opacity="0.42"/>
<rect x="394.5" y="341.9" width="14.8" height="1" fill="#b8a482" opacity="0.42"/>
<rect x="412.6" y="341.9" width="13.5" height="1" fill="#f4ede0" opacity="0.42"/>
<rect x="283.1" y="343.9" width="25.1" height="1" fill="#ece2cf" opacity="0.42"/>
<rect x="312.3" y="343.9" width="24.0" height="1" fill="#b8a482" opacity="0.42"/>
<rect x="340.8" y="343.9" width="22.8" height="1" fill="#b8a482" opacity="0.42"/>
<rect x="372.3" y="343.9" width="23.3" height="1" fill="#f4ede0" opacity="0.42"/>
<rect x="399.6" y="343.9" width="19.0" height="1" fill="#c2af8e" opacity="0.42"/>
<rect x="420.2" y="343.9" width="6.1" height="1" fill="#f4ede0" opacity="0.42"/>
<rect x="271.9" y="345.9" width="8.3" height="1" fill="#c2af8e" opacity="0.42"/>
<rect x="285.6" y="345.9" width="24.1" height="1" fill="#b8a482" opacity="0.42"/>
<rect x="314.1" y="345.9" width="19.7" height="1" fill="#b09b77" opacity="0.42"/>
<rect x="340.0" y="345.9" width="5.5" height="1" fill="#f1e9da" opacity="0.42"/>
<rect x="346.6" y="345.9" width="24.5" height="1" fill="#c2af8e" opacity="0.42"/>
<rect x="380.5" y="345.9" width="12.5" height="1" fill="#b09b77" opacity="0.42"/>
<rect x="400.6" y="345.9" width="7.3" height="1" fill="#f4ede0" opacity="0.42"/>
<rect x="411.1" y="345.9" width="12.8" height="1" fill="#b09b77" opacity="0.42"/>
<rect x="277.7" y="347.9" width="23.1" height="1" fill="#f1e9da" opacity="0.42"/>
<rect x="308.7" y="347.9" width="26.4" height="1" fill="#b8a482" opacity="0.42"/>
<rect x="338.0" y="347.9" width="8.7" height="1" fill="#c2af8e" opacity="0.42"/>
<rect x="354.6" y="347.9" width="24.5" height="1" fill="#c2af8e" opacity="0.42"/>
<rect x="385.8" y="347.9" width="15.3" height="1" fill="#b8a482" opacity="0.42"/>
<rect x="402.6" y="347.9" width="19.9" height="1" fill="#f1e9da" opacity="0.42"/>
<rect x="276.3" y="349.2" width="15.7" height="1" fill="#b8a482" opacity="0.42"/>
<rect x="297.2" y="349.2" width="21.1" height="1" fill="#b8a482" opacity="0.42"/>
<rect x="322.9" y="349.2" width="15.6" height="1" fill="#c2af8e" opacity="0.42"/>
<rect x="347.7" y="349.2" width="14.2" height="1" fill="#b8a482" opacity="0.42"/>
<rect x="364.0" y="349.2" width="5.6" height="1" fill="#f1e9da" opacity="0.42"/>
<rect x="374.6" y="349.2" width="9.7" height="1" fill="#f1e9da" opacity="0.42"/>
<rect x="390.3" y="349.2" width="5.7" height="1" fill="#c2af8e" opacity="0.42"/>
<rect x="401.4" y="349.2" width="9.2" height="1" fill="#b09b77" opacity="0.42"/>
<rect x="419.4" y="349.2" width="27.1" height="1" fill="#ece2cf" opacity="0.42"/>
<rect x="280.4" y="350.5" width="5.3" height="1" fill="#b09b77" opacity="0.42"/>
<rect x="288.3" y="350.5" width="24.8" height="1" fill="#c2af8e" opacity="0.42"/>
<rect x="314.9" y="350.5" width="15.5" height="1" fill="#ece2cf" opacity="0.42"/>
<rect x="339.7" y="350.5" width="15.1" height="1" fill="#f4ede0" opacity="0.42"/>
<rect x="357.0" y="350.5" width="23.4" height="1" fill="#f4ede0" opacity="0.42"/>
<rect x="384.2" y="350.5" width="8.9" height="1" fill="#f4ede0" opacity="0.42"/>
<rect x="401.2" y="350.5" width="5.6" height="1" fill="#f4ede0" opacity="0.42"/>
<rect x="416.7" y="350.5" width="15.6" height="1" fill="#c2af8e" opacity="0.42"/>
<rect x="283.4" y="352.5" width="16.4" height="1" fill="#b8a482" opacity="0.42"/>
<rect x="306.5" y="352.5" width="20.5" height="1" fill="#b8a482" opacity="0.42"/>
<rect x="332.8" y="352.5" width="9.6" height="1" fill="#ece2cf" opacity="0.42"/>
<rect x="349.4" y="352.5" width="7.3" height="1" fill="#f1e9da" opacity="0.42"/>
<rect x="359.1" y="352.5" width="23.3" height="1" fill="#f1e9da" opacity="0.42"/>
<rect x="390.0" y="352.5" width="24.6" height="1" fill="#f1e9da" opacity="0.42"/>
<rect x="421.5" y="352.5" width="19.6" height="1" fill="#f4ede0" opacity="0.42"/>
<rect x="281.5" y="353.8" width="21.4" height="1" fill="#ece2cf" opacity="0.42"/>
<rect x="305.8" y="353.8" width="4.9" height="1" fill="#ece2cf" opacity="0.42"/>
<rect x="320.5" y="353.8" width="24.1" height="1" fill="#f1e9da" opacity="0.42"/>
<rect x="352.4" y="353.8" width="18.0" height="1" fill="#b8a482" opacity="0.42"/>
<rect x="375.0" y="353.8" width="20.3" height="1" fill="#b8a482" opacity="0.42"/>
<rect x="399.5" y="353.8" width="15.6" height="1" fill="#b8a482" opacity="0.42"/>
<rect x="420.4" y="353.8" width="16.3" height="1" fill="#f4ede0" opacity="0.42"/>
<rect x="266.2" y="355.4" width="25.7" height="1" fill="#c2af8e" opacity="0.42"/>
<rect x="300.4" y="355.4" width="8.8" height="1" fill="#ece2cf" opacity="0.42"/>
<rect x="312.7" y="355.4" width="27.4" height="1" fill="#f1e9da" opacity="0.42"/>
<rect x="341.4" y="355.4" width="8.3" height="1" fill="#ece2cf" opacity="0.42"/>
<rect x="356.7" y="355.4" width="4.6" height="1" fill="#f1e9da" opacity="0.42"/>
<rect x="369.1" y="355.4" width="9.7" height="1" fill="#b8a482" opacity="0.42"/>
<rect x="381.3" y="355.4" width="23.5" height="1" fill="#b09b77" opacity="0.42"/>
<rect x="409.8" y="355.4" width="17.5" height="1" fill="#f4ede0" opacity="0.42"/>
<rect x="277.1" y="357.0" width="6.9" height="1" fill="#ece2cf" opacity="0.42"/>
<rect x="286.3" y="357.0" width="7.3" height="1" fill="#b09b77" opacity="0.42"/>
<rect x="295.9" y="357.0" width="11.7" height="1" fill="#b8a482" opacity="0.42"/>
<rect x="310.1" y="357.0" width="14.1" height="1" fill="#b8a482" opacity="0.42"/>
<rect x="330.5" y="357.0" width="14.9" height="1" fill="#ece2cf" opacity="0.42"/>
<rect x="348.6" y="357.0" width="17.7" height="1" fill="#c2af8e" opacity="0.42"/>
<rect x="375.1" y="357.0" width="27.0" height="1" fill="#f1e9da" opacity="0.42"/>
<rect x="411.7" y="357.0" width="21.1" height="1" fill="#b8a482" opacity="0.42"/>
<rect x="276.4" y="358.3" width="27.2" height="1" fill="#f1e9da" opacity="0.42"/>
<rect x="305.2" y="358.3" width="22.1" height="1" fill="#c2af8e" opacity="0.42"/>
<rect x="336.1" y="358.3" width="14.1" height="1" fill="#b09b77" opacity="0.42"/>
<rect x="354.6" y="358.3" width="11.2" height="1" fill="#f4ede0" opacity="0.42"/>
<rect x="372.7" y="358.3" width="16.3" height="1" fill="#b8a482" opacity="0.42"/>
<rect x="394.0" y="358.3" width="16.0" height="1" fill="#b09b77" opacity="0.42"/>
<rect x="416.3" y="358.3" width="23.2" height="1" fill="#b09b77" opacity="0.42"/>
<rect x="274.5" y="360.3" width="25.5" height="1" fill="#b09b77" opacity="0.42"/>
<rect x="304.5" y="360.3" width="24.6" height="1" fill="#f1e9da" opacity="0.42"/>
<rect x="335.9" y="360.3" width="13.9" height="1" fill="#b09b77" opacity="0.42"/>
<rect x="353.1" y="360.3" width="23.7" height="1" fill="#f4ede0" opacity="0.42"/>
<rect x="384.5" y="360.3" width="19.0" height="1" fill="#ece2cf" opacity="0.42"/>
<rect x="406.4" y="360.3" width="11.9" height="1" fill="#b8a482" opacity="0.42"/>
<rect x="423.3" y="360.3" width="12.2" height="1" fill="#f4ede0" opacity="0.42"/>
<rect x="264.1" y="362.3" width="11.8" height="1" fill="#c2af8e" opacity="0.42"/>
<rect x="285.7" y="362.3" width="6.1" height="1" fill="#c2af8e" opacity="0.42"/>
<rect x="297.7" y="362.3" width="13.6" height="1" fill="#c2af8e" opacity="0.42"/>
<rect x="320.4" y="362.3" width="9.6" height="1" fill="#f4ede0" opacity="0.42"/>
<rect x="337.4" y="362.3" width="13.1" height="1" fill="#ece2cf" opacity="0.42"/>
<rect x="358.4" y="362.3" width="7.1" height="1" fill="#c2af8e" opacity="0.42"/>
<rect x="372.2" y="362.3" width="25.1" height="1" fill="#b8a482" opacity="0.42"/>
<rect x="398.6" y="362.3" width="7.3" height="1" fill="#ece2cf" opacity="0.42"/>
<rect x="412.4" y="362.3" width="19.5" height="1" fill="#ece2cf" opacity="0.42"/>
<rect x="271.6" y="364.3" width="17.0" height="1" fill="#f1e9da" opacity="0.42"/>
<rect x="296.0" y="364.3" width="14.5" height="1" fill="#c2af8e" opacity="0.42"/>
<rect x="318.8" y="364.3" width="20.6" height="1" fill="#f4ede0" opacity="0.42"/>
<rect x="346.5" y="364.3" width="7.9" height="1" fill="#f1e9da" opacity="0.42"/>
<rect x="356.4" y="364.3" width="19.1" height="1" fill="#f1e9da" opacity="0.42"/>
<rect x="384.0" y="364.3" width="19.4" height="1" fill="#f4ede0" opacity="0.42"/>
<rect x="406.7" y="364.3" width="18.2" height="1" fill="#c2af8e" opacity="0.42"/>
<rect x="265.1" y="365.9" width="10.1" height="1" fill="#b8a482" opacity="0.42"/>
<rect x="281.6" y="365.9" width="24.4" height="1" fill="#b09b77" opacity="0.42"/>
<rect x="307.4" y="365.9" width="25.5" height="1" fill="#b09b77" opacity="0.42"/>
<rect x="338.8" y="365.9" width="21.4" height="1" fill="#f1e9da" opacity="0.42"/>
<rect x="361.5" y="365.9" width="23.2" height="1" fill="#c2af8e" opacity="0.42"/>
<rect x="386.4" y="365.9" width="10.0" height="1" fill="#c2af8e" opacity="0.42"/>
<rect x="399.4" y="365.9" width="10.4" height="1" fill="#f4ede0" opacity="0.42"/>
<rect x="417.9" y="365.9" width="9.7" height="1" fill="#b8a482" opacity="0.42"/>
<rect x="276.8" y="367.2" width="8.8" height="1" fill="#ece2cf" opacity="0.42"/>
<rect x="289.6" y="367.2" width="16.5" height="1" fill="#f1e9da" opacity="0.42"/>
<rect x="309.8" y="367.2" width="21.9" height="1" fill="#f1e9da" opacity="0.42"/>
<rect x="335.7" y="367.2" width="26.3" height="1" fill="#f1e9da" opacity="0.42"/>
<rect x="364.4" y="367.2" width="6.2" height="1" fill="#b09b77" opacity="0.42"/>
<rect x="372.1" y="367.2" width="27.4" height="1" fill="#c2af8e" opacity="0.42"/>
<rect x="407.6" y="367.2" width="21.5" height="1" fill="#f1e9da" opacity="0.42"/>
<rect x="269.6" y="369.2" width="26.3" height="1" fill="#b09b77" opacity="0.42"/>
<rect x="304.1" y="369.2" width="22.0" height="1" fill="#f4ede0" opacity="0.42"/>
<rect x="330.9" y="369.2" width="11.1" height="1" fill="#b8a482" opacity="0.42"/>
<rect x="345.1" y="369.2" width="23.1" height="1" fill="#ece2cf" opacity="0.42"/>
<rect x="370.1" y="369.2" width="18.1" height="1" fill="#c2af8e" opacity="0.42"/>
<rect x="396.3" y="369.2" width="14.9" height="1" fill="#ece2cf" opacity="0.42"/>
<rect x="419.3" y="369.2" width="9.5" height="1" fill="#b8a482" opacity="0.42"/>
<rect x="272.2" y="371.2" width="4.3" height="1" fill="#b09b77" opacity="0.42"/>
<rect x="279.4" y="371.2" width="24.2" height="1" fill="#ece2cf" opacity="0.42"/>
<rect x="306.8" y="371.2" width="10.2" height="1" fill="#ece2cf" opacity="0.42"/>
<rect x="322.7" y="371.2" width="12.0" height="1" fill="#b8a482" opacity="0.42"/>
<rect x="335.9" y="371.2" width="21.4" height="1" fill="#c2af8e" opacity="0.42"/>
<rect x="362.9" y="371.2" width="9.1" height="1" fill="#f4ede0" opacity="0.42"/>
<rect x="379.2" y="371.2" width="18.8" height="1" fill="#c2af8e" opacity="0.42"/>
<rect x="400.8" y="371.2" width="11.5" height="1" fill="#f4ede0" opacity="0.42"/>
<rect x="421.4" y="371.2" width="7.1" height="1" fill="#b8a482" opacity="0.42"/>
<rect x="271.5" y="372.5" width="20.9" height="1" fill="#f4ede0" opacity="0.42"/>
<rect x="302.0" y="372.5" width="23.1" height="1" fill="#f1e9da" opacity="0.42"/>
<rect x="329.7" y="372.5" width="16.5" height="1" fill="#f1e9da" opacity="0.42"/>
<rect x="347.7" y="372.5" width="18.6" height="1" fill="#b8a482" opacity="0.42"/>
<rect x="370.0" y="372.5" width="11.8" height="1" fill="#c2af8e" opacity="0.42"/>
<rect x="384.1" y="372.5" width="26.4" height="1" fill="#c2af8e" opacity="0.42"/>
<rect x="415.6" y="372.5" width="8.7" height="1" fill="#b8a482" opacity="0.42"/>
<rect x="271.2" y="374.5" width="20.5" height="1" fill="#ece2cf" opacity="0.42"/>
<rect x="297.4" y="374.5" width="22.6" height="1" fill="#b8a482" opacity="0.42"/>
<rect x="326.9" y="374.5" width="19.0" height="1" fill="#ece2cf" opacity="0.42"/>
<rect x="351.2" y="374.5" width="10.1" height="1" fill="#f4ede0" opacity="0.42"/>
<rect x="366.9" y="374.5" width="14.8" height="1" fill="#ece2cf" opacity="0.42"/>
<rect x="391.2" y="374.5" width="14.0" height="1" fill="#f4ede0" opacity="0.42"/>
<rect x="409.6" y="374.5" width="14.7" height="1" fill="#f4ede0" opacity="0.42"/>
<rect x="266.3" y="376.1" width="14.9" height="1" fill="#f4ede0" opacity="0.42"/>
<rect x="290.5" y="376.1" width="7.2" height="1" fill="#b09b77" opacity="0.42"/>
<rect x="299.9" y="376.1" width="15.2" height="1" fill="#b09b77" opacity="0.42"/>
<rect x="316.4" y="376.1" width="19.8" height="1" fill="#f4ede0" opacity="0.42"/>
<rect x="344.1" y="376.1" width="14.5" height="1" fill="#b8a482" opacity="0.42"/>
<rect x="360.9" y="376.1" width="20.7" height="1" fill="#f4ede0" opacity="0.42"/>
<rect x="391.3" y="376.1" width="5.2" height="1" fill="#f1e9da" opacity="0.42"/>
<rect x="405.7" y="376.1" width="20.1" height="1" fill="#b09b77" opacity="0.42"/>
<rect x="266.5" y="377.4" width="23.6" height="1" fill="#b09b77" opacity="0.42"/>
<rect x="298.7" y="377.4" width="8.1" height="1" fill="#c2af8e" opacity="0.42"/>
<rect x="311.2" y="377.4" width="23.4" height="1" fill="#f4ede0" opacity="0.42"/>
<rect x="338.6" y="377.4" width="7.0" height="1" fill="#c2af8e" opacity="0.42"/>
<rect x="350.7" y="377.4" width="17.2" height="1" fill="#b8a482" opacity="0.42"/>
<rect x="371.3" y="377.4" width="21.8" height="1" fill="#f4ede0" opacity="0.42"/>
<rect x="402.2" y="377.4" width="15.3" height="1" fill="#c2af8e" opacity="0.42"/>
<rect x="424.0" y="377.4" width="10.9" height="1" fill="#ece2cf" opacity="0.42"/>
<rect x="270.0" y="379.0" width="7.1" height="1" fill="#c2af8e" opacity="0.42"/>
<rect x="286.3" y="379.0" width="15.8" height="1" fill="#b09b77" opacity="0.42"/>
<rect x="306.2" y="379.0" width="10.0" height="1" fill="#f1e9da" opacity="0.42"/>
<rect x="321.7" y="379.0" width="23.5" height="1" fill="#f4ede0" opacity="0.42"/>
<rect x="347.6" y="379.0" width="24.5" height="1" fill="#f1e9da" opacity="0.42"/>
<rect x="375.9" y="379.0" width="21.5" height="1" fill="#f1e9da" opacity="0.42"/>
<rect x="404.6" y="379.0" width="19.8" height="1" fill="#b8a482" opacity="0.42"/>
</g>
<rect x="422" y="78.4" width="145.3" height="126" fill="#f8f8f8"/>
<path d="M424.90 78.4V204.2M436.75 78.4V204.2M448.60 78.4V204.2M460.45 78.4V204.2M472.30 78.4V204.2M484.15 78.4V204.2M496.00 78.4V204.2M507.85 78.4V204.2M519.70 78.4V204.2M531.55 78.4V204.2M543.40 78.4V204.2M555.25 78.4V204.2M422 79.55H567.3M422 91.30H567.3M422 103.05H567.3M422 114.80H567.3M422 126.55H567.3M422 138.30H567.3M422 150.05H567.3M422 161.80H567.3M422 173.55H567.3M422 185.30H567.3M422 197.05H567.3" stroke="#e0e0e0" stroke-width="0.8" fill="none"/>
<rect x="422" y="78.4" width="5.2" height="97" fill="#eeeeee"/>
<rect x="429" y="210.8" width="83.3" height="168.7" fill="#ececec"/>
<rect x="485" y="289" width="82.3" height="90.5" fill="#ececec"/>
<path d="M436.20 210.8V379.5M448.20 210.8V379.5M460.20 210.8V379.5M472.20 210.8V379.5M484.20 210.8V379.5M496.20 210.8V379.5M508.20 210.8V379.5M429 224.30H512M429 236.20H512M429 248.10H512M429 260.00H512M429 271.90H512M429 283.80H512M429 295.70H512M429 307.60H512M429 319.50H512M429 331.40H512M429 343.30H512M429 355.20H512M429 367.10H512M429 379.00H512" stroke="#dcdcdc" stroke-width="0.8" fill="none"/>
<!-- livgap -->
<rect x="421.8" y="214" width="7.4" height="29" fill="#e9e9e9"/>
<!-- doorgap -->
<rect x="429" y="204" width="34" height="7" fill="#efefef"/>
<!-- toparc -->
<path d="M549.8 60.3Q557 64.5 565.3 60.6L565.9 62.6" fill="none" stroke="#555" stroke-width="0.7"/>
<!-- ===== bathroom floor ===== -->
<path d="M490.5 379.5V313L511 295.5L514.5 294.5H567.3V379.5Z" fill="#0cb5d9"/>
<path d="M496.4 294V379.5M507.9 294V379.5M519.4 294V379.5M530.9 294V379.5M542.4 294V379.5M553.9 294V379.5M565.4 294V379.5M488 302.9H567.3M488 314.4H567.3M488 325.9H567.3M488 337.4H567.3M488 348.9H567.3M488 360.4H567.3M488 371.9H567.3" stroke="#8ad6ea" stroke-width="0.75" fill="none" clip-path="url(#bathclip)"/>
<rect x="509.3" y="319.7" width="47.2" height="23.3" fill="#0b3e9e"/>
<!-- ===== stairs ===== -->
<path d="M512.3 210.3H567V289.5H521V259H512.3Z" fill="#f6ecd4" stroke="#555" stroke-width="0.7"/>
<rect x="512.3" y="240.7" width="13.1" height="18.3" fill="#ececec"/>
<rect x="512" y="259.3" width="8.8" height="30.6" fill="#ececec"/>
<rect x="525.4" y="241.8" width="15.1" height="16.2" fill="url(#diam)"/>
<path d="M521.4 210.3V240.7M530.8 210.3V240.7M540.5 210.3V289.5M512.3 240.7H567M521 259H567M540.5 240.7L550.1 210.3M540.5 240.7L566.8 211M540.5 240.7L566.8 227.7M540.5 240.7L566.8 234.5M553.4 226.6V258M540.5 250.5H567M540.5 259L566.8 262M540.5 259L566.8 274.3M540.5 259L566.8 285M540.5 259L553.4 289.5M540.5 274.3H553.4V259M525.2 259V289.5M530 259V289.5M535.5 259V289.5M512.8 240.7V259M515.6 240.7V259" stroke="#555" stroke-width="0.55" fill="none"/>
<path d="M512.3 226.6H537M521 275H540.5" stroke="#333" stroke-width="0.6"/>
<path d="M538.5 226.6L535.8 225.2V228Z M523 275L525.6 273.6V276.4Z M553.4 240L552.1 237.2H554.7Z" fill="#222"/>
<!-- ===== walls ===== -->
<g fill="#7c7c7c" stroke="#3a3a3a" stroke-width="1.1">
<!-- top wall -->
<rect x="269" y="71" width="306" height="7.7"/>
<!-- left wall -->
<rect x="269" y="71" width="7.7" height="316"/>
<!-- right wall -->
<rect x="567.3" y="71" width="7.7" height="316"/>
<!-- bottom wall -->
<rect x="269" y="379.5" width="306" height="8"/>
<!-- kitchen/living partition -->
<rect x="421.8" y="175" width="7.3" height="39.8"/>
<rect x="421.8" y="242.4" width="7.3" height="137.5"/>
<rect x="429" y="204" width="3.3" height="10.8"/>
<rect x="462" y="204.2" width="105.5" height="6.6"/>
<!-- bathroom walls -->
<rect x="514" y="289.6" width="53.5" height="4.8"/>
<path d="M485 379.5V316.5L491 311.2L493.3 313.8L489.9 316.9V379.5Z"/>
<path d="M510.5 294L514 289.6L514.6 294.4L512.6 296.2Z"/>
</g>
<g fill="#7c7c7c" stroke="none">
<!-- top wall -->
<rect x="269" y="71" width="306" height="7.7"/>
<!-- left wall -->
<rect x="269" y="71" width="7.7" height="316"/>
<!-- right wall -->
<rect x="567.3" y="71" width="7.7" height="316"/>
<!-- bottom wall -->
<rect x="269" y="379.5" width="306" height="8"/>
<!-- kitchen/living partition -->
<rect x="421.8" y="175" width="7.3" height="39.8"/>
<rect x="421.8" y="242.4" width="7.3" height="137.5"/>
<rect x="429" y="204" width="3.3" height="10.8"/>
<rect x="462" y="204.2" width="105.5" height="6.6"/>
<!-- bathroom walls -->
<rect x="514" y="289.6" width="53.5" height="4.8"/>
<path d="M485 379.5V316.5L491 311.2L493.3 313.8L489.9 316.9V379.5Z"/>
<path d="M510.5 294L514 289.6L514.6 294.4L512.6 296.2Z"/>
</g>
<!-- windows in walls -->
<g>
<rect x="336.6" y="71" width="40.6" height="7.7" fill="#fff" stroke="#555" stroke-width="0.4"/>
<rect x="337.5" y="73.4" width="38.8" height="3" fill="#7a7a7a"/>
<rect x="337.2" y="73.2" width="2" height="3.2" fill="#b0602a"/>
<rect x="374.6" y="73.2" width="2" height="3.2" fill="#b0602a"/>
<rect x="486.8" y="71" width="41.3" height="7.7" fill="#fff" stroke="#555" stroke-width="0.4"/>
<rect x="487.7" y="73.4" width="39.5" height="3" fill="#7a7a7a"/>
<rect x="487.4" y="73.2" width="2" height="3.2" fill="#b0602a"/>
<rect x="525.6" y="73.2" width="2" height="3.2" fill="#b0602a"/>
<rect x="269" y="143.8" width="7.7" height="40.5" fill="#fff" stroke="#555" stroke-width="0.4"/>
<rect x="271.4" y="144.7" width="3" height="38.7" fill="#8a8a8a"/>
<rect x="271.2" y="144.4" width="3.2" height="2" fill="#b0602a"/>
<rect x="271.2" y="181.6" width="3.2" height="2" fill="#b0602a"/>
<rect x="269" y="272.8" width="7.7" height="41.3" fill="#fff" stroke="#555" stroke-width="0.4"/>
<rect x="271.4" y="273.7" width="3" height="39.5" fill="#8a8a8a"/>
<rect x="271.2" y="273.4" width="3.2" height="2" fill="#b0602a"/>
<rect x="271.2" y="311.4" width="3.2" height="2" fill="#b0602a"/>
<rect x="337" y="379.5" width="41" height="8" fill="#fff" stroke="#555" stroke-width="0.4"/>
<rect x="337.9" y="382" width="39.2" height="3" fill="#8a8a8a"/>
<rect x="337.6" y="381.8" width="2" height="3.2" fill="#b0602a"/>
<rect x="525" y="379.5" width="21.3" height="8" fill="#fff" stroke="#555" stroke-width="0.4"/>
<rect x="525.8" y="382" width="19.7" height="3" fill="#8a8a8a"/>
<rect x="525.6" y="381.8" width="2" height="3.2" fill="#b0602a"/>
<rect x="543.7" y="381.8" width="2" height="3.2" fill="#b0602a"/>
<!-- entrance opening -->
<rect x="438" y="379.5" width="41" height="8" fill="#ededed"/>
<rect x="437" y="378.5" width="1.6" height="3" fill="#b0602a"/>
<rect x="477.6" y="378.5" width="1.6" height="3" fill="#b0602a"/>
</g>
<path d="M491.2 312.2L513.2 295" stroke="#777" stroke-width="3.2"/>
<path d="M491.2 312.2L513.2 295" stroke="#f4f4f4" stroke-width="2.2"/>
<!-- door arcs -->
<g fill="none" stroke="#6a6a6a" stroke-width="0.7">
<path d="M422 213.8A28.5 28.5 0 0 0 393.5 242.3H422"/>
<path d="M432.5 206.5V175.5A31 31 0 0 1 463.5 206.5"/>
<path d="M512.2 295.3L494.1 274.6A27.3 27.3 0 0 0 490.7 311.7"/>
<path d="M478.4 379.5V340A38 38 0 0 0 440.4 378"/>
</g>
<!-- ===== kitchen furniture ===== -->
<g stroke="#333" stroke-width="0.6">
<rect x="425.2" y="78.4" width="11.2" height="50" fill="#fff"/>
<rect x="436.4" y="78.4" width="11.2" height="50" fill="#fff"/>
<rect x="464.5" y="79.8" width="33.9" height="20.7" fill="#fafafa" stroke="#555"/>
<rect x="468" y="87" width="12.5" height="10" rx="1.5" fill="#f2f2f2" stroke="#777" stroke-width="0.6"/>
<path d="M485 81.2H496.7M485 83.2H496.7M485 85.2H496.7M485 87.2H496.7M485 89.2H496.7M485 91.2H496.7M485 93.2H496.7M485 95.2H496.7M485 97.2H496.7" stroke="#444" stroke-width="0.9"/>
<path d="M485 80.5V98M496.7 80.5V98" stroke="#666" stroke-width="0.5"/>
<path d="M436.4 78.4H480.3V89.3H441.5L436.4 85Z" fill="#c4c4c4"/>
<path d="M447.6 78.4V89.3" stroke-width="0.5"/>
<path d="M441.5 89.6H480.3" stroke="#8a4a1a" stroke-width="1"/>
<rect x="447.6" y="90.1" width="16.9" height="9.5" fill="#fff" stroke-width="0.4"/>
<path d="M480.4 80.8L484 80.5L482 86.8Z" fill="#111" stroke="none"/>
<path d="M498.4 78.4H543.6L543.6 84L530.3 97.3L528.1 100.3H498.4Z" fill="#fff" stroke-width="0.5"/>
<path d="M543.6 78.4H567.3V103.4H563.6L543.6 84Z" fill="#c8c8c8" stroke-width="0.5"/>
<path d="M528.1 100.3L545.1 117.8V176.6H555.5V103.4H567.3" fill="#fff" stroke-width="0.5"/>
<path d="M530.3 97.3L543.6 84L563.6 104.7L549.5 117.3Z" fill="#d9d9d9" stroke="#222" stroke-width="0.6"/>
<path d="M530.3 97.3L549.5 117.3" stroke="#111" stroke-width="1"/>
<path d="M546.6 96.6L550.3 92.9L554.7 97.3L551 101Z" fill="#d0d0d0" stroke="#333" stroke-width="0.5"/>
<rect x="555.5" y="119.5" width="1.5" height="57" fill="#d07a20" stroke="none"/>
<rect x="557" y="119.5" width="10.3" height="27.5" fill="#c4c4c4" stroke-width="0.4"/>
<rect x="557" y="147" width="10.3" height="29.6" fill="#c4c4c4" stroke-width="0.4"/>
<path d="M545.1 126V136M545.1 156V166" stroke="#111" stroke-width="1"/>
<rect x="545.6" y="176.6" width="21.7" height="21.7" fill="#f0961e" stroke="#6a4a1a" stroke-width="0.5"/>
<path d="M547.5 179.5L556.5 191V182.5L565 196.5" fill="none" stroke="#222" stroke-width="0.6"/>
<path d="M481.6 210.8H502.4" stroke="#333" stroke-width="1"/>
</g>
<!-- handles -->
<path d="M455 100.6H458.5M509 100.6H516" stroke="#222" stroke-width="1.1"/>
<!-- ===== living room furniture ===== -->
<g stroke="#2a1a10" stroke-width="0.7">
<rect x="277" y="79.3" width="22.3" height="10.4" fill="#c9632a"/>
<rect x="299.3" y="79.3" width="19.3" height="10.4" fill="#c9632a"/>
<rect x="318.6" y="79.3" width="8.4" height="10.4" fill="#c9632a"/>
<rect x="277" y="89.7" width="9.7" height="7.3" fill="#c9632a"/>
<rect x="277" y="97" width="9.7" height="14.7" fill="#c9632a"/>
<rect x="277" y="111.7" width="9.7" height="6.1" fill="#c9632a"/>
<path d="M299.3 79.3V89.7M318.6 79.3V89.7M277 97H286.7M277 111.7H286.7M277 89.7H286.7" stroke="#111" stroke-width="1"/>
<path d="M277 79.3H327V89.7H286.7V117.8H277Z" fill="none" stroke="#111" stroke-width="1.3"/>
<!-- table & chairs -->
<rect x="322" y="120.8" width="16.8" height="14.4" fill="#c9632a"/>
<rect x="345.3" y="120.8" width="15.4" height="14.4" fill="#c9632a"/>
<rect x="322.7" y="165.2" width="16.7" height="12.8" fill="#c9632a"/>
<rect x="346.3" y="165.2" width="16.7" height="12.8" fill="#c9632a"/>
<path d="M322 123.2H338.8M345.3 123.2H360.7M322.7 175.5H339.4M346.3 175.5H363" stroke-width="0.6"/>
<rect x="316.4" y="135.2" width="50.6" height="30" fill="#c9632a"/>
<rect x="329.6" y="149.4" width="26.6" height="2" fill="#111" stroke="none"/>
<!-- bookshelf -->
<rect x="277.8" y="196.6" width="4.5" height="51.2" fill="#c9632a"/>
<rect x="282.3" y="196.6" width="5.9" height="51.2" fill="#111"/>
</g>
<path d="M283.2 201H287M283.2 205.5H287M283.2 214H287M283.2 222H287M283.2 230H287M283.2 238H287M283.2 243H287" stroke="#ddd" stroke-width="0.7"/>
<circle cx="294.6" cy="225.2" r="5.5" fill="#000"/>
<!-- radiators -->
<g>
<rect x="340" y="79.2" width="34.5" height="5.5" rx="1.5" fill="#444"/>
<path d="M341.5 81.9H373" stroke="#eee" stroke-width="2.2" stroke-dasharray="1.6 0.9"/>
<rect x="277.9" y="147" width="5.6" height="34.7" rx="2.5" fill="#666"/>
<path d="M280.7 149V180.5" stroke="#eee" stroke-width="3.6" stroke-dasharray="0.9 1.2"/>
<rect x="341.7" y="372.7" width="23.3" height="4.6" rx="1.3" fill="#f4f4f4" stroke="#666" stroke-width="0.6"/>
<path d="M343 375H363.8" stroke="#777" stroke-width="3.2" stroke-dasharray="0.9 1.1"/>
<rect x="490.7" y="317" width="2.6" height="21" fill="#ddd" stroke="#777" stroke-width="0.5"/>
</g>
<!-- plant 1 -->
<circle cx="284.3" cy="188.9" r="6.3" fill="#c0622a" stroke="#8c8c8c" stroke-width="0.9"/>
<path d="M284.30 182.30L286.30 186.15L290.58 186.86L287.53 189.95L288.18 194.24L284.30 192.30L280.42 194.24L281.07 189.95L278.02 186.86L282.30 186.15Z" fill="#1b8e1e" stroke="#0a2a0a" stroke-width="0.55" stroke-linejoin="round"/>
<circle cx="284.3" cy="188.9" r="0.6" fill="#111"/>
<!-- sofa -->
<g stroke="#444" stroke-width="0.6">
<rect x="277.4" y="248.6" width="5" height="112.6" fill="#fdfdfd"/>
<rect x="277.4" y="248.6" width="33.4" height="5" fill="#fdfdfd"/>
<rect x="277.4" y="356.2" width="33.4" height="5" fill="#fdfdfd"/>
<rect x="282.4" y="253.6" width="29" height="32" fill="#fffcef"/>
<rect x="282.4" y="285.6" width="29" height="38.1" fill="#fffcef"/>
<rect x="282.4" y="323.7" width="29" height="32.5" fill="#fffcef"/>
</g>
<!-- rug -->
<rect x="312.2" y="255.1" width="49.9" height="71.8" fill="#ab3f2d" stroke="#7a2418" stroke-width="0.6"/>
<rect x="312.7" y="327.4" width="38.3" height="33.6" fill="#fffcef" stroke="#444" stroke-width="0.6"/>
<!-- coffee table -->
<rect x="323.4" y="268.4" width="27.8" height="43.2" fill="#fafafa" stroke="#555" stroke-width="0.4"/>
<rect x="326.4" y="271" width="22.4" height="37.8" fill="#d5c1a1" stroke="#1a1a1a" stroke-width="1.1"/>
<rect x="323.2" y="267.2" width="28.2" height="4" rx="1.2" fill="#d36b26" stroke="#7a3a10" stroke-width="0.4"/>
<rect x="323.2" y="308.4" width="28.2" height="4" rx="1.2" fill="#d36b26" stroke="#7a3a10" stroke-width="0.4"/>
<!-- sideboard -->
<rect x="276.7" y="361.6" width="48.3" height="17.9" fill="#c9632a" stroke="#2a1a10" stroke-width="0.6"/>
<circle cx="286" cy="371.4" r="5.3" fill="#dab08a" stroke="#6a4a3a" stroke-width="0.5"/>
<circle cx="312.7" cy="370.3" r="6.4" fill="#b85a2a" stroke="#7a7a7a" stroke-width="0.8"/>
<path d="M313.88 363.60L315.22 367.87L319.43 369.35L315.79 371.94L315.68 376.41L312.09 373.75L307.81 375.02L309.23 370.79L306.70 367.11L311.17 367.15Z" fill="#1b8e1e" stroke="#0a2a0a" stroke-width="0.55" stroke-linejoin="round"/>
<circle cx="312.7" cy="370.3" r="0.6" fill="#111"/>
<!-- TV cabinet -->
<rect x="407.5" y="277.4" width="14.8" height="100.5" fill="#c9632a" stroke="#2a1a10" stroke-width="0.6"/>
<rect x="412.5" y="287.7" width="3.5" height="35.5" rx="1.5" fill="#222"/>
<rect x="408.7" y="336.5" width="12.7" height="14.8" fill="#333" stroke="#111" stroke-width="0.5"/>
<path d="M407.5 355.7H422.3" stroke="#2a1a10" stroke-width="0.6"/>
<!-- stove (hall side) -->
<rect x="428.6" y="264.4" width="15" height="33.4" fill="#9a9a9a" stroke="#333" stroke-width="0.7"/>
<path d="M434.5 265.5V296.8M437.5 265.5V296.8M440.5 265.5V296.8" stroke="#444" stroke-width="0.7"/>
<path d="M430.3 299V338.5" stroke="#222" stroke-width="4"/>
<path d="M431.5 299.5V338.5" stroke="#eee" stroke-width="2.4" stroke-dasharray="0.8 1.2"/>
<rect x="429.6" y="271.8" width="3.2" height="3" rx="1.4" fill="#fff" stroke="#222" stroke-width="0.6"/>
<rect x="429.6" y="278.5" width="3.2" height="3" rx="1.4" fill="#e8840c" stroke="#222" stroke-width="0.6"/>
<rect x="429.6" y="285.2" width="3.2" height="3" rx="1.4" fill="#fff" stroke="#222" stroke-width="0.6"/>
<rect x="429.6" y="292.9" width="3.2" height="3" rx="1.4" fill="#444" stroke="#222" stroke-width="0.6"/>
<!-- ===== bathroom furniture ===== -->
<g stroke="#555" stroke-width="0.6">
<rect x="556.4" y="294.8" width="9.6" height="52.9" fill="#bdbdbd"/>
<ellipse cx="547.7" cy="307.8" rx="8.3" ry="6.4" fill="#fff" stroke="#6a6a6a" stroke-width="0.9"/>
<ellipse cx="547.2" cy="307.8" rx="5.8" ry="4.3" fill="#fff" stroke="#999" stroke-width="0.4"/>
<rect x="557.6" y="301" width="4.9" height="13.5" rx="1" fill="#fff" stroke="#6a6a6a" stroke-width="0.8"/>
<rect x="542.2" y="322.6" width="13.6" height="17.4" rx="1" fill="#fff" stroke="#777" stroke-width="0.9"/>
<path d="M546.5 331.5H553M550.5 329V334" stroke="#666" stroke-width="0.5"/>
<rect x="491" y="346.5" width="32" height="31.5" rx="2" fill="#fff" stroke="#666" stroke-width="0.8"/>
<rect x="493" y="348.5" width="28" height="27.5" rx="3" fill="#fff" stroke="#aaa" stroke-width="0.5"/>
<circle cx="498.5" cy="352.5" r="1.1" fill="none" stroke="#666" stroke-width="0.5"/>
<rect x="543.7" y="354" width="21.8" height="22" fill="#fff" stroke="#666" stroke-width="0.9"/>
<path d="M543.5 376L566 354" stroke="#333" stroke-width="0.6"/>
</g>
<text x="547" y="368.3" font-size="5.2" font-family="Liberation Sans" fill="#111" stroke="#111" stroke-width="0.15">Boiler</text>

</svg>
<!--/PLAN-->

<div class="a" style="left:632.8px;top:60px;width:7.2px;height:326px;background:#2f5597"></div>
<div class="a" style="left:635.2px;top:95px;width:1px;height:254px;background:#6f88b8"></div>
<div class="a" style="left:633px;top:386px;width:7px;height:7px;background:#f4f4f4"></div>
<div class="a" style="left:200px;top:386px;width:433px;height:7px;background:#2f5597"></div>
<div class="a" style="left:207px;top:389.3px;width:413.6px;height:1.2px;background:#6f88b8"></div>
<div class="a" style="left:0;top:0;width:1px;height:406px;background:#a8a8a8;z-index:5"></div>
<div id="status" class="a">
  <div class="t" style="left:3px;top:3.5px;font-size:7px;color:#111;-webkit-text-stroke:0.1px #111">Проект: 8255 × 8400 мм, Этаж: 2/3 -- Масштаб: 61% -- Используйте Ctrl + колесо мыши для зума.</div>
  <div class="t" style="left:563.4px;top:3px;font-size:7.6px;color:#111;-webkit-text-stroke:0.1px #111;transform:scaleX(0.875);transform-origin:0 0">(x: 10083 y: 1628 мм)</div>
  <svg class="a" style="left:632px;top:398px" width="8" height="8" viewBox="0 0 8 8"><g fill="#b0b0b0"><circle cx="6.5" cy="1.5" r="0.5"/><circle cx="6.5" cy="4" r="0.5"/><circle cx="4" cy="4" r="0.5"/><circle cx="6.5" cy="6.5" r="0.5"/><circle cx="4" cy="6.5" r="0.5"/><circle cx="1.5" cy="6.5" r="0.5"/></g></svg>
</div>
</div>
</body></html>
